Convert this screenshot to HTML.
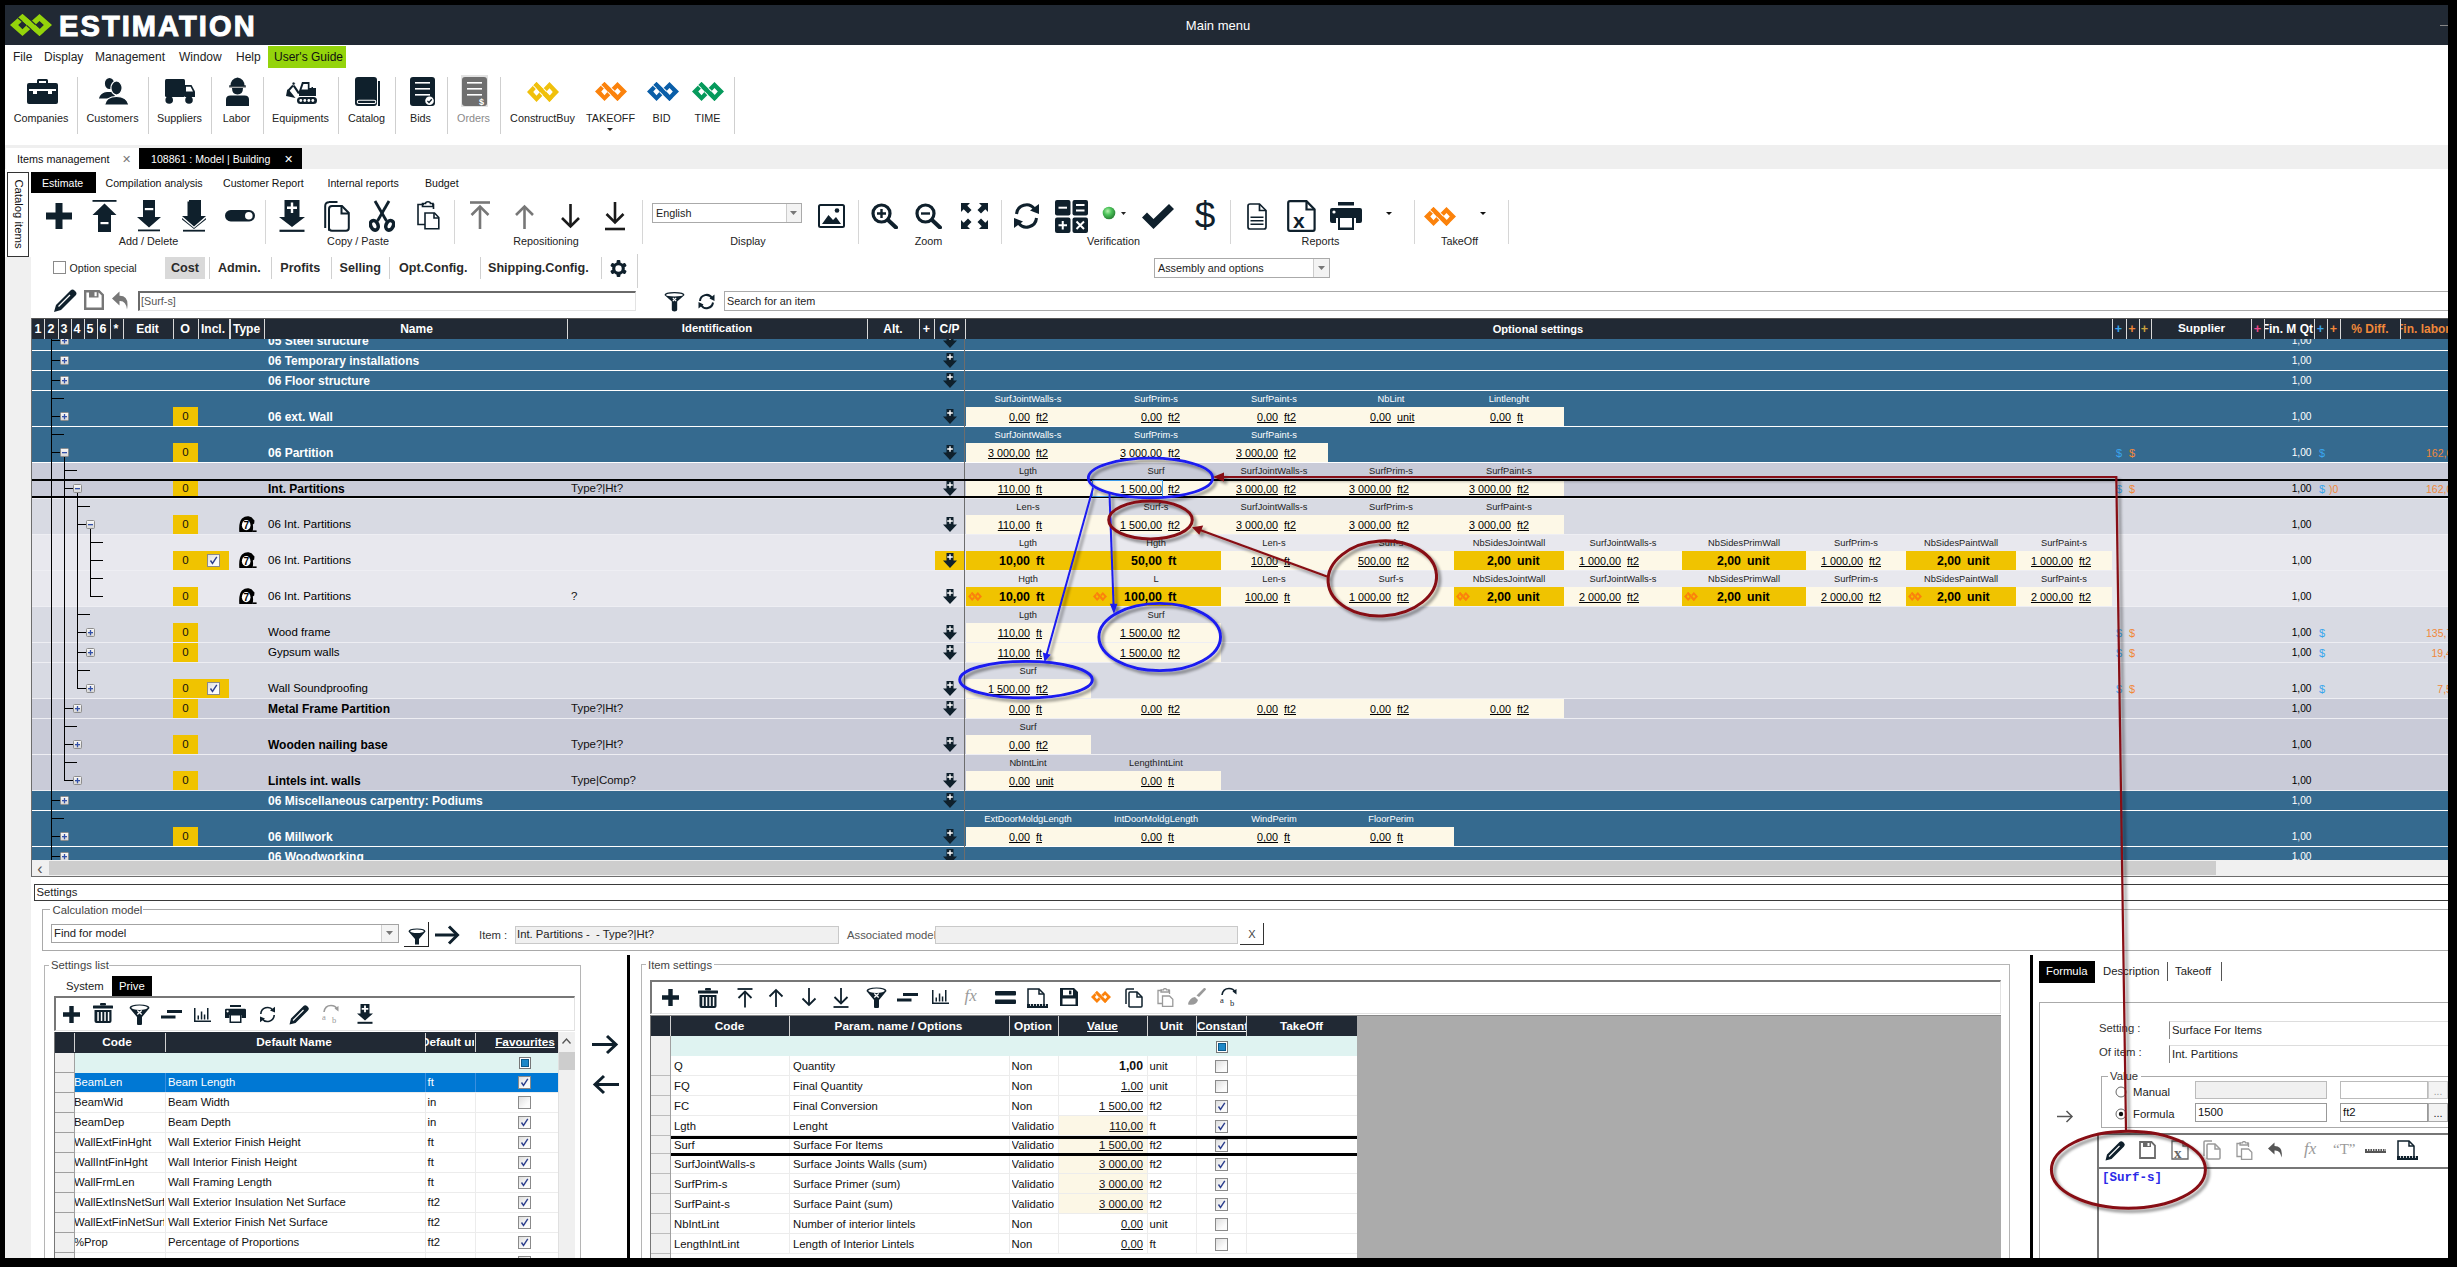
<!DOCTYPE html>
<html><head><meta charset="utf-8"><style>
html,body{margin:0;padding:0;}
body{width:2457px;height:1267px;overflow:hidden;position:relative;font-family:"Liberation Sans",sans-serif;background:#000;}
#root div{position:absolute;box-sizing:border-box;text-decoration-skip-ink:none;}
#root svg{position:absolute;}
</style></head><body><div id="root">
<div style="left:0px;top:0px;width:2457px;height:1267px;background:#000"></div>
<div style="left:5px;top:5px;width:2443px;height:1253px;background:#fff"></div>
<div style="left:5px;top:5px;width:2443px;height:40px;background:#212934"></div>
<svg style="position:absolute;left:10px;top:14px" width="42" height="22" viewBox="0 0 42.7 22.4" preserveAspectRatio="none"><g fill="#94d40b"><path fill-rule="evenodd" d="M0 11.3 L12.7 0 L25.4 11.3 L12.7 22.4 Z M8.3 11.3 L12.7 15.5 L17.1 11.3 L12.7 7.1 Z"/>
<path fill-rule="evenodd" d="M17.3 11.3 L30 0 L42.7 11.3 L30 22.4 Z M25.6 11.3 L30 15.5 L34.4 11.3 L30 7.1 Z"/>
<path d="M12.67 0 L34.25 18.6 L30 22.3 L8.6 3.6 Z"/>
<g stroke="#212934" stroke-width="1.2" fill="none"><path d="M8.2 4 L12.4 7.6"/><path d="M16.9 11.6 L21.2 15.4"/><path d="M21.8 7.2 L26.1 10.9"/></g></g></svg>
<div style="left:59px;top:6.5px;height:38px;line-height:38px;font-size:29px;font-weight:bold;color:#fff;white-space:nowrap;letter-spacing:2.1px;-webkit-text-stroke:1px #fff">ESTIMATION</div>
<div style="left:1018.0px;width:400px;text-align:center;top:16.5px;height:17px;line-height:17px;font-size:13px;font-weight:normal;color:#fff;white-space:nowrap;">Main menu</div>
<div style="left:2440px;top:25px;width:8px;height:1px;background:#888"></div>
<div style="left:13px;top:49.0px;height:16px;line-height:16px;font-size:12px;font-weight:normal;color:#222;white-space:nowrap;">File</div>
<div style="left:44px;top:49.0px;height:16px;line-height:16px;font-size:12px;font-weight:normal;color:#222;white-space:nowrap;">Display</div>
<div style="left:95px;top:49.0px;height:16px;line-height:16px;font-size:12px;font-weight:normal;color:#222;white-space:nowrap;">Management</div>
<div style="left:179px;top:49.0px;height:16px;line-height:16px;font-size:12px;font-weight:normal;color:#222;white-space:nowrap;">Window</div>
<div style="left:236px;top:49.0px;height:16px;line-height:16px;font-size:12px;font-weight:normal;color:#222;white-space:nowrap;">Help</div>
<div style="left:268px;top:46px;width:78px;height:22px;background:#94d40b"></div>
<div style="left:274px;top:49.0px;height:16px;line-height:16px;font-size:12px;font-weight:normal;color:#111;white-space:nowrap;">User's Guide</div>
<div style="left:77px;top:77px;width:1px;height:57px;background:#cfcfcf"></div>
<div style="left:148px;top:77px;width:1px;height:57px;background:#cfcfcf"></div>
<div style="left:211px;top:77px;width:1px;height:57px;background:#cfcfcf"></div>
<div style="left:263px;top:77px;width:1px;height:57px;background:#cfcfcf"></div>
<div style="left:338px;top:77px;width:1px;height:57px;background:#cfcfcf"></div>
<div style="left:395px;top:77px;width:1px;height:57px;background:#cfcfcf"></div>
<div style="left:447px;top:77px;width:1px;height:57px;background:#cfcfcf"></div>
<div style="left:500px;top:77px;width:1px;height:57px;background:#cfcfcf"></div>
<div style="left:734px;top:77px;width:1px;height:57px;background:#cfcfcf"></div>
<div style="left:-19.0px;width:120px;text-align:center;top:111.0px;height:14px;line-height:14px;font-size:10.8px;font-weight:normal;color:#222;white-space:nowrap;">Companies</div>
<div style="left:52.5px;width:120px;text-align:center;top:111.0px;height:14px;line-height:14px;font-size:10.8px;font-weight:normal;color:#222;white-space:nowrap;">Customers</div>
<div style="left:119.5px;width:120px;text-align:center;top:111.0px;height:14px;line-height:14px;font-size:10.8px;font-weight:normal;color:#222;white-space:nowrap;">Suppliers</div>
<div style="left:176.5px;width:120px;text-align:center;top:111.0px;height:14px;line-height:14px;font-size:10.8px;font-weight:normal;color:#222;white-space:nowrap;">Labor</div>
<div style="left:240.5px;width:120px;text-align:center;top:111.0px;height:14px;line-height:14px;font-size:10.8px;font-weight:normal;color:#222;white-space:nowrap;">Equipments</div>
<div style="left:306.5px;width:120px;text-align:center;top:111.0px;height:14px;line-height:14px;font-size:10.8px;font-weight:normal;color:#222;white-space:nowrap;">Catalog</div>
<div style="left:360.5px;width:120px;text-align:center;top:111.0px;height:14px;line-height:14px;font-size:10.8px;font-weight:normal;color:#222;white-space:nowrap;">Bids</div>
<div style="left:413.5px;width:120px;text-align:center;top:111.0px;height:14px;line-height:14px;font-size:10.8px;font-weight:normal;color:#8a8a8a;white-space:nowrap;">Orders</div>
<div style="left:482.5px;width:120px;text-align:center;top:111.0px;height:14px;line-height:14px;font-size:10.8px;font-weight:normal;color:#222;white-space:nowrap;">ConstructBuy</div>
<div style="left:550.5px;width:120px;text-align:center;top:111.0px;height:14px;line-height:14px;font-size:10.8px;font-weight:normal;color:#222;white-space:nowrap;">TAKEOFF</div>
<div style="left:601.5px;width:120px;text-align:center;top:111.0px;height:14px;line-height:14px;font-size:10.8px;font-weight:normal;color:#222;white-space:nowrap;">BID</div>
<div style="left:647.5px;width:120px;text-align:center;top:111.0px;height:14px;line-height:14px;font-size:10.8px;font-weight:normal;color:#222;white-space:nowrap;">TIME</div>
<svg style="position:absolute;left:607px;top:128px;" width="6" height="4" viewBox="0 0 6 4"><path d="M0 0 L6 0 L3 3 Z" fill="#222"/></svg>
<svg style="position:absolute;left:527px;top:82px" width="32" height="20" viewBox="0 0 42.7 22.4" preserveAspectRatio="none"><g fill="#f0c00c"><path fill-rule="evenodd" d="M0 11.3 L12.7 0 L25.4 11.3 L12.7 22.4 Z M8.3 11.3 L12.7 15.5 L17.1 11.3 L12.7 7.1 Z"/>
<path fill-rule="evenodd" d="M17.3 11.3 L30 0 L42.7 11.3 L30 22.4 Z M25.6 11.3 L30 15.5 L34.4 11.3 L30 7.1 Z"/>
<path d="M12.67 0 L34.25 18.6 L30 22.3 L8.6 3.6 Z"/>
<g stroke="#fff" stroke-width="1.2" fill="none"><path d="M8.2 4 L12.4 7.6"/><path d="M16.9 11.6 L21.2 15.4"/><path d="M21.8 7.2 L26.1 10.9"/></g></g></svg>
<svg style="position:absolute;left:595px;top:81.5px" width="32" height="19" viewBox="0 0 42.7 22.4" preserveAspectRatio="none"><g fill="#fb820c"><path fill-rule="evenodd" d="M0 11.3 L12.7 0 L25.4 11.3 L12.7 22.4 Z M8.3 11.3 L12.7 15.5 L17.1 11.3 L12.7 7.1 Z"/>
<path fill-rule="evenodd" d="M17.3 11.3 L30 0 L42.7 11.3 L30 22.4 Z M25.6 11.3 L30 15.5 L34.4 11.3 L30 7.1 Z"/>
<path d="M12.67 0 L34.25 18.6 L30 22.3 L8.6 3.6 Z"/>
<g stroke="#fff" stroke-width="1.2" fill="none"><path d="M8.2 4 L12.4 7.6"/><path d="M16.9 11.6 L21.2 15.4"/><path d="M21.8 7.2 L26.1 10.9"/></g></g></svg>
<svg style="position:absolute;left:647px;top:81.5px" width="32" height="19" viewBox="0 0 42.7 22.4" preserveAspectRatio="none"><g fill="#0a5ea8"><path fill-rule="evenodd" d="M0 11.3 L12.7 0 L25.4 11.3 L12.7 22.4 Z M8.3 11.3 L12.7 15.5 L17.1 11.3 L12.7 7.1 Z"/>
<path fill-rule="evenodd" d="M17.3 11.3 L30 0 L42.7 11.3 L30 22.4 Z M25.6 11.3 L30 15.5 L34.4 11.3 L30 7.1 Z"/>
<path d="M12.67 0 L34.25 18.6 L30 22.3 L8.6 3.6 Z"/>
<g stroke="#fff" stroke-width="1.2" fill="none"><path d="M8.2 4 L12.4 7.6"/><path d="M16.9 11.6 L21.2 15.4"/><path d="M21.8 7.2 L26.1 10.9"/></g></g></svg>
<svg style="position:absolute;left:692px;top:81.5px" width="32" height="19" viewBox="0 0 42.7 22.4" preserveAspectRatio="none"><g fill="#069a5c"><path fill-rule="evenodd" d="M0 11.3 L12.7 0 L25.4 11.3 L12.7 22.4 Z M8.3 11.3 L12.7 15.5 L17.1 11.3 L12.7 7.1 Z"/>
<path fill-rule="evenodd" d="M17.3 11.3 L30 0 L42.7 11.3 L30 22.4 Z M25.6 11.3 L30 15.5 L34.4 11.3 L30 7.1 Z"/>
<path d="M12.67 0 L34.25 18.6 L30 22.3 L8.6 3.6 Z"/>
<g stroke="#fff" stroke-width="1.2" fill="none"><path d="M8.2 4 L12.4 7.6"/><path d="M16.9 11.6 L21.2 15.4"/><path d="M21.8 7.2 L26.1 10.9"/></g></g></svg>
<svg style="position:absolute;left:27px;top:79px;" width="31" height="25" viewBox="0 0 31 25"><g fill="#0f202c"><path d="M10 5 V1.5 Q10 0 11.5 0 H19.5 Q21 0 21 1.5 V5 H19 V2 H12 V5 Z"/>
<rect x="0" y="4" width="31" height="21" rx="2"/></g>
<g fill="#fff"><rect x="2" y="10" width="27" height="2"/><rect x="6" y="10" width="4" height="5"/><rect x="21" y="10" width="4" height="5"/></g></svg>
<svg style="position:absolute;left:98px;top:77px;" width="31" height="28" viewBox="0 0 31 28"><g fill="#0f202c" stroke="#fff" stroke-width="1.2">
<ellipse cx="11.5" cy="6.5" rx="5.2" ry="6.2"/>
<path d="M0 22 Q2 15 9 14.5 L14 14.5 Q16 15 18 17 L16 22 Z"/>
<ellipse cx="18.5" cy="11" rx="5.6" ry="7"/>
<path d="M6.5 28 Q8 19.5 18.5 19.5 Q29 19.5 31 28 Z"/></g></svg>
<svg style="position:absolute;left:165px;top:79px;" width="30" height="25" viewBox="0 0 30 25"><g fill="#0f202c"><rect x="0" y="0" width="20" height="18" rx="1.5"/>
<path d="M20 6 H26.5 L30 12.5 V18 H20 Z"/><circle cx="4.2" cy="21" r="3.8"/><circle cx="24" cy="21" r="3.8"/></g>
<path d="M21 7.8 H25.6 L28 12.4 H21 Z" fill="#fff"/></svg>
<svg style="position:absolute;left:226px;top:77px;" width="23" height="29" viewBox="0 0 23 29"><g fill="#0f202c"><path d="M4.5 9 Q4.5 1.5 11.5 0.5 Q18.5 1.5 18.5 9 Z"/>
<rect x="3.2" y="8.3" width="16.6" height="2"/>
<path d="M6 11 Q6 17.5 11.5 17.5 Q17 17.5 17 11 Z"/>
<path d="M0 29 V22.5 Q0 18.5 4.5 18.5 H18.5 Q23 18.5 23 22.5 V29 Z"/></g>
<rect x="3.2" y="9.6" width="16.6" height="0.8" fill="#888"/></svg>
<svg style="position:absolute;left:286px;top:81px;" width="32" height="23" viewBox="0 0 32 23"><g fill="#0f202c">
<path d="M13 10 L16 1 H23.5 V7 H25.5 V6 H27 V7 H30 V15 H13 Z"/>
<rect x="11" y="16" width="20" height="7" rx="3.5"/>
<path d="M14 12 L7.5 2.5 L1.5 9 L3 10.5 L7.2 5.7 L12 13 Z"/>
<path d="M0 15 L1.2 8.5 L3.5 9.5 L9.5 17 Z"/></g>
<path d="M15.5 8.5 L17.5 3 H21.8 V8.5 Z" fill="#fff"/>
<g fill="#fff"><circle cx="14.8" cy="19.5" r="1.4"/><circle cx="18.8" cy="19.5" r="1.4"/><circle cx="22.8" cy="19.5" r="1.4"/><circle cx="26.8" cy="19.5" r="1.4"/></g>
<circle cx="7.6" cy="2.6" r="1.6" fill="#0f202c" stroke="#fff" stroke-width="0.7"/></svg>
<svg style="position:absolute;left:355px;top:77px;" width="25" height="29" viewBox="0 0 25 29"><g fill="#0f202c"><rect x="0" y="0" width="22" height="29" rx="3"/><rect x="23" y="4" width="2" height="25"/></g>
<rect x="2.3" y="23.2" width="18.5" height="3.3" rx="1.6" fill="#0f202c" stroke="#fff" stroke-width="1.1"/></svg>
<svg style="position:absolute;left:410px;top:77px;" width="25" height="29" viewBox="0 0 25 29"><rect x="0" y="0" width="25" height="29" rx="3" fill="#0f202c"/>
<g fill="#fff"><rect x="5" y="5" width="15" height="1.6"/><rect x="5" y="11" width="15" height="1.6"/><rect x="5" y="17" width="15" height="1.6"/></g><circle cx="19.5" cy="23.8" r="4.3" fill="#fff"/><path d="M17.4 23.9 L19 25.5 L21.8 22.3" stroke="#0f202c" stroke-width="1.3" fill="none"/></svg>
<div style="left:461px;top:75px;width:27px;height:32px;background:#e3e3e3"></div>
<svg style="position:absolute;left:462px;top:77px;" width="25" height="29" viewBox="0 0 25 29"><rect x="0" y="0" width="25" height="29" rx="3" fill="#6f6f6f"/>
<g fill="#fff"><rect x="5" y="5" width="15" height="1.6"/><rect x="5" y="11" width="15" height="1.6"/><rect x="5" y="17" width="15" height="1.6"/></g><text x="17" y="27.5" font-size="9" font-weight="bold" fill="#fff" font-family="Liberation Sans">$</text></svg>
<div style="left:5px;top:145px;width:2443px;height:24px;background:#efefef"></div>
<div style="left:6px;top:148px;width:133px;height:21px;background:#fff"></div>
<div style="left:17px;top:151.5px;height:14px;line-height:14px;font-size:10.8px;font-weight:normal;color:#111;white-space:nowrap;">Items management</div>
<div style="left:116.0px;width:20px;text-align:center;top:151.5px;height:14px;line-height:14px;font-size:11px;font-weight:normal;color:#777;white-space:nowrap;">&#x2715;</div>
<div style="left:139px;top:148px;width:163px;height:21px;background:#000"></div>
<div style="left:151px;top:151.5px;height:14px;line-height:14px;font-size:10.6px;font-weight:normal;color:#fff;white-space:nowrap;">108861 : Model | Building</div>
<div style="left:278.0px;width:20px;text-align:center;top:151.5px;height:14px;line-height:14px;font-size:11px;font-weight:normal;color:#fff;white-space:nowrap;">&#x2715;</div>
<div style="left:5px;top:257px;width:26px;height:1001px;background:#f0f0f0"></div>
<div style="left:7px;top:172px;width:22px;height:85px;background:#fff;border:1px solid #333;box-sizing:border-box"></div>
<div style="left:7px;top:172px;width:22px;height:85px;"><div style="position:absolute;left:11px;top:42px;transform:translate(-50%,-50%) rotate(90deg);font-size:11.3px;white-space:nowrap;color:#111;line-height:13px">Catalog items</div></div>
<div style="left:31px;top:169px;width:2417px;height:89px;background:#fff"></div>
<div style="left:31px;top:172px;width:65px;height:21px;background:#000"></div>
<div style="left:42px;top:175.5px;height:14px;line-height:14px;font-size:10.6px;font-weight:normal;color:#fff;white-space:nowrap;">Estimate</div>
<div style="left:105.5px;top:175.5px;height:14px;line-height:14px;font-size:10.6px;font-weight:normal;color:#111;white-space:nowrap;">Compilation analysis</div>
<div style="left:223px;top:175.5px;height:14px;line-height:14px;font-size:10.6px;font-weight:normal;color:#111;white-space:nowrap;">Customer Report</div>
<div style="left:327.5px;top:175.5px;height:14px;line-height:14px;font-size:10.6px;font-weight:normal;color:#111;white-space:nowrap;">Internal reports</div>
<div style="left:425px;top:175.5px;height:14px;line-height:14px;font-size:10.6px;font-weight:normal;color:#111;white-space:nowrap;">Budget</div>
<div style="left:265px;top:200px;width:1px;height:44px;background:#d6d6d6"></div>
<div style="left:453.5px;top:200px;width:1px;height:44px;background:#d6d6d6"></div>
<div style="left:642px;top:200px;width:1px;height:44px;background:#d6d6d6"></div>
<div style="left:857.5px;top:200px;width:1px;height:44px;background:#d6d6d6"></div>
<div style="left:1000.5px;top:200px;width:1px;height:44px;background:#d6d6d6"></div>
<div style="left:1229.5px;top:200px;width:1px;height:44px;background:#d6d6d6"></div>
<div style="left:1413.5px;top:200px;width:1px;height:44px;background:#d6d6d6"></div>
<div style="left:1507.5px;top:200px;width:1px;height:44px;background:#d6d6d6"></div>
<div style="left:78.5px;width:140px;text-align:center;top:234.0px;height:14px;line-height:14px;font-size:10.8px;font-weight:normal;color:#222;white-space:nowrap;">Add / Delete</div>
<div style="left:288.0px;width:140px;text-align:center;top:234.0px;height:14px;line-height:14px;font-size:10.8px;font-weight:normal;color:#222;white-space:nowrap;">Copy / Paste</div>
<div style="left:476.0px;width:140px;text-align:center;top:234.0px;height:14px;line-height:14px;font-size:10.8px;font-weight:normal;color:#222;white-space:nowrap;">Repositioning</div>
<div style="left:678.0px;width:140px;text-align:center;top:234.0px;height:14px;line-height:14px;font-size:10.8px;font-weight:normal;color:#222;white-space:nowrap;">Display</div>
<div style="left:858.5px;width:140px;text-align:center;top:234.0px;height:14px;line-height:14px;font-size:10.8px;font-weight:normal;color:#222;white-space:nowrap;">Zoom</div>
<div style="left:1043.5px;width:140px;text-align:center;top:234.0px;height:14px;line-height:14px;font-size:10.8px;font-weight:normal;color:#222;white-space:nowrap;">Verification</div>
<div style="left:1250.5px;width:140px;text-align:center;top:234.0px;height:14px;line-height:14px;font-size:10.8px;font-weight:normal;color:#222;white-space:nowrap;">Reports</div>
<div style="left:1389.5px;width:140px;text-align:center;top:234.0px;height:14px;line-height:14px;font-size:10.8px;font-weight:normal;color:#222;white-space:nowrap;">TakeOff</div>
<svg style="position:absolute;left:46px;top:203px;" width="26" height="26" viewBox="0 0 26 26"><path d="M9.5 0 H16.5 V9.5 H26 V16.5 H16.5 V26 H9.5 V16.5 H0 V9.5 H9.5 Z" fill="#0f202c"/></svg>
<svg style="position:absolute;left:92px;top:200px;" width="25" height="32" viewBox="0 0 25 32"><g fill="#0f202c"><rect x="0.5" y="0" width="24" height="1.8"/><path d="M12.5 3.5 L24.5 15 H19 V32 H6 V15 H0.5 Z"/></g><rect x="8.5" y="22" width="8" height="2.2" fill="#fff"/></svg>
<svg style="position:absolute;left:137px;top:200px;" width="24" height="32" viewBox="0 0 24 32"><g fill="#0f202c"><path d="M6 0 H18 V17 H24 L12 27.5 L0 17 H6 Z"/><rect x="1" y="29.5" width="22" height="1.8"/></g><rect x="7.8" y="8" width="8.5" height="2.2" fill="#fff"/></svg>
<svg style="position:absolute;left:182px;top:200px;" width="24" height="32" viewBox="0 0 24 32"><g fill="#0f202c"><path d="M7 0 H19 V16 H24 L12 26.5 L0 16 H5.5 V1.5 H7 Z"/><path d="M0 18 L12 28 L24 18 V19.5 L12 29 L0 19.5 Z"/><rect x="1" y="29.8" width="22" height="1.8"/></g></svg>
<svg style="position:absolute;left:225px;top:210px;" width="30" height="12" viewBox="0 0 30 12"><rect x="0" y="0" width="30" height="11.5" rx="5.75" fill="#0f202c"/><circle cx="23.8" cy="5.75" r="3.8" fill="#fff"/></svg>
<svg style="position:absolute;left:279px;top:200px;" width="26" height="32" viewBox="0 0 26 32"><g fill="#0f202c"><path d="M5.5 0 H20.5 V17 H26 L13 27 L0 17 H5.5 Z"/><rect x="0.5" y="29.7" width="25" height="2.2"/></g><path d="M11.8 2.5 H14.2 V6.5 H18 V9 H14.2 V13 H11.8 V9 H8 V6.5 H11.8 Z" fill="#fff"/></svg>
<svg style="position:absolute;left:324px;top:201px;" width="26" height="31" viewBox="0 0 26 31"><g fill="none" stroke="#0f202c" stroke-width="2"><path d="M5 1 H13.5"/><path d="M1.2 27 V5 Q1.2 1.2 5 1.2"/><path d="M5 29.8 V8 Q5 5 8 5 H18 L24.8 12 V27 Q24.8 29.8 22 29.8 H8 Q5 29.8 5 27"/><path d="M17.5 5.5 V12.5 H24.5"/></g></svg>
<svg style="position:absolute;left:369px;top:200px;" width="26" height="32" viewBox="0 0 26 32"><g fill="none" stroke="#0f202c" stroke-width="2.8"><path d="M6 1 L17.5 21"/><path d="M20 1 L8.5 21"/></g><g fill="none" stroke="#0f202c" stroke-width="3.6"><ellipse cx="5.3" cy="25.3" rx="3.6" ry="5" transform="rotate(-25 5.3 25.3)"/><ellipse cx="20.7" cy="25.3" rx="3.6" ry="5" transform="rotate(25 20.7 25.3)"/></g></svg>
<svg style="position:absolute;left:417px;top:201px;" width="23" height="29" viewBox="0 0 23 29"><g fill="none" stroke="#0f202c" stroke-width="1.6"><path d="M7 3.5 H1 V23.5 H8"/><path d="M15 3.5 H16.5 V8"/><path d="M5.5 5.5 V2.5 H8.5 Q8.5 0.8 11 0.8 Q13.5 0.8 13.5 2.5 H16 V5.5 Z"/><path d="M8 27.8 V12 H17.5 L21.8 16.5 V27.8 Z"/><path d="M17 12 V17 H21.8"/></g></svg>
<svg style="position:absolute;left:470px;top:201px;" width="21" height="29" viewBox="0 0 21 29"><g stroke="#777" stroke-width="2.6" fill="none"><path d="M0 1.5 H20"/><path d="M10 28 V6"/><path d="M1.5 14 L10 5.5 L18.5 14"/></g></svg>
<svg style="position:absolute;left:515px;top:204px;" width="19" height="26" viewBox="0 0 19 26"><g stroke="#777" stroke-width="2.6" fill="none"><path d="M9.5 25 V3"/><path d="M1 11 L9.5 2.5 L18 11"/></g></svg>
<svg style="position:absolute;left:561px;top:204px;" width="19" height="26" viewBox="0 0 19 26"><g stroke="#1a1a1a" stroke-width="2.6" fill="none"><path d="M9.5 0 V22"/><path d="M1 14 L9.5 22.5 L18 14"/></g></svg>
<svg style="position:absolute;left:605px;top:202px;" width="21" height="29" viewBox="0 0 21 29"><g stroke="#1a1a1a" stroke-width="2.6" fill="none"><path d="M10 0 V20"/><path d="M1.5 12 L10 20.5 L18.5 12"/><path d="M0 27 H20"/></g></svg>
<div style="left:652px;top:203px;width:150px;height:20px;background:#fff;border:1px solid #aaa"></div>
<div style="left:786px;top:204px;width:15px;height:18px;background:#f3f3f3;border-left:1px solid #ccc"></div>
<svg style="position:absolute;left:790px;top:211px;" width="7" height="4" viewBox="0 0 7 4"><path d="M0 0 H7 L3.5 4 Z" fill="#777"/></svg>
<div style="left:656px;top:206.0px;height:14px;line-height:14px;font-size:10.8px;font-weight:normal;color:#222;white-space:nowrap;">English</div>
<svg style="position:absolute;left:818px;top:204px;" width="27" height="24" viewBox="0 0 27 24"><rect x="1" y="1" width="25" height="22" rx="1.5" fill="none" stroke="#0f202c" stroke-width="2"/><path d="M4 20 L10.5 11 L15 16 L18 13 L23 20 Z" fill="#0f202c"/><circle cx="19" cy="6.5" r="2.3" fill="#0f202c"/></svg>
<svg style="position:absolute;left:871px;top:203px;" width="27" height="26" viewBox="0 0 27 26"><circle cx="10.5" cy="10.5" r="8.5" fill="none" stroke="#0f202c" stroke-width="3.2"/><path d="M17 17 L25 24.5" stroke="#0f202c" stroke-width="4" stroke-linecap="round"/><path d="M6 10.5 H15 M10.5 6 V15" stroke="#0f202c" stroke-width="2.4"/></svg>
<svg style="position:absolute;left:915px;top:203px;" width="27" height="26" viewBox="0 0 27 26"><circle cx="10.5" cy="10.5" r="8.5" fill="none" stroke="#0f202c" stroke-width="3.2"/><path d="M17 17 L25 24.5" stroke="#0f202c" stroke-width="4" stroke-linecap="round"/><path d="M6 10.5 H15" stroke="#0f202c" stroke-width="2.4"/></svg>
<svg style="position:absolute;left:961px;top:203px;" width="27" height="26" viewBox="0 0 27 26"><g fill="#0f202c"><path d="M0 0 H9 L6.3 2.7 L10.5 7 L7 10.5 L2.7 6.3 L0 9 Z"/><path d="M27 0 V9 L24.3 6.3 L20 10.5 L16.5 7 L20.7 2.7 L18 0 Z"/><path d="M0 26 V17 L2.7 19.7 L7 15.5 L10.5 19 L6.3 23.3 L9 26 Z"/><path d="M27 26 H18 L20.7 23.3 L16.5 19 L20 15.5 L24.3 19.7 L27 17 Z"/></g></svg>
<svg style="position:absolute;left:1013px;top:203px;" width="27" height="26" viewBox="0 0 27 26"><g fill="none" stroke="#0f202c" stroke-width="3"><path d="M3.5 11 A10 10 0 0 1 21.5 6"/><path d="M23.5 15 A10 10 0 0 1 5.5 20"/></g><g fill="#0f202c"><path d="M17 7.5 L26 1 V11 Z"/><path d="M10 18.5 L1 25 V15 Z"/></g></svg>
<svg style="position:absolute;left:1055px;top:200px;" width="33" height="33" viewBox="0 0 33 33"><g fill="#0f202c"><rect x="0" y="0" width="15.5" height="15.5" rx="2"/><rect x="17.5" y="0" width="15.5" height="15.5" rx="2"/><rect x="0" y="17.5" width="15.5" height="15.5" rx="2"/><rect x="17.5" y="17.5" width="15.5" height="15.5" rx="2"/></g><g stroke="#fff" stroke-width="2"><path d="M3.5 7.7 H12"/><path d="M21 5 H29.5 M21 10.5 H29.5"/><path d="M3.5 25.2 H12 M7.75 21 V29.5"/><path d="M21.5 21.5 L29 29 M29 21.5 L21.5 29"/></g></svg>
<svg style="position:absolute;left:1102px;top:206px;" width="14" height="14" viewBox="0 0 14 14"><defs><radialGradient id="gd" cx="40%" cy="35%" r="60%"><stop offset="0" stop-color="#b8f0b0"/><stop offset="0.5" stop-color="#4cc35a"/><stop offset="1" stop-color="#2e8a3a"/></radialGradient></defs><circle cx="7" cy="7" r="6.3" fill="url(#gd)"/></svg>
<svg style="position:absolute;left:1121px;top:212px;" width="5" height="3" viewBox="0 0 5 3"><path d="M0 0 H5 L2.5 3 Z" fill="#222"/></svg>
<svg style="position:absolute;left:1142px;top:204px;" width="32" height="26" viewBox="0 0 32 26"><path d="M0 13.5 L5 8.5 L11.5 15 L27 0 L32 5 L11.5 25 Z" fill="#0f202c"/></svg>
<div style="left:1192px;top:196px;width:26px;height:40px;font-size:37px;line-height:40px;text-align:center;color:#0f202c;font-family:Liberation Sans">$</div>
<svg style="position:absolute;left:1247px;top:203px;" width="20" height="27" viewBox="0 0 20 27"><g fill="none" stroke="#0f202c" stroke-width="1.7"><path d="M1 3 Q1 1 3 1 H12.5 L19 7.5 V24 Q19 26 17 26 H3 Q1 26 1 24 Z"/><path d="M12.5 1 V7.5 H19"/></g><g fill="#0f202c"><rect x="3.5" y="13.5" width="13" height="1.5"/><rect x="3.5" y="17" width="13" height="1.5"/><rect x="3.5" y="20.5" width="13" height="1.5"/></g></svg>
<svg style="position:absolute;left:1287px;top:200px;" width="29" height="32" viewBox="0 0 29 32"><g fill="none" stroke="#0f202c" stroke-width="2.2"><path d="M1.2 3 Q1.2 1.2 3 1.2 H19.5 L27.6 9.5 V29 Q27.6 30.8 26 30.8 H3 Q1.2 30.8 1.2 29 Z"/><path d="M19.5 1.5 V9.5 H27.5"/></g><text x="6" y="28" font-family="Liberation Sans" font-weight="bold" font-size="21" fill="#0f202c">x</text></svg>
<svg style="position:absolute;left:1330px;top:202px;" width="32" height="28" viewBox="0 0 32 28"><g fill="#0f202c"><rect x="8" y="0" width="16" height="3.5"/><path d="M0 8 Q0 6 2 6 H30 Q32 6 32 8 V19 Q32 21 30 21 H26 V16 H6 V21 H2 Q0 21 0 19 Z"/><path d="M8 14 H24 V28 H8 Z"/></g><rect x="10" y="16" width="12" height="9.5" fill="#fff"/><circle cx="4" cy="10" r="1.6" fill="#fff"/></svg>
<svg style="position:absolute;left:1386px;top:212px;" width="6" height="3" viewBox="0 0 6 3"><path d="M0 0 H6 L3 3 Z" fill="#111"/></svg>
<svg style="position:absolute;left:1424px;top:207px" width="32" height="19" viewBox="0 0 42.7 22.4" preserveAspectRatio="none"><g fill="#fb820c"><path fill-rule="evenodd" d="M0 11.3 L12.7 0 L25.4 11.3 L12.7 22.4 Z M8.3 11.3 L12.7 15.5 L17.1 11.3 L12.7 7.1 Z"/>
<path fill-rule="evenodd" d="M17.3 11.3 L30 0 L42.7 11.3 L30 22.4 Z M25.6 11.3 L30 15.5 L34.4 11.3 L30 7.1 Z"/>
<path d="M12.67 0 L34.25 18.6 L30 22.3 L8.6 3.6 Z"/>
<g stroke="#fff" stroke-width="1.2" fill="none"><path d="M8.2 4 L12.4 7.6"/><path d="M16.9 11.6 L21.2 15.4"/><path d="M21.8 7.2 L26.1 10.9"/></g></g></svg>
<svg style="position:absolute;left:1480px;top:212px;" width="6" height="3" viewBox="0 0 6 3"><path d="M0 0 H6 L3 3 Z" fill="#111"/></svg>
<div style="left:53px;top:261px;width:13px;height:13px;background:#fff;border:1px solid #8a8a8a"></div>
<div style="left:69.5px;top:261.0px;height:14px;line-height:14px;font-size:10.6px;font-weight:normal;color:#222;white-space:nowrap;">Option special</div>
<div style="left:165px;top:257px;width:40px;height:22px;background:#d9d9d9"></div>
<div style="left:171px;top:260.0px;height:16px;line-height:16px;font-size:12.6px;font-weight:bold;color:#2a2a2a;white-space:nowrap;">Cost</div>
<div style="left:218px;top:260.0px;height:16px;line-height:16px;font-size:12.6px;font-weight:bold;color:#2a2a2a;white-space:nowrap;">Admin.</div>
<div style="left:280.3px;top:260.0px;height:16px;line-height:16px;font-size:12.6px;font-weight:bold;color:#2a2a2a;white-space:nowrap;">Profits</div>
<div style="left:339.6px;top:260.0px;height:16px;line-height:16px;font-size:12.6px;font-weight:bold;color:#2a2a2a;white-space:nowrap;">Selling</div>
<div style="left:399px;top:260.0px;height:16px;line-height:16px;font-size:12.6px;font-weight:bold;color:#2a2a2a;white-space:nowrap;">Opt.Config.</div>
<div style="left:488px;top:260.0px;height:16px;line-height:16px;font-size:12.6px;font-weight:bold;color:#2a2a2a;white-space:nowrap;">Shipping.Config.</div>
<div style="left:208.5px;top:257px;width:1px;height:22px;background:#d0d0d0"></div>
<div style="left:270.5px;top:257px;width:1px;height:22px;background:#d0d0d0"></div>
<div style="left:330.5px;top:257px;width:1px;height:22px;background:#d0d0d0"></div>
<div style="left:389px;top:257px;width:1px;height:22px;background:#d0d0d0"></div>
<div style="left:479.5px;top:257px;width:1px;height:22px;background:#d0d0d0"></div>
<div style="left:601px;top:257px;width:1px;height:22px;background:#d0d0d0"></div>
<svg style="position:absolute;left:610px;top:260px;" width="17" height="17" viewBox="0 0 17 17"><g fill="#0f202c"><circle cx="8.5" cy="8.5" r="6.3"/><rect x="6.6" y="0" width="3.8" height="17" rx="1" transform="rotate(0 8.5 8.5)"/><rect x="6.6" y="0" width="3.8" height="17" rx="1" transform="rotate(60 8.5 8.5)"/><rect x="6.6" y="0" width="3.8" height="17" rx="1" transform="rotate(120 8.5 8.5)"/></g><circle cx="8.5" cy="8.5" r="3.2" fill="#fff"/></svg>
<div style="left:636.5px;top:254px;width:1px;height:34px;background:#d0d0d0"></div>
<div style="left:1154px;top:258px;width:176px;height:20px;background:#fff;border:1px solid #aaa"></div>
<div style="left:1313px;top:259px;width:16px;height:18px;background:#f3f3f3;border-left:1px solid #ccc"></div>
<svg style="position:absolute;left:1317.5px;top:266px;" width="7" height="4" viewBox="0 0 7 4"><path d="M0 0 H7 L3.5 4 Z" fill="#777"/></svg>
<div style="left:1158px;top:261.0px;height:14px;line-height:14px;font-size:10.8px;font-weight:normal;color:#222;white-space:nowrap;">Assembly and options</div>
<svg style="position:absolute;left:53px;top:288px;" width="25" height="25" viewBox="0 0 25 25"><path d="M1 24 L3 17 L17.5 2.5 Q19.5 0.5 21.5 2.5 L22.5 3.5 Q24.5 5.5 22.5 7.5 L8 22 Z" fill="#0f202c"/><path d="M5.5 18.5 L17 7" stroke="#fff" stroke-width="1.3"/></svg>
<svg style="position:absolute;left:84px;top:290px;" width="20" height="20" viewBox="0 0 20 20"><path d="M1.2 1.2 H15 L18.8 5 V18.8 H1.2 Z" fill="none" stroke="#777" stroke-width="2.4"/><rect x="5" y="1" width="9.5" height="6.5" fill="#777"/><rect x="10.5" y="2.2" width="2.2" height="4" fill="#fff"/></svg>
<svg style="position:absolute;left:112px;top:291px;" width="17" height="19" viewBox="0 0 17 19"><path d="M7.5 0.5 L0 7.5 L7.5 14.5 V10 Q14 9.5 15 18.5 Q17.5 4.5 7.5 4.8 Z" fill="#777"/></svg>
<div style="left:138px;top:291px;width:498px;height:20px;background:#fff;border-top:2px solid #6a6a6a;border-left:2px solid #6a6a6a;border-bottom:1px solid #e3e3e3;border-right:1px solid #e3e3e3"></div>
<div style="left:141px;top:294.0px;height:14px;line-height:14px;font-size:10.8px;font-weight:normal;color:#555;white-space:nowrap;">[Surf-s]</div>
<svg style="position:absolute;left:664px;top:292px;" width="21" height="20" viewBox="0 0 21 20"><path d="M0.5 3 Q0.5 0 10.5 0 Q20.5 0 20.5 3 L13.2 9.5 V17.8 Q13.2 19.5 10.5 19.5 Q7.8 19.5 7.8 17.8 V9.5 Z" fill="#0f202c"/><ellipse cx="10.5" cy="2.9" rx="8.4" ry="1.7" fill="#fff"/><path d="M8.8 5.8 L12.2 9.2 M12.2 5.8 L8.8 9.2" stroke="#fff" stroke-width="1.2"/></svg>
<svg style="position:absolute;left:698px;top:292px;" width="17" height="19" viewBox="0 0 17 19"><g fill="none" stroke="#0f202c" stroke-width="2"><path d="M2 9 A6.5 6.5 0 0 1 14 6"/><path d="M15 10.5 A6.5 6.5 0 0 1 3 13"/></g><g fill="#0f202c"><path d="M11.5 6.5 L16.5 2.5 V9 Z"/><path d="M5.5 12.5 L0.5 16.5 V10 Z"/></g></svg>
<div style="left:724px;top:291px;width:1724px;height:20px;background:#fff;border:1px solid #aaa;border-right:none"></div>
<div style="left:727px;top:294.0px;height:14px;line-height:14px;font-size:10.8px;font-weight:normal;color:#222;white-space:nowrap;">Search for an item</div>
<div style="left:31px;top:318px;width:2417px;height:559px;background:#fff"></div>
<div style="left:32px;top:339px;width:2416px;height:11px;background:#356a8f"></div>
<div style="left:32px;top:350px;width:2416px;height:1px;background:#ffffff"></div>
<div style="left:32px;top:351px;width:2416px;height:19px;background:#356a8f"></div>
<div style="left:32px;top:370px;width:2416px;height:1px;background:#ffffff"></div>
<div style="left:32px;top:371px;width:2416px;height:19px;background:#356a8f"></div>
<div style="left:32px;top:390px;width:2416px;height:1px;background:#ffffff"></div>
<div style="left:32px;top:391px;width:2416px;height:35px;background:#356a8f"></div>
<div style="left:32px;top:426px;width:2416px;height:1px;background:#ffffff"></div>
<div style="left:32px;top:427px;width:2416px;height:35px;background:#356a8f"></div>
<div style="left:32px;top:462px;width:2416px;height:1px;background:#ffffff"></div>
<div style="left:32px;top:463px;width:2416px;height:35px;background:#c9cbd8"></div>
<div style="left:32px;top:498px;width:2416px;height:1px;background:#eeeef3"></div>
<div style="left:32px;top:499px;width:2416px;height:35px;background:#d8dae3"></div>
<div style="left:32px;top:534px;width:2416px;height:1px;background:#eeeef3"></div>
<div style="left:32px;top:535px;width:2416px;height:35px;background:#e8e8ee"></div>
<div style="left:32px;top:570px;width:2416px;height:1px;background:#eeeef3"></div>
<div style="left:32px;top:571px;width:2416px;height:35px;background:#e8e8ee"></div>
<div style="left:32px;top:606px;width:2416px;height:1px;background:#eeeef3"></div>
<div style="left:32px;top:607px;width:2416px;height:35px;background:#d8dae3"></div>
<div style="left:32px;top:642px;width:2416px;height:1px;background:#eeeef3"></div>
<div style="left:32px;top:643px;width:2416px;height:19px;background:#d8dae3"></div>
<div style="left:32px;top:662px;width:2416px;height:1px;background:#eeeef3"></div>
<div style="left:32px;top:663px;width:2416px;height:35px;background:#d8dae3"></div>
<div style="left:32px;top:698px;width:2416px;height:1px;background:#eeeef3"></div>
<div style="left:32px;top:699px;width:2416px;height:19px;background:#c9cbd8"></div>
<div style="left:32px;top:718px;width:2416px;height:1px;background:#eeeef3"></div>
<div style="left:32px;top:719px;width:2416px;height:35px;background:#c9cbd8"></div>
<div style="left:32px;top:754px;width:2416px;height:1px;background:#eeeef3"></div>
<div style="left:32px;top:755px;width:2416px;height:35px;background:#c9cbd8"></div>
<div style="left:32px;top:790px;width:2416px;height:1px;background:#eeeef3"></div>
<div style="left:32px;top:791px;width:2416px;height:19px;background:#356a8f"></div>
<div style="left:32px;top:810px;width:2416px;height:1px;background:#ffffff"></div>
<div style="left:32px;top:811px;width:2416px;height:35px;background:#356a8f"></div>
<div style="left:32px;top:846px;width:2416px;height:1px;background:#ffffff"></div>
<div style="left:32px;top:847px;width:2416px;height:13px;background:#356a8f"></div>
<div style="left:935px;top:551px;width:29px;height:19px;background:#f0c300"></div>
<div style="left:964px;top:339px;width:1px;height:521px;background:#6d6d6d"></div>
<div style="left:268px;top:332.5px;height:16px;line-height:16px;font-size:12px;font-weight:bold;color:#fff;white-space:nowrap;">05 Steel structure</div>
<svg style="position:absolute;left:943px;top:333px;" width="14" height="15" viewBox="0 0 14 15"><path d="M3.5 0 H10.5 V7.5 H14 L7 15 L0 7.5 H3.5 Z" fill="#0f202c"/><path d="M6.3 1.2 H7.7 V3.3 H9.8 V4.7 H7.7 V6.8 H6.3 V4.7 H4.2 V3.3 H6.3 Z" fill="#fff"/></svg>
<div style="left:2251.5px;width:60px;text-align:right;top:334.0px;height:13px;line-height:13px;font-size:10.2px;font-weight:normal;color:#fff;white-space:nowrap;">1,00</div>
<div style="left:268px;top:352.5px;height:16px;line-height:16px;font-size:12px;font-weight:bold;color:#fff;white-space:nowrap;">06 Temporary installations</div>
<svg style="position:absolute;left:943px;top:353px;" width="14" height="15" viewBox="0 0 14 15"><path d="M3.5 0 H10.5 V7.5 H14 L7 15 L0 7.5 H3.5 Z" fill="#0f202c"/><path d="M6.3 1.2 H7.7 V3.3 H9.8 V4.7 H7.7 V6.8 H6.3 V4.7 H4.2 V3.3 H6.3 Z" fill="#fff"/></svg>
<div style="left:2251.5px;width:60px;text-align:right;top:354.0px;height:13px;line-height:13px;font-size:10.2px;font-weight:normal;color:#fff;white-space:nowrap;">1,00</div>
<div style="left:268px;top:372.5px;height:16px;line-height:16px;font-size:12px;font-weight:bold;color:#fff;white-space:nowrap;">06 Floor structure</div>
<svg style="position:absolute;left:943px;top:373px;" width="14" height="15" viewBox="0 0 14 15"><path d="M3.5 0 H10.5 V7.5 H14 L7 15 L0 7.5 H3.5 Z" fill="#0f202c"/><path d="M6.3 1.2 H7.7 V3.3 H9.8 V4.7 H7.7 V6.8 H6.3 V4.7 H4.2 V3.3 H6.3 Z" fill="#fff"/></svg>
<div style="left:2251.5px;width:60px;text-align:right;top:374.0px;height:13px;line-height:13px;font-size:10.2px;font-weight:normal;color:#fff;white-space:nowrap;">1,00</div>
<div style="left:173px;top:407px;width:25px;height:19px;background:#f0c300"></div>
<div style="left:175.5px;width:20px;text-align:center;top:409.0px;height:15px;line-height:15px;font-size:11.5px;font-weight:normal;color:#111;white-space:nowrap;">0</div>
<div style="left:268px;top:408.5px;height:16px;line-height:16px;font-size:12px;font-weight:bold;color:#fff;white-space:nowrap;">06 ext. Wall</div>
<svg style="position:absolute;left:943px;top:409px;" width="14" height="15" viewBox="0 0 14 15"><path d="M3.5 0 H10.5 V7.5 H14 L7 15 L0 7.5 H3.5 Z" fill="#0f202c"/><path d="M6.3 1.2 H7.7 V3.3 H9.8 V4.7 H7.7 V6.8 H6.3 V4.7 H4.2 V3.3 H6.3 Z" fill="#fff"/></svg>
<div style="left:966px;top:407px;width:125px;height:19px;background:#fdf8e7"></div>
<div style="left:953.0px;width:150px;text-align:center;top:392.5px;height:12px;line-height:12px;font-size:9.3px;font-weight:normal;color:#fff;white-space:nowrap;">SurfJointWalls-s</div>
<div style="left:950px;width:80px;text-align:right;top:409.5px;height:14px;line-height:14px;font-size:10.8px;font-weight:normal;color:#000;white-space:nowrap;text-decoration:underline;text-underline-offset:1px">0,00</div>
<div style="left:1036px;top:409.5px;height:14px;line-height:14px;font-size:10.8px;font-weight:normal;color:#000;white-space:nowrap;text-decoration:underline;text-underline-offset:1px">ft2</div>
<div style="left:1091px;top:407px;width:130px;height:19px;background:#fdf8e7"></div>
<div style="left:1081.0px;width:150px;text-align:center;top:392.5px;height:12px;line-height:12px;font-size:9.3px;font-weight:normal;color:#fff;white-space:nowrap;">SurfPrim-s</div>
<div style="left:1082px;width:80px;text-align:right;top:409.5px;height:14px;line-height:14px;font-size:10.8px;font-weight:normal;color:#000;white-space:nowrap;text-decoration:underline;text-underline-offset:1px">0,00</div>
<div style="left:1168px;top:409.5px;height:14px;line-height:14px;font-size:10.8px;font-weight:normal;color:#000;white-space:nowrap;text-decoration:underline;text-underline-offset:1px">ft2</div>
<div style="left:1221px;top:407px;width:107px;height:19px;background:#fdf8e7"></div>
<div style="left:1199.0px;width:150px;text-align:center;top:392.5px;height:12px;line-height:12px;font-size:9.3px;font-weight:normal;color:#fff;white-space:nowrap;">SurfPaint-s</div>
<div style="left:1198px;width:80px;text-align:right;top:409.5px;height:14px;line-height:14px;font-size:10.8px;font-weight:normal;color:#000;white-space:nowrap;text-decoration:underline;text-underline-offset:1px">0,00</div>
<div style="left:1284px;top:409.5px;height:14px;line-height:14px;font-size:10.8px;font-weight:normal;color:#000;white-space:nowrap;text-decoration:underline;text-underline-offset:1px">ft2</div>
<div style="left:1328px;top:407px;width:126px;height:19px;background:#fdf8e7"></div>
<div style="left:1316.0px;width:150px;text-align:center;top:392.5px;height:12px;line-height:12px;font-size:9.3px;font-weight:normal;color:#fff;white-space:nowrap;">NbLint</div>
<div style="left:1311px;width:80px;text-align:right;top:409.5px;height:14px;line-height:14px;font-size:10.8px;font-weight:normal;color:#000;white-space:nowrap;text-decoration:underline;text-underline-offset:1px">0,00</div>
<div style="left:1397px;top:409.5px;height:14px;line-height:14px;font-size:10.8px;font-weight:normal;color:#000;white-space:nowrap;text-decoration:underline;text-underline-offset:1px">unit</div>
<div style="left:1454px;top:407px;width:110px;height:19px;background:#fdf8e7"></div>
<div style="left:1434.0px;width:150px;text-align:center;top:392.5px;height:12px;line-height:12px;font-size:9.3px;font-weight:normal;color:#fff;white-space:nowrap;">Lintlenght</div>
<div style="left:1431px;width:80px;text-align:right;top:409.5px;height:14px;line-height:14px;font-size:10.8px;font-weight:normal;color:#000;white-space:nowrap;text-decoration:underline;text-underline-offset:1px">0,00</div>
<div style="left:1517px;top:409.5px;height:14px;line-height:14px;font-size:10.8px;font-weight:normal;color:#000;white-space:nowrap;text-decoration:underline;text-underline-offset:1px">ft</div>
<div style="left:2251.5px;width:60px;text-align:right;top:410.0px;height:13px;line-height:13px;font-size:10.2px;font-weight:normal;color:#fff;white-space:nowrap;">1,00</div>
<div style="left:173px;top:443px;width:25px;height:19px;background:#f0c300"></div>
<div style="left:175.5px;width:20px;text-align:center;top:445.0px;height:15px;line-height:15px;font-size:11.5px;font-weight:normal;color:#111;white-space:nowrap;">0</div>
<div style="left:268px;top:444.5px;height:16px;line-height:16px;font-size:12px;font-weight:bold;color:#fff;white-space:nowrap;">06 Partition</div>
<svg style="position:absolute;left:943px;top:445px;" width="14" height="15" viewBox="0 0 14 15"><path d="M3.5 0 H10.5 V7.5 H14 L7 15 L0 7.5 H3.5 Z" fill="#0f202c"/><path d="M6.3 1.2 H7.7 V3.3 H9.8 V4.7 H7.7 V6.8 H6.3 V4.7 H4.2 V3.3 H6.3 Z" fill="#fff"/></svg>
<div style="left:966px;top:443px;width:125px;height:19px;background:#fdf8e7"></div>
<div style="left:953.0px;width:150px;text-align:center;top:428.5px;height:12px;line-height:12px;font-size:9.3px;font-weight:normal;color:#fff;white-space:nowrap;">SurfJointWalls-s</div>
<div style="left:950px;width:80px;text-align:right;top:445.5px;height:14px;line-height:14px;font-size:10.8px;font-weight:normal;color:#000;white-space:nowrap;text-decoration:underline;text-underline-offset:1px">3 000,00</div>
<div style="left:1036px;top:445.5px;height:14px;line-height:14px;font-size:10.8px;font-weight:normal;color:#000;white-space:nowrap;text-decoration:underline;text-underline-offset:1px">ft2</div>
<div style="left:1091px;top:443px;width:130px;height:19px;background:#fdf8e7"></div>
<div style="left:1081.0px;width:150px;text-align:center;top:428.5px;height:12px;line-height:12px;font-size:9.3px;font-weight:normal;color:#fff;white-space:nowrap;">SurfPrim-s</div>
<div style="left:1082px;width:80px;text-align:right;top:445.5px;height:14px;line-height:14px;font-size:10.8px;font-weight:normal;color:#000;white-space:nowrap;text-decoration:underline;text-underline-offset:1px">3 000,00</div>
<div style="left:1168px;top:445.5px;height:14px;line-height:14px;font-size:10.8px;font-weight:normal;color:#000;white-space:nowrap;text-decoration:underline;text-underline-offset:1px">ft2</div>
<div style="left:1221px;top:443px;width:107px;height:19px;background:#fdf8e7"></div>
<div style="left:1199.0px;width:150px;text-align:center;top:428.5px;height:12px;line-height:12px;font-size:9.3px;font-weight:normal;color:#fff;white-space:nowrap;">SurfPaint-s</div>
<div style="left:1198px;width:80px;text-align:right;top:445.5px;height:14px;line-height:14px;font-size:10.8px;font-weight:normal;color:#000;white-space:nowrap;text-decoration:underline;text-underline-offset:1px">3 000,00</div>
<div style="left:1284px;top:445.5px;height:14px;line-height:14px;font-size:10.8px;font-weight:normal;color:#000;white-space:nowrap;text-decoration:underline;text-underline-offset:1px">ft2</div>
<div style="left:2251.5px;width:60px;text-align:right;top:446.0px;height:13px;line-height:13px;font-size:10.2px;font-weight:normal;color:#fff;white-space:nowrap;">1,00</div>
<div style="left:2113.0px;width:12px;text-align:center;top:445.5px;height:14px;line-height:14px;font-size:11px;font-weight:normal;color:#3aa6ee;white-space:nowrap;">$</div>
<div style="left:2126.0px;width:12px;text-align:center;top:445.5px;height:14px;line-height:14px;font-size:11px;font-weight:normal;color:#f0883a;white-space:nowrap;">$</div>
<div style="left:2316.0px;width:12px;text-align:center;top:445.5px;height:14px;line-height:14px;font-size:11px;font-weight:normal;color:#3aa6ee;white-space:nowrap;">$</div>
<div style="left:2426px;top:445.5px;height:14px;line-height:14px;font-size:10.5px;font-weight:normal;color:#f0883a;white-space:nowrap;">162,00</div>
<div style="left:173px;top:479px;width:25px;height:19px;background:#f0c300"></div>
<div style="left:175.5px;width:20px;text-align:center;top:481.0px;height:15px;line-height:15px;font-size:11.5px;font-weight:normal;color:#111;white-space:nowrap;">0</div>
<div style="left:268px;top:480.5px;height:16px;line-height:16px;font-size:12px;font-weight:bold;color:#000;white-space:nowrap;">Int. Partitions</div>
<div style="left:571px;top:481.0px;height:15px;line-height:15px;font-size:11.5px;font-weight:normal;color:#111;white-space:nowrap;">Type?|Ht?</div>
<svg style="position:absolute;left:943px;top:481px;" width="14" height="15" viewBox="0 0 14 15"><path d="M3.5 0 H10.5 V7.5 H14 L7 15 L0 7.5 H3.5 Z" fill="#0f202c"/><path d="M6.3 1.2 H7.7 V3.3 H9.8 V4.7 H7.7 V6.8 H6.3 V4.7 H4.2 V3.3 H6.3 Z" fill="#fff"/></svg>
<div style="left:966px;top:479px;width:125px;height:19px;background:#fdf8e7"></div>
<div style="left:953.0px;width:150px;text-align:center;top:464.5px;height:12px;line-height:12px;font-size:9.3px;font-weight:normal;color:#222;white-space:nowrap;">Lgth</div>
<div style="left:950px;width:80px;text-align:right;top:481.5px;height:14px;line-height:14px;font-size:10.8px;font-weight:normal;color:#000;white-space:nowrap;text-decoration:underline;text-underline-offset:1px">110,00</div>
<div style="left:1036px;top:481.5px;height:14px;line-height:14px;font-size:10.8px;font-weight:normal;color:#000;white-space:nowrap;text-decoration:underline;text-underline-offset:1px">ft</div>
<div style="left:1091px;top:479px;width:130px;height:19px;background:#fdf8e7"></div>
<div style="left:1081.0px;width:150px;text-align:center;top:464.5px;height:12px;line-height:12px;font-size:9.3px;font-weight:normal;color:#222;white-space:nowrap;">Surf</div>
<div style="left:1082px;width:80px;text-align:right;top:481.5px;height:14px;line-height:14px;font-size:10.8px;font-weight:normal;color:#000;white-space:nowrap;text-decoration:underline;text-underline-offset:1px">1 500,00</div>
<div style="left:1168px;top:481.5px;height:14px;line-height:14px;font-size:10.8px;font-weight:normal;color:#000;white-space:nowrap;text-decoration:underline;text-underline-offset:1px">ft2</div>
<div style="left:1221px;top:479px;width:107px;height:19px;background:#fdf8e7"></div>
<div style="left:1199.0px;width:150px;text-align:center;top:464.5px;height:12px;line-height:12px;font-size:9.3px;font-weight:normal;color:#222;white-space:nowrap;">SurfJointWalls-s</div>
<div style="left:1198px;width:80px;text-align:right;top:481.5px;height:14px;line-height:14px;font-size:10.8px;font-weight:normal;color:#000;white-space:nowrap;text-decoration:underline;text-underline-offset:1px">3 000,00</div>
<div style="left:1284px;top:481.5px;height:14px;line-height:14px;font-size:10.8px;font-weight:normal;color:#000;white-space:nowrap;text-decoration:underline;text-underline-offset:1px">ft2</div>
<div style="left:1328px;top:479px;width:126px;height:19px;background:#fdf8e7"></div>
<div style="left:1316.0px;width:150px;text-align:center;top:464.5px;height:12px;line-height:12px;font-size:9.3px;font-weight:normal;color:#222;white-space:nowrap;">SurfPrim-s</div>
<div style="left:1311px;width:80px;text-align:right;top:481.5px;height:14px;line-height:14px;font-size:10.8px;font-weight:normal;color:#000;white-space:nowrap;text-decoration:underline;text-underline-offset:1px">3 000,00</div>
<div style="left:1397px;top:481.5px;height:14px;line-height:14px;font-size:10.8px;font-weight:normal;color:#000;white-space:nowrap;text-decoration:underline;text-underline-offset:1px">ft2</div>
<div style="left:1454px;top:479px;width:110px;height:19px;background:#fdf8e7"></div>
<div style="left:1434.0px;width:150px;text-align:center;top:464.5px;height:12px;line-height:12px;font-size:9.3px;font-weight:normal;color:#222;white-space:nowrap;">SurfPaint-s</div>
<div style="left:1431px;width:80px;text-align:right;top:481.5px;height:14px;line-height:14px;font-size:10.8px;font-weight:normal;color:#000;white-space:nowrap;text-decoration:underline;text-underline-offset:1px">3 000,00</div>
<div style="left:1517px;top:481.5px;height:14px;line-height:14px;font-size:10.8px;font-weight:normal;color:#000;white-space:nowrap;text-decoration:underline;text-underline-offset:1px">ft2</div>
<div style="left:2251.5px;width:60px;text-align:right;top:482.0px;height:13px;line-height:13px;font-size:10.2px;font-weight:normal;color:#000;white-space:nowrap;">1,00</div>
<div style="left:2113.0px;width:12px;text-align:center;top:481.5px;height:14px;line-height:14px;font-size:11px;font-weight:normal;color:#3aa6ee;white-space:nowrap;">$</div>
<div style="left:2126.0px;width:12px;text-align:center;top:481.5px;height:14px;line-height:14px;font-size:11px;font-weight:normal;color:#f0883a;white-space:nowrap;">$</div>
<div style="left:2316.0px;width:12px;text-align:center;top:481.5px;height:14px;line-height:14px;font-size:11px;font-weight:normal;color:#3aa6ee;white-space:nowrap;">$</div>
<div style="left:2329px;top:481.5px;height:14px;line-height:14px;font-size:10.5px;font-weight:normal;color:#f0883a;white-space:nowrap;">)0</div>
<div style="left:2426px;top:481.5px;height:14px;line-height:14px;font-size:10.5px;font-weight:normal;color:#f0883a;white-space:nowrap;">162,00</div>
<div style="left:173px;top:515px;width:25px;height:19px;background:#f0c300"></div>
<div style="left:175.5px;width:20px;text-align:center;top:517.0px;height:15px;line-height:15px;font-size:11.5px;font-weight:normal;color:#111;white-space:nowrap;">0</div>
<svg style="position:absolute;left:238.5px;top:515.5px;" width="18" height="17" viewBox="0 0 18 17"><path d="M0.3 16 Q-0.5 6 3 2.5 Q6 0 9.5 0.3 Q13 0.6 14.5 3.5 L15.5 4.5 L15.2 7.5 L13.8 8.5 Q14.5 12 13.5 16 Z" fill="#000"/><rect x="13.3" y="14.4" width="4.3" height="1.6" fill="#000"/><ellipse cx="7.2" cy="9.2" rx="4.3" ry="5.1" fill="#fff"/><text x="4.6" y="13.4" font-family="Liberation Sans" font-weight="bold" font-size="10" fill="#000">7</text></svg>
<div style="left:268px;top:517.0px;height:15px;line-height:15px;font-size:11.5px;font-weight:normal;color:#000;white-space:nowrap;">06 Int. Partitions</div>
<svg style="position:absolute;left:943px;top:517px;" width="14" height="15" viewBox="0 0 14 15"><path d="M3.5 0 H10.5 V7.5 H14 L7 15 L0 7.5 H3.5 Z" fill="#0f202c"/><path d="M6.3 1.2 H7.7 V3.3 H9.8 V4.7 H7.7 V6.8 H6.3 V4.7 H4.2 V3.3 H6.3 Z" fill="#fff"/></svg>
<div style="left:966px;top:515px;width:125px;height:19px;background:#fdf8e7"></div>
<div style="left:953.0px;width:150px;text-align:center;top:500.5px;height:12px;line-height:12px;font-size:9.3px;font-weight:normal;color:#222;white-space:nowrap;">Len-s</div>
<div style="left:950px;width:80px;text-align:right;top:517.5px;height:14px;line-height:14px;font-size:10.8px;font-weight:normal;color:#000;white-space:nowrap;text-decoration:underline;text-underline-offset:1px">110,00</div>
<div style="left:1036px;top:517.5px;height:14px;line-height:14px;font-size:10.8px;font-weight:normal;color:#000;white-space:nowrap;text-decoration:underline;text-underline-offset:1px">ft</div>
<div style="left:1091px;top:515px;width:130px;height:19px;background:#fdf8e7"></div>
<div style="left:1081.0px;width:150px;text-align:center;top:500.5px;height:12px;line-height:12px;font-size:9.3px;font-weight:normal;color:#222;white-space:nowrap;">Surf-s</div>
<div style="left:1082px;width:80px;text-align:right;top:517.5px;height:14px;line-height:14px;font-size:10.8px;font-weight:normal;color:#000;white-space:nowrap;text-decoration:underline;text-underline-offset:1px">1 500,00</div>
<div style="left:1168px;top:517.5px;height:14px;line-height:14px;font-size:10.8px;font-weight:normal;color:#000;white-space:nowrap;text-decoration:underline;text-underline-offset:1px">ft2</div>
<div style="left:1221px;top:515px;width:107px;height:19px;background:#fdf8e7"></div>
<div style="left:1199.0px;width:150px;text-align:center;top:500.5px;height:12px;line-height:12px;font-size:9.3px;font-weight:normal;color:#222;white-space:nowrap;">SurfJointWalls-s</div>
<div style="left:1198px;width:80px;text-align:right;top:517.5px;height:14px;line-height:14px;font-size:10.8px;font-weight:normal;color:#000;white-space:nowrap;text-decoration:underline;text-underline-offset:1px">3 000,00</div>
<div style="left:1284px;top:517.5px;height:14px;line-height:14px;font-size:10.8px;font-weight:normal;color:#000;white-space:nowrap;text-decoration:underline;text-underline-offset:1px">ft2</div>
<div style="left:1328px;top:515px;width:126px;height:19px;background:#fdf8e7"></div>
<div style="left:1316.0px;width:150px;text-align:center;top:500.5px;height:12px;line-height:12px;font-size:9.3px;font-weight:normal;color:#222;white-space:nowrap;">SurfPrim-s</div>
<div style="left:1311px;width:80px;text-align:right;top:517.5px;height:14px;line-height:14px;font-size:10.8px;font-weight:normal;color:#000;white-space:nowrap;text-decoration:underline;text-underline-offset:1px">3 000,00</div>
<div style="left:1397px;top:517.5px;height:14px;line-height:14px;font-size:10.8px;font-weight:normal;color:#000;white-space:nowrap;text-decoration:underline;text-underline-offset:1px">ft2</div>
<div style="left:1454px;top:515px;width:110px;height:19px;background:#fdf8e7"></div>
<div style="left:1434.0px;width:150px;text-align:center;top:500.5px;height:12px;line-height:12px;font-size:9.3px;font-weight:normal;color:#222;white-space:nowrap;">SurfPaint-s</div>
<div style="left:1431px;width:80px;text-align:right;top:517.5px;height:14px;line-height:14px;font-size:10.8px;font-weight:normal;color:#000;white-space:nowrap;text-decoration:underline;text-underline-offset:1px">3 000,00</div>
<div style="left:1517px;top:517.5px;height:14px;line-height:14px;font-size:10.8px;font-weight:normal;color:#000;white-space:nowrap;text-decoration:underline;text-underline-offset:1px">ft2</div>
<div style="left:2251.5px;width:60px;text-align:right;top:518.0px;height:13px;line-height:13px;font-size:10.2px;font-weight:normal;color:#000;white-space:nowrap;">1,00</div>
<div style="left:173px;top:551px;width:25px;height:19px;background:#f0c300"></div>
<div style="left:175.5px;width:20px;text-align:center;top:553.0px;height:15px;line-height:15px;font-size:11.5px;font-weight:normal;color:#111;white-space:nowrap;">0</div>
<div style="left:198px;top:551px;width:31px;height:19px;background:#f0c300"></div>
<div style="left:207px;top:554px;width:13px;height:13px;background:linear-gradient(135deg,#dedede,#fbfbfb 70%);border:1px solid #8a8a8a"></div>
<svg style="position:absolute;left:208px;top:555px;" width="11" height="11" viewBox="0 0 11 11"><path d="M2.5 5.5 L4.5 8.5 L8.8 1.8" stroke="#2c3e8c" stroke-width="1.4" fill="none"/></svg>
<svg style="position:absolute;left:238.5px;top:551.5px;" width="18" height="17" viewBox="0 0 18 17"><path d="M0.3 16 Q-0.5 6 3 2.5 Q6 0 9.5 0.3 Q13 0.6 14.5 3.5 L15.5 4.5 L15.2 7.5 L13.8 8.5 Q14.5 12 13.5 16 Z" fill="#000"/><rect x="13.3" y="14.4" width="4.3" height="1.6" fill="#000"/><ellipse cx="7.2" cy="9.2" rx="4.3" ry="5.1" fill="#fff"/><text x="4.6" y="13.4" font-family="Liberation Sans" font-weight="bold" font-size="10" fill="#000">7</text></svg>
<div style="left:268px;top:553.0px;height:15px;line-height:15px;font-size:11.5px;font-weight:normal;color:#000;white-space:nowrap;">06 Int. Partitions</div>
<svg style="position:absolute;left:943px;top:553px;" width="14" height="15" viewBox="0 0 14 15"><path d="M3.5 0 H10.5 V7.5 H14 L7 15 L0 7.5 H3.5 Z" fill="#0f202c"/><path d="M6.3 1.2 H7.7 V3.3 H9.8 V4.7 H7.7 V6.8 H6.3 V4.7 H4.2 V3.3 H6.3 Z" fill="#fff"/></svg>
<div style="left:966px;top:551px;width:125px;height:19px;background:#f0c300"></div>
<div style="left:953.0px;width:150px;text-align:center;top:536.5px;height:12px;line-height:12px;font-size:9.3px;font-weight:normal;color:#222;white-space:nowrap;">Lgth</div>
<div style="left:950px;width:80px;text-align:right;top:552.5px;height:16px;line-height:16px;font-size:12.4px;font-weight:bold;color:#000;white-space:nowrap;">10,00</div>
<div style="left:1036px;top:552.5px;height:16px;line-height:16px;font-size:12.4px;font-weight:bold;color:#000;white-space:nowrap;">ft</div>
<div style="left:1091px;top:551px;width:130px;height:19px;background:#f0c300"></div>
<div style="left:1081.0px;width:150px;text-align:center;top:536.5px;height:12px;line-height:12px;font-size:9.3px;font-weight:normal;color:#222;white-space:nowrap;">Hgth</div>
<div style="left:1082px;width:80px;text-align:right;top:552.5px;height:16px;line-height:16px;font-size:12.4px;font-weight:bold;color:#000;white-space:nowrap;">50,00</div>
<div style="left:1168px;top:552.5px;height:16px;line-height:16px;font-size:12.4px;font-weight:bold;color:#000;white-space:nowrap;">ft</div>
<div style="left:1221px;top:551px;width:107px;height:19px;background:#fdf8e7"></div>
<div style="left:1199.0px;width:150px;text-align:center;top:536.5px;height:12px;line-height:12px;font-size:9.3px;font-weight:normal;color:#222;white-space:nowrap;">Len-s</div>
<div style="left:1198px;width:80px;text-align:right;top:553.5px;height:14px;line-height:14px;font-size:10.8px;font-weight:normal;color:#000;white-space:nowrap;text-decoration:underline;text-underline-offset:1px">10,00</div>
<div style="left:1284px;top:553.5px;height:14px;line-height:14px;font-size:10.8px;font-weight:normal;color:#000;white-space:nowrap;text-decoration:underline;text-underline-offset:1px">ft</div>
<div style="left:1328px;top:551px;width:126px;height:19px;background:#fdf8e7"></div>
<div style="left:1316.0px;width:150px;text-align:center;top:536.5px;height:12px;line-height:12px;font-size:9.3px;font-weight:normal;color:#222;white-space:nowrap;">Surf-s</div>
<div style="left:1311px;width:80px;text-align:right;top:553.5px;height:14px;line-height:14px;font-size:10.8px;font-weight:normal;color:#000;white-space:nowrap;text-decoration:underline;text-underline-offset:1px">500,00</div>
<div style="left:1397px;top:553.5px;height:14px;line-height:14px;font-size:10.8px;font-weight:normal;color:#000;white-space:nowrap;text-decoration:underline;text-underline-offset:1px">ft2</div>
<div style="left:1454px;top:551px;width:110px;height:19px;background:#f0c300"></div>
<div style="left:1434.0px;width:150px;text-align:center;top:536.5px;height:12px;line-height:12px;font-size:9.3px;font-weight:normal;color:#222;white-space:nowrap;">NbSidesJointWall</div>
<div style="left:1431px;width:80px;text-align:right;top:552.5px;height:16px;line-height:16px;font-size:12.4px;font-weight:bold;color:#000;white-space:nowrap;">2,00</div>
<div style="left:1517px;top:552.5px;height:16px;line-height:16px;font-size:12.4px;font-weight:bold;color:#000;white-space:nowrap;">unit</div>
<div style="left:1564px;top:551px;width:118px;height:19px;background:#fdf8e7"></div>
<div style="left:1548.0px;width:150px;text-align:center;top:536.5px;height:12px;line-height:12px;font-size:9.3px;font-weight:normal;color:#222;white-space:nowrap;">SurfJointWalls-s</div>
<div style="left:1541px;width:80px;text-align:right;top:553.5px;height:14px;line-height:14px;font-size:10.8px;font-weight:normal;color:#000;white-space:nowrap;text-decoration:underline;text-underline-offset:1px">1 000,00</div>
<div style="left:1627px;top:553.5px;height:14px;line-height:14px;font-size:10.8px;font-weight:normal;color:#000;white-space:nowrap;text-decoration:underline;text-underline-offset:1px">ft2</div>
<div style="left:1682px;top:551px;width:124px;height:19px;background:#f0c300"></div>
<div style="left:1669.0px;width:150px;text-align:center;top:536.5px;height:12px;line-height:12px;font-size:9.3px;font-weight:normal;color:#222;white-space:nowrap;">NbSidesPrimWall</div>
<div style="left:1661px;width:80px;text-align:right;top:552.5px;height:16px;line-height:16px;font-size:12.4px;font-weight:bold;color:#000;white-space:nowrap;">2,00</div>
<div style="left:1747px;top:552.5px;height:16px;line-height:16px;font-size:12.4px;font-weight:bold;color:#000;white-space:nowrap;">unit</div>
<div style="left:1806px;top:551px;width:100px;height:19px;background:#fdf8e7"></div>
<div style="left:1781.0px;width:150px;text-align:center;top:536.5px;height:12px;line-height:12px;font-size:9.3px;font-weight:normal;color:#222;white-space:nowrap;">SurfPrim-s</div>
<div style="left:1783px;width:80px;text-align:right;top:553.5px;height:14px;line-height:14px;font-size:10.8px;font-weight:normal;color:#000;white-space:nowrap;text-decoration:underline;text-underline-offset:1px">1 000,00</div>
<div style="left:1869px;top:553.5px;height:14px;line-height:14px;font-size:10.8px;font-weight:normal;color:#000;white-space:nowrap;text-decoration:underline;text-underline-offset:1px">ft2</div>
<div style="left:1906px;top:551px;width:110px;height:19px;background:#f0c300"></div>
<div style="left:1886.0px;width:150px;text-align:center;top:536.5px;height:12px;line-height:12px;font-size:9.3px;font-weight:normal;color:#222;white-space:nowrap;">NbSidesPaintWall</div>
<div style="left:1881px;width:80px;text-align:right;top:552.5px;height:16px;line-height:16px;font-size:12.4px;font-weight:bold;color:#000;white-space:nowrap;">2,00</div>
<div style="left:1967px;top:552.5px;height:16px;line-height:16px;font-size:12.4px;font-weight:bold;color:#000;white-space:nowrap;">unit</div>
<div style="left:2016px;top:551px;width:96px;height:19px;background:#fdf8e7"></div>
<div style="left:1989.0px;width:150px;text-align:center;top:536.5px;height:12px;line-height:12px;font-size:9.3px;font-weight:normal;color:#222;white-space:nowrap;">SurfPaint-s</div>
<div style="left:1993px;width:80px;text-align:right;top:553.5px;height:14px;line-height:14px;font-size:10.8px;font-weight:normal;color:#000;white-space:nowrap;text-decoration:underline;text-underline-offset:1px">1 000,00</div>
<div style="left:2079px;top:553.5px;height:14px;line-height:14px;font-size:10.8px;font-weight:normal;color:#000;white-space:nowrap;text-decoration:underline;text-underline-offset:1px">ft2</div>
<div style="left:2251.5px;width:60px;text-align:right;top:554.0px;height:13px;line-height:13px;font-size:10.2px;font-weight:normal;color:#000;white-space:nowrap;">1,00</div>
<div style="left:173px;top:587px;width:25px;height:19px;background:#f0c300"></div>
<div style="left:175.5px;width:20px;text-align:center;top:589.0px;height:15px;line-height:15px;font-size:11.5px;font-weight:normal;color:#111;white-space:nowrap;">0</div>
<svg style="position:absolute;left:238.5px;top:587.5px;" width="18" height="17" viewBox="0 0 18 17"><path d="M0.3 16 Q-0.5 6 3 2.5 Q6 0 9.5 0.3 Q13 0.6 14.5 3.5 L15.5 4.5 L15.2 7.5 L13.8 8.5 Q14.5 12 13.5 16 Z" fill="#000"/><rect x="13.3" y="14.4" width="4.3" height="1.6" fill="#000"/><ellipse cx="7.2" cy="9.2" rx="4.3" ry="5.1" fill="#fff"/><text x="4.6" y="13.4" font-family="Liberation Sans" font-weight="bold" font-size="10" fill="#000">7</text></svg>
<div style="left:268px;top:589.0px;height:15px;line-height:15px;font-size:11.5px;font-weight:normal;color:#000;white-space:nowrap;">06 Int. Partitions</div>
<div style="left:571px;top:589.0px;height:15px;line-height:15px;font-size:11.5px;font-weight:normal;color:#111;white-space:nowrap;">?</div>
<svg style="position:absolute;left:943px;top:589px;" width="14" height="15" viewBox="0 0 14 15"><path d="M3.5 0 H10.5 V7.5 H14 L7 15 L0 7.5 H3.5 Z" fill="#0f202c"/><path d="M6.3 1.2 H7.7 V3.3 H9.8 V4.7 H7.7 V6.8 H6.3 V4.7 H4.2 V3.3 H6.3 Z" fill="#fff"/></svg>
<div style="left:966px;top:587px;width:125px;height:19px;background:#f0c300"></div>
<div style="left:953.0px;width:150px;text-align:center;top:572.5px;height:12px;line-height:12px;font-size:9.3px;font-weight:normal;color:#222;white-space:nowrap;">Hgth</div>
<div style="left:950px;width:80px;text-align:right;top:588.5px;height:16px;line-height:16px;font-size:12.4px;font-weight:bold;color:#000;white-space:nowrap;">10,00</div>
<div style="left:1036px;top:588.5px;height:16px;line-height:16px;font-size:12.4px;font-weight:bold;color:#000;white-space:nowrap;">ft</div>
<svg style="position:absolute;left:968px;top:592px" width="14" height="9" viewBox="0 0 42.7 22.4" preserveAspectRatio="none"><g fill="#fb820c"><path fill-rule="evenodd" d="M0 11.3 L12.7 0 L25.4 11.3 L12.7 22.4 Z M8.3 11.3 L12.7 15.5 L17.1 11.3 L12.7 7.1 Z"/>
<path fill-rule="evenodd" d="M17.3 11.3 L30 0 L42.7 11.3 L30 22.4 Z M25.6 11.3 L30 15.5 L34.4 11.3 L30 7.1 Z"/>
<path d="M12.67 0 L34.25 18.6 L30 22.3 L8.6 3.6 Z"/>
<g stroke="#f0c300" stroke-width="1.2" fill="none"><path d="M8.2 4 L12.4 7.6"/><path d="M16.9 11.6 L21.2 15.4"/><path d="M21.8 7.2 L26.1 10.9"/></g></g></svg>
<div style="left:1091px;top:587px;width:130px;height:19px;background:#f0c300"></div>
<div style="left:1081.0px;width:150px;text-align:center;top:572.5px;height:12px;line-height:12px;font-size:9.3px;font-weight:normal;color:#222;white-space:nowrap;">L</div>
<div style="left:1082px;width:80px;text-align:right;top:588.5px;height:16px;line-height:16px;font-size:12.4px;font-weight:bold;color:#000;white-space:nowrap;">100,00</div>
<div style="left:1168px;top:588.5px;height:16px;line-height:16px;font-size:12.4px;font-weight:bold;color:#000;white-space:nowrap;">ft</div>
<svg style="position:absolute;left:1093px;top:592px" width="14" height="9" viewBox="0 0 42.7 22.4" preserveAspectRatio="none"><g fill="#fb820c"><path fill-rule="evenodd" d="M0 11.3 L12.7 0 L25.4 11.3 L12.7 22.4 Z M8.3 11.3 L12.7 15.5 L17.1 11.3 L12.7 7.1 Z"/>
<path fill-rule="evenodd" d="M17.3 11.3 L30 0 L42.7 11.3 L30 22.4 Z M25.6 11.3 L30 15.5 L34.4 11.3 L30 7.1 Z"/>
<path d="M12.67 0 L34.25 18.6 L30 22.3 L8.6 3.6 Z"/>
<g stroke="#f0c300" stroke-width="1.2" fill="none"><path d="M8.2 4 L12.4 7.6"/><path d="M16.9 11.6 L21.2 15.4"/><path d="M21.8 7.2 L26.1 10.9"/></g></g></svg>
<div style="left:1221px;top:587px;width:107px;height:19px;background:#fdf8e7"></div>
<div style="left:1199.0px;width:150px;text-align:center;top:572.5px;height:12px;line-height:12px;font-size:9.3px;font-weight:normal;color:#222;white-space:nowrap;">Len-s</div>
<div style="left:1198px;width:80px;text-align:right;top:589.5px;height:14px;line-height:14px;font-size:10.8px;font-weight:normal;color:#000;white-space:nowrap;text-decoration:underline;text-underline-offset:1px">100,00</div>
<div style="left:1284px;top:589.5px;height:14px;line-height:14px;font-size:10.8px;font-weight:normal;color:#000;white-space:nowrap;text-decoration:underline;text-underline-offset:1px">ft</div>
<div style="left:1328px;top:587px;width:126px;height:19px;background:#fdf8e7"></div>
<div style="left:1316.0px;width:150px;text-align:center;top:572.5px;height:12px;line-height:12px;font-size:9.3px;font-weight:normal;color:#222;white-space:nowrap;">Surf-s</div>
<div style="left:1311px;width:80px;text-align:right;top:589.5px;height:14px;line-height:14px;font-size:10.8px;font-weight:normal;color:#000;white-space:nowrap;text-decoration:underline;text-underline-offset:1px">1 000,00</div>
<div style="left:1397px;top:589.5px;height:14px;line-height:14px;font-size:10.8px;font-weight:normal;color:#000;white-space:nowrap;text-decoration:underline;text-underline-offset:1px">ft2</div>
<div style="left:1454px;top:587px;width:110px;height:19px;background:#f0c300"></div>
<div style="left:1434.0px;width:150px;text-align:center;top:572.5px;height:12px;line-height:12px;font-size:9.3px;font-weight:normal;color:#222;white-space:nowrap;">NbSidesJointWall</div>
<div style="left:1431px;width:80px;text-align:right;top:588.5px;height:16px;line-height:16px;font-size:12.4px;font-weight:bold;color:#000;white-space:nowrap;">2,00</div>
<div style="left:1517px;top:588.5px;height:16px;line-height:16px;font-size:12.4px;font-weight:bold;color:#000;white-space:nowrap;">unit</div>
<svg style="position:absolute;left:1456px;top:592px" width="14" height="9" viewBox="0 0 42.7 22.4" preserveAspectRatio="none"><g fill="#fb820c"><path fill-rule="evenodd" d="M0 11.3 L12.7 0 L25.4 11.3 L12.7 22.4 Z M8.3 11.3 L12.7 15.5 L17.1 11.3 L12.7 7.1 Z"/>
<path fill-rule="evenodd" d="M17.3 11.3 L30 0 L42.7 11.3 L30 22.4 Z M25.6 11.3 L30 15.5 L34.4 11.3 L30 7.1 Z"/>
<path d="M12.67 0 L34.25 18.6 L30 22.3 L8.6 3.6 Z"/>
<g stroke="#f0c300" stroke-width="1.2" fill="none"><path d="M8.2 4 L12.4 7.6"/><path d="M16.9 11.6 L21.2 15.4"/><path d="M21.8 7.2 L26.1 10.9"/></g></g></svg>
<div style="left:1564px;top:587px;width:118px;height:19px;background:#fdf8e7"></div>
<div style="left:1548.0px;width:150px;text-align:center;top:572.5px;height:12px;line-height:12px;font-size:9.3px;font-weight:normal;color:#222;white-space:nowrap;">SurfJointWalls-s</div>
<div style="left:1541px;width:80px;text-align:right;top:589.5px;height:14px;line-height:14px;font-size:10.8px;font-weight:normal;color:#000;white-space:nowrap;text-decoration:underline;text-underline-offset:1px">2 000,00</div>
<div style="left:1627px;top:589.5px;height:14px;line-height:14px;font-size:10.8px;font-weight:normal;color:#000;white-space:nowrap;text-decoration:underline;text-underline-offset:1px">ft2</div>
<div style="left:1682px;top:587px;width:124px;height:19px;background:#f0c300"></div>
<div style="left:1669.0px;width:150px;text-align:center;top:572.5px;height:12px;line-height:12px;font-size:9.3px;font-weight:normal;color:#222;white-space:nowrap;">NbSidesPrimWall</div>
<div style="left:1661px;width:80px;text-align:right;top:588.5px;height:16px;line-height:16px;font-size:12.4px;font-weight:bold;color:#000;white-space:nowrap;">2,00</div>
<div style="left:1747px;top:588.5px;height:16px;line-height:16px;font-size:12.4px;font-weight:bold;color:#000;white-space:nowrap;">unit</div>
<svg style="position:absolute;left:1684px;top:592px" width="14" height="9" viewBox="0 0 42.7 22.4" preserveAspectRatio="none"><g fill="#fb820c"><path fill-rule="evenodd" d="M0 11.3 L12.7 0 L25.4 11.3 L12.7 22.4 Z M8.3 11.3 L12.7 15.5 L17.1 11.3 L12.7 7.1 Z"/>
<path fill-rule="evenodd" d="M17.3 11.3 L30 0 L42.7 11.3 L30 22.4 Z M25.6 11.3 L30 15.5 L34.4 11.3 L30 7.1 Z"/>
<path d="M12.67 0 L34.25 18.6 L30 22.3 L8.6 3.6 Z"/>
<g stroke="#f0c300" stroke-width="1.2" fill="none"><path d="M8.2 4 L12.4 7.6"/><path d="M16.9 11.6 L21.2 15.4"/><path d="M21.8 7.2 L26.1 10.9"/></g></g></svg>
<div style="left:1806px;top:587px;width:100px;height:19px;background:#fdf8e7"></div>
<div style="left:1781.0px;width:150px;text-align:center;top:572.5px;height:12px;line-height:12px;font-size:9.3px;font-weight:normal;color:#222;white-space:nowrap;">SurfPrim-s</div>
<div style="left:1783px;width:80px;text-align:right;top:589.5px;height:14px;line-height:14px;font-size:10.8px;font-weight:normal;color:#000;white-space:nowrap;text-decoration:underline;text-underline-offset:1px">2 000,00</div>
<div style="left:1869px;top:589.5px;height:14px;line-height:14px;font-size:10.8px;font-weight:normal;color:#000;white-space:nowrap;text-decoration:underline;text-underline-offset:1px">ft2</div>
<div style="left:1906px;top:587px;width:110px;height:19px;background:#f0c300"></div>
<div style="left:1886.0px;width:150px;text-align:center;top:572.5px;height:12px;line-height:12px;font-size:9.3px;font-weight:normal;color:#222;white-space:nowrap;">NbSidesPaintWall</div>
<div style="left:1881px;width:80px;text-align:right;top:588.5px;height:16px;line-height:16px;font-size:12.4px;font-weight:bold;color:#000;white-space:nowrap;">2,00</div>
<div style="left:1967px;top:588.5px;height:16px;line-height:16px;font-size:12.4px;font-weight:bold;color:#000;white-space:nowrap;">unit</div>
<svg style="position:absolute;left:1908px;top:592px" width="14" height="9" viewBox="0 0 42.7 22.4" preserveAspectRatio="none"><g fill="#fb820c"><path fill-rule="evenodd" d="M0 11.3 L12.7 0 L25.4 11.3 L12.7 22.4 Z M8.3 11.3 L12.7 15.5 L17.1 11.3 L12.7 7.1 Z"/>
<path fill-rule="evenodd" d="M17.3 11.3 L30 0 L42.7 11.3 L30 22.4 Z M25.6 11.3 L30 15.5 L34.4 11.3 L30 7.1 Z"/>
<path d="M12.67 0 L34.25 18.6 L30 22.3 L8.6 3.6 Z"/>
<g stroke="#f0c300" stroke-width="1.2" fill="none"><path d="M8.2 4 L12.4 7.6"/><path d="M16.9 11.6 L21.2 15.4"/><path d="M21.8 7.2 L26.1 10.9"/></g></g></svg>
<div style="left:2016px;top:587px;width:96px;height:19px;background:#fdf8e7"></div>
<div style="left:1989.0px;width:150px;text-align:center;top:572.5px;height:12px;line-height:12px;font-size:9.3px;font-weight:normal;color:#222;white-space:nowrap;">SurfPaint-s</div>
<div style="left:1993px;width:80px;text-align:right;top:589.5px;height:14px;line-height:14px;font-size:10.8px;font-weight:normal;color:#000;white-space:nowrap;text-decoration:underline;text-underline-offset:1px">2 000,00</div>
<div style="left:2079px;top:589.5px;height:14px;line-height:14px;font-size:10.8px;font-weight:normal;color:#000;white-space:nowrap;text-decoration:underline;text-underline-offset:1px">ft2</div>
<div style="left:2251.5px;width:60px;text-align:right;top:590.0px;height:13px;line-height:13px;font-size:10.2px;font-weight:normal;color:#000;white-space:nowrap;">1,00</div>
<div style="left:173px;top:623px;width:25px;height:19px;background:#f0c300"></div>
<div style="left:175.5px;width:20px;text-align:center;top:625.0px;height:15px;line-height:15px;font-size:11.5px;font-weight:normal;color:#111;white-space:nowrap;">0</div>
<div style="left:268px;top:625.0px;height:15px;line-height:15px;font-size:11.5px;font-weight:normal;color:#000;white-space:nowrap;">Wood frame</div>
<svg style="position:absolute;left:943px;top:625px;" width="14" height="15" viewBox="0 0 14 15"><path d="M3.5 0 H10.5 V7.5 H14 L7 15 L0 7.5 H3.5 Z" fill="#0f202c"/><path d="M6.3 1.2 H7.7 V3.3 H9.8 V4.7 H7.7 V6.8 H6.3 V4.7 H4.2 V3.3 H6.3 Z" fill="#fff"/></svg>
<div style="left:966px;top:623px;width:125px;height:19px;background:#fdf8e7"></div>
<div style="left:953.0px;width:150px;text-align:center;top:608.5px;height:12px;line-height:12px;font-size:9.3px;font-weight:normal;color:#222;white-space:nowrap;">Lgth</div>
<div style="left:950px;width:80px;text-align:right;top:625.5px;height:14px;line-height:14px;font-size:10.8px;font-weight:normal;color:#000;white-space:nowrap;text-decoration:underline;text-underline-offset:1px">110,00</div>
<div style="left:1036px;top:625.5px;height:14px;line-height:14px;font-size:10.8px;font-weight:normal;color:#000;white-space:nowrap;text-decoration:underline;text-underline-offset:1px">ft</div>
<div style="left:1091px;top:623px;width:130px;height:19px;background:#fdf8e7"></div>
<div style="left:1081.0px;width:150px;text-align:center;top:608.5px;height:12px;line-height:12px;font-size:9.3px;font-weight:normal;color:#222;white-space:nowrap;">Surf</div>
<div style="left:1082px;width:80px;text-align:right;top:625.5px;height:14px;line-height:14px;font-size:10.8px;font-weight:normal;color:#000;white-space:nowrap;text-decoration:underline;text-underline-offset:1px">1 500,00</div>
<div style="left:1168px;top:625.5px;height:14px;line-height:14px;font-size:10.8px;font-weight:normal;color:#000;white-space:nowrap;text-decoration:underline;text-underline-offset:1px">ft2</div>
<div style="left:2251.5px;width:60px;text-align:right;top:626.0px;height:13px;line-height:13px;font-size:10.2px;font-weight:normal;color:#000;white-space:nowrap;">1,00</div>
<div style="left:2113.0px;width:12px;text-align:center;top:625.5px;height:14px;line-height:14px;font-size:11px;font-weight:normal;color:#3aa6ee;white-space:nowrap;">$</div>
<div style="left:2126.0px;width:12px;text-align:center;top:625.5px;height:14px;line-height:14px;font-size:11px;font-weight:normal;color:#f0883a;white-space:nowrap;">$</div>
<div style="left:2316.0px;width:12px;text-align:center;top:625.5px;height:14px;line-height:14px;font-size:11px;font-weight:normal;color:#3aa6ee;white-space:nowrap;">$</div>
<div style="left:2426px;top:625.5px;height:14px;line-height:14px;font-size:10.5px;font-weight:normal;color:#f0883a;white-space:nowrap;">135,75</div>
<div style="left:173px;top:643px;width:25px;height:19px;background:#f0c300"></div>
<div style="left:175.5px;width:20px;text-align:center;top:645.0px;height:15px;line-height:15px;font-size:11.5px;font-weight:normal;color:#111;white-space:nowrap;">0</div>
<div style="left:268px;top:645.0px;height:15px;line-height:15px;font-size:11.5px;font-weight:normal;color:#000;white-space:nowrap;">Gypsum walls</div>
<svg style="position:absolute;left:943px;top:645px;" width="14" height="15" viewBox="0 0 14 15"><path d="M3.5 0 H10.5 V7.5 H14 L7 15 L0 7.5 H3.5 Z" fill="#0f202c"/><path d="M6.3 1.2 H7.7 V3.3 H9.8 V4.7 H7.7 V6.8 H6.3 V4.7 H4.2 V3.3 H6.3 Z" fill="#fff"/></svg>
<div style="left:966px;top:643px;width:125px;height:19px;background:#fdf8e7"></div>
<div style="left:950px;width:80px;text-align:right;top:645.5px;height:14px;line-height:14px;font-size:10.8px;font-weight:normal;color:#000;white-space:nowrap;text-decoration:underline;text-underline-offset:1px">110,00</div>
<div style="left:1036px;top:645.5px;height:14px;line-height:14px;font-size:10.8px;font-weight:normal;color:#000;white-space:nowrap;text-decoration:underline;text-underline-offset:1px">ft</div>
<div style="left:1091px;top:643px;width:130px;height:19px;background:#fdf8e7"></div>
<div style="left:1082px;width:80px;text-align:right;top:645.5px;height:14px;line-height:14px;font-size:10.8px;font-weight:normal;color:#000;white-space:nowrap;text-decoration:underline;text-underline-offset:1px">1 500,00</div>
<div style="left:1168px;top:645.5px;height:14px;line-height:14px;font-size:10.8px;font-weight:normal;color:#000;white-space:nowrap;text-decoration:underline;text-underline-offset:1px">ft2</div>
<div style="left:2251.5px;width:60px;text-align:right;top:646.0px;height:13px;line-height:13px;font-size:10.2px;font-weight:normal;color:#000;white-space:nowrap;">1,00</div>
<div style="left:2113.0px;width:12px;text-align:center;top:645.5px;height:14px;line-height:14px;font-size:11px;font-weight:normal;color:#3aa6ee;white-space:nowrap;">$</div>
<div style="left:2126.0px;width:12px;text-align:center;top:645.5px;height:14px;line-height:14px;font-size:11px;font-weight:normal;color:#f0883a;white-space:nowrap;">$</div>
<div style="left:2316.0px;width:12px;text-align:center;top:645.5px;height:14px;line-height:14px;font-size:11px;font-weight:normal;color:#3aa6ee;white-space:nowrap;">$</div>
<div style="left:2431.5px;top:645.5px;height:14px;line-height:14px;font-size:10.5px;font-weight:normal;color:#f0883a;white-space:nowrap;">19,40</div>
<div style="left:173px;top:679px;width:25px;height:19px;background:#f0c300"></div>
<div style="left:175.5px;width:20px;text-align:center;top:681.0px;height:15px;line-height:15px;font-size:11.5px;font-weight:normal;color:#111;white-space:nowrap;">0</div>
<div style="left:198px;top:679px;width:31px;height:19px;background:#f0c300"></div>
<div style="left:207px;top:682px;width:13px;height:13px;background:linear-gradient(135deg,#dedede,#fbfbfb 70%);border:1px solid #8a8a8a"></div>
<svg style="position:absolute;left:208px;top:683px;" width="11" height="11" viewBox="0 0 11 11"><path d="M2.5 5.5 L4.5 8.5 L8.8 1.8" stroke="#2c3e8c" stroke-width="1.4" fill="none"/></svg>
<div style="left:268px;top:681.0px;height:15px;line-height:15px;font-size:11.5px;font-weight:normal;color:#000;white-space:nowrap;">Wall Soundproofing</div>
<svg style="position:absolute;left:943px;top:681px;" width="14" height="15" viewBox="0 0 14 15"><path d="M3.5 0 H10.5 V7.5 H14 L7 15 L0 7.5 H3.5 Z" fill="#0f202c"/><path d="M6.3 1.2 H7.7 V3.3 H9.8 V4.7 H7.7 V6.8 H6.3 V4.7 H4.2 V3.3 H6.3 Z" fill="#fff"/></svg>
<div style="left:966px;top:679px;width:125px;height:19px;background:#fdf8e7"></div>
<div style="left:953.0px;width:150px;text-align:center;top:664.5px;height:12px;line-height:12px;font-size:9.3px;font-weight:normal;color:#222;white-space:nowrap;">Surf</div>
<div style="left:950px;width:80px;text-align:right;top:681.5px;height:14px;line-height:14px;font-size:10.8px;font-weight:normal;color:#000;white-space:nowrap;text-decoration:underline;text-underline-offset:1px">1 500,00</div>
<div style="left:1036px;top:681.5px;height:14px;line-height:14px;font-size:10.8px;font-weight:normal;color:#000;white-space:nowrap;text-decoration:underline;text-underline-offset:1px">ft2</div>
<div style="left:2251.5px;width:60px;text-align:right;top:682.0px;height:13px;line-height:13px;font-size:10.2px;font-weight:normal;color:#000;white-space:nowrap;">1,00</div>
<div style="left:2113.0px;width:12px;text-align:center;top:681.5px;height:14px;line-height:14px;font-size:11px;font-weight:normal;color:#3aa6ee;white-space:nowrap;">$</div>
<div style="left:2126.0px;width:12px;text-align:center;top:681.5px;height:14px;line-height:14px;font-size:11px;font-weight:normal;color:#f0883a;white-space:nowrap;">$</div>
<div style="left:2316.0px;width:12px;text-align:center;top:681.5px;height:14px;line-height:14px;font-size:11px;font-weight:normal;color:#3aa6ee;white-space:nowrap;">$</div>
<div style="left:2437.3px;top:681.5px;height:14px;line-height:14px;font-size:10.5px;font-weight:normal;color:#f0883a;white-space:nowrap;">7,50</div>
<div style="left:173px;top:699px;width:25px;height:19px;background:#f0c300"></div>
<div style="left:175.5px;width:20px;text-align:center;top:701.0px;height:15px;line-height:15px;font-size:11.5px;font-weight:normal;color:#111;white-space:nowrap;">0</div>
<div style="left:268px;top:700.5px;height:16px;line-height:16px;font-size:12px;font-weight:bold;color:#000;white-space:nowrap;">Metal Frame Partition</div>
<div style="left:571px;top:701.0px;height:15px;line-height:15px;font-size:11.5px;font-weight:normal;color:#111;white-space:nowrap;">Type?|Ht?</div>
<svg style="position:absolute;left:943px;top:701px;" width="14" height="15" viewBox="0 0 14 15"><path d="M3.5 0 H10.5 V7.5 H14 L7 15 L0 7.5 H3.5 Z" fill="#0f202c"/><path d="M6.3 1.2 H7.7 V3.3 H9.8 V4.7 H7.7 V6.8 H6.3 V4.7 H4.2 V3.3 H6.3 Z" fill="#fff"/></svg>
<div style="left:966px;top:699px;width:125px;height:19px;background:#fdf8e7"></div>
<div style="left:950px;width:80px;text-align:right;top:701.5px;height:14px;line-height:14px;font-size:10.8px;font-weight:normal;color:#000;white-space:nowrap;text-decoration:underline;text-underline-offset:1px">0,00</div>
<div style="left:1036px;top:701.5px;height:14px;line-height:14px;font-size:10.8px;font-weight:normal;color:#000;white-space:nowrap;text-decoration:underline;text-underline-offset:1px">ft</div>
<div style="left:1091px;top:699px;width:130px;height:19px;background:#fdf8e7"></div>
<div style="left:1082px;width:80px;text-align:right;top:701.5px;height:14px;line-height:14px;font-size:10.8px;font-weight:normal;color:#000;white-space:nowrap;text-decoration:underline;text-underline-offset:1px">0,00</div>
<div style="left:1168px;top:701.5px;height:14px;line-height:14px;font-size:10.8px;font-weight:normal;color:#000;white-space:nowrap;text-decoration:underline;text-underline-offset:1px">ft2</div>
<div style="left:1221px;top:699px;width:107px;height:19px;background:#fdf8e7"></div>
<div style="left:1198px;width:80px;text-align:right;top:701.5px;height:14px;line-height:14px;font-size:10.8px;font-weight:normal;color:#000;white-space:nowrap;text-decoration:underline;text-underline-offset:1px">0,00</div>
<div style="left:1284px;top:701.5px;height:14px;line-height:14px;font-size:10.8px;font-weight:normal;color:#000;white-space:nowrap;text-decoration:underline;text-underline-offset:1px">ft2</div>
<div style="left:1328px;top:699px;width:126px;height:19px;background:#fdf8e7"></div>
<div style="left:1311px;width:80px;text-align:right;top:701.5px;height:14px;line-height:14px;font-size:10.8px;font-weight:normal;color:#000;white-space:nowrap;text-decoration:underline;text-underline-offset:1px">0,00</div>
<div style="left:1397px;top:701.5px;height:14px;line-height:14px;font-size:10.8px;font-weight:normal;color:#000;white-space:nowrap;text-decoration:underline;text-underline-offset:1px">ft2</div>
<div style="left:1454px;top:699px;width:110px;height:19px;background:#fdf8e7"></div>
<div style="left:1431px;width:80px;text-align:right;top:701.5px;height:14px;line-height:14px;font-size:10.8px;font-weight:normal;color:#000;white-space:nowrap;text-decoration:underline;text-underline-offset:1px">0,00</div>
<div style="left:1517px;top:701.5px;height:14px;line-height:14px;font-size:10.8px;font-weight:normal;color:#000;white-space:nowrap;text-decoration:underline;text-underline-offset:1px">ft2</div>
<div style="left:2251.5px;width:60px;text-align:right;top:702.0px;height:13px;line-height:13px;font-size:10.2px;font-weight:normal;color:#000;white-space:nowrap;">1,00</div>
<div style="left:173px;top:735px;width:25px;height:19px;background:#f0c300"></div>
<div style="left:175.5px;width:20px;text-align:center;top:737.0px;height:15px;line-height:15px;font-size:11.5px;font-weight:normal;color:#111;white-space:nowrap;">0</div>
<div style="left:268px;top:736.5px;height:16px;line-height:16px;font-size:12px;font-weight:bold;color:#000;white-space:nowrap;">Wooden nailing base</div>
<div style="left:571px;top:737.0px;height:15px;line-height:15px;font-size:11.5px;font-weight:normal;color:#111;white-space:nowrap;">Type?|Ht?</div>
<svg style="position:absolute;left:943px;top:737px;" width="14" height="15" viewBox="0 0 14 15"><path d="M3.5 0 H10.5 V7.5 H14 L7 15 L0 7.5 H3.5 Z" fill="#0f202c"/><path d="M6.3 1.2 H7.7 V3.3 H9.8 V4.7 H7.7 V6.8 H6.3 V4.7 H4.2 V3.3 H6.3 Z" fill="#fff"/></svg>
<div style="left:966px;top:735px;width:125px;height:19px;background:#fdf8e7"></div>
<div style="left:953.0px;width:150px;text-align:center;top:720.5px;height:12px;line-height:12px;font-size:9.3px;font-weight:normal;color:#222;white-space:nowrap;">Surf</div>
<div style="left:950px;width:80px;text-align:right;top:737.5px;height:14px;line-height:14px;font-size:10.8px;font-weight:normal;color:#000;white-space:nowrap;text-decoration:underline;text-underline-offset:1px">0,00</div>
<div style="left:1036px;top:737.5px;height:14px;line-height:14px;font-size:10.8px;font-weight:normal;color:#000;white-space:nowrap;text-decoration:underline;text-underline-offset:1px">ft2</div>
<div style="left:2251.5px;width:60px;text-align:right;top:738.0px;height:13px;line-height:13px;font-size:10.2px;font-weight:normal;color:#000;white-space:nowrap;">1,00</div>
<div style="left:173px;top:771px;width:25px;height:19px;background:#f0c300"></div>
<div style="left:175.5px;width:20px;text-align:center;top:773.0px;height:15px;line-height:15px;font-size:11.5px;font-weight:normal;color:#111;white-space:nowrap;">0</div>
<div style="left:268px;top:772.5px;height:16px;line-height:16px;font-size:12px;font-weight:bold;color:#000;white-space:nowrap;">Lintels int. walls</div>
<div style="left:571px;top:773.0px;height:15px;line-height:15px;font-size:11.5px;font-weight:normal;color:#111;white-space:nowrap;">Type|Comp?</div>
<svg style="position:absolute;left:943px;top:773px;" width="14" height="15" viewBox="0 0 14 15"><path d="M3.5 0 H10.5 V7.5 H14 L7 15 L0 7.5 H3.5 Z" fill="#0f202c"/><path d="M6.3 1.2 H7.7 V3.3 H9.8 V4.7 H7.7 V6.8 H6.3 V4.7 H4.2 V3.3 H6.3 Z" fill="#fff"/></svg>
<div style="left:966px;top:771px;width:125px;height:19px;background:#fdf8e7"></div>
<div style="left:953.0px;width:150px;text-align:center;top:756.5px;height:12px;line-height:12px;font-size:9.3px;font-weight:normal;color:#222;white-space:nowrap;">NbIntLint</div>
<div style="left:950px;width:80px;text-align:right;top:773.5px;height:14px;line-height:14px;font-size:10.8px;font-weight:normal;color:#000;white-space:nowrap;text-decoration:underline;text-underline-offset:1px">0,00</div>
<div style="left:1036px;top:773.5px;height:14px;line-height:14px;font-size:10.8px;font-weight:normal;color:#000;white-space:nowrap;text-decoration:underline;text-underline-offset:1px">unit</div>
<div style="left:1091px;top:771px;width:130px;height:19px;background:#fdf8e7"></div>
<div style="left:1081.0px;width:150px;text-align:center;top:756.5px;height:12px;line-height:12px;font-size:9.3px;font-weight:normal;color:#222;white-space:nowrap;">LengthIntLint</div>
<div style="left:1082px;width:80px;text-align:right;top:773.5px;height:14px;line-height:14px;font-size:10.8px;font-weight:normal;color:#000;white-space:nowrap;text-decoration:underline;text-underline-offset:1px">0,00</div>
<div style="left:1168px;top:773.5px;height:14px;line-height:14px;font-size:10.8px;font-weight:normal;color:#000;white-space:nowrap;text-decoration:underline;text-underline-offset:1px">ft</div>
<div style="left:2251.5px;width:60px;text-align:right;top:774.0px;height:13px;line-height:13px;font-size:10.2px;font-weight:normal;color:#000;white-space:nowrap;">1,00</div>
<div style="left:268px;top:792.5px;height:16px;line-height:16px;font-size:12px;font-weight:bold;color:#fff;white-space:nowrap;">06 Miscellaneous carpentry: Podiums</div>
<svg style="position:absolute;left:943px;top:793px;" width="14" height="15" viewBox="0 0 14 15"><path d="M3.5 0 H10.5 V7.5 H14 L7 15 L0 7.5 H3.5 Z" fill="#0f202c"/><path d="M6.3 1.2 H7.7 V3.3 H9.8 V4.7 H7.7 V6.8 H6.3 V4.7 H4.2 V3.3 H6.3 Z" fill="#fff"/></svg>
<div style="left:2251.5px;width:60px;text-align:right;top:794.0px;height:13px;line-height:13px;font-size:10.2px;font-weight:normal;color:#fff;white-space:nowrap;">1,00</div>
<div style="left:173px;top:827px;width:25px;height:19px;background:#f0c300"></div>
<div style="left:175.5px;width:20px;text-align:center;top:829.0px;height:15px;line-height:15px;font-size:11.5px;font-weight:normal;color:#111;white-space:nowrap;">0</div>
<div style="left:268px;top:828.5px;height:16px;line-height:16px;font-size:12px;font-weight:bold;color:#fff;white-space:nowrap;">06 Millwork</div>
<svg style="position:absolute;left:943px;top:829px;" width="14" height="15" viewBox="0 0 14 15"><path d="M3.5 0 H10.5 V7.5 H14 L7 15 L0 7.5 H3.5 Z" fill="#0f202c"/><path d="M6.3 1.2 H7.7 V3.3 H9.8 V4.7 H7.7 V6.8 H6.3 V4.7 H4.2 V3.3 H6.3 Z" fill="#fff"/></svg>
<div style="left:966px;top:827px;width:125px;height:19px;background:#fdf8e7"></div>
<div style="left:953.0px;width:150px;text-align:center;top:812.5px;height:12px;line-height:12px;font-size:9.3px;font-weight:normal;color:#fff;white-space:nowrap;">ExtDoorMoldgLength</div>
<div style="left:950px;width:80px;text-align:right;top:829.5px;height:14px;line-height:14px;font-size:10.8px;font-weight:normal;color:#000;white-space:nowrap;text-decoration:underline;text-underline-offset:1px">0,00</div>
<div style="left:1036px;top:829.5px;height:14px;line-height:14px;font-size:10.8px;font-weight:normal;color:#000;white-space:nowrap;text-decoration:underline;text-underline-offset:1px">ft</div>
<div style="left:1091px;top:827px;width:130px;height:19px;background:#fdf8e7"></div>
<div style="left:1081.0px;width:150px;text-align:center;top:812.5px;height:12px;line-height:12px;font-size:9.3px;font-weight:normal;color:#fff;white-space:nowrap;">IntDoorMoldgLength</div>
<div style="left:1082px;width:80px;text-align:right;top:829.5px;height:14px;line-height:14px;font-size:10.8px;font-weight:normal;color:#000;white-space:nowrap;text-decoration:underline;text-underline-offset:1px">0,00</div>
<div style="left:1168px;top:829.5px;height:14px;line-height:14px;font-size:10.8px;font-weight:normal;color:#000;white-space:nowrap;text-decoration:underline;text-underline-offset:1px">ft</div>
<div style="left:1221px;top:827px;width:107px;height:19px;background:#fdf8e7"></div>
<div style="left:1199.0px;width:150px;text-align:center;top:812.5px;height:12px;line-height:12px;font-size:9.3px;font-weight:normal;color:#fff;white-space:nowrap;">WindPerim</div>
<div style="left:1198px;width:80px;text-align:right;top:829.5px;height:14px;line-height:14px;font-size:10.8px;font-weight:normal;color:#000;white-space:nowrap;text-decoration:underline;text-underline-offset:1px">0,00</div>
<div style="left:1284px;top:829.5px;height:14px;line-height:14px;font-size:10.8px;font-weight:normal;color:#000;white-space:nowrap;text-decoration:underline;text-underline-offset:1px">ft</div>
<div style="left:1328px;top:827px;width:126px;height:19px;background:#fdf8e7"></div>
<div style="left:1316.0px;width:150px;text-align:center;top:812.5px;height:12px;line-height:12px;font-size:9.3px;font-weight:normal;color:#fff;white-space:nowrap;">FloorPerim</div>
<div style="left:1311px;width:80px;text-align:right;top:829.5px;height:14px;line-height:14px;font-size:10.8px;font-weight:normal;color:#000;white-space:nowrap;text-decoration:underline;text-underline-offset:1px">0,00</div>
<div style="left:1397px;top:829.5px;height:14px;line-height:14px;font-size:10.8px;font-weight:normal;color:#000;white-space:nowrap;text-decoration:underline;text-underline-offset:1px">ft</div>
<div style="left:2251.5px;width:60px;text-align:right;top:830.0px;height:13px;line-height:13px;font-size:10.2px;font-weight:normal;color:#fff;white-space:nowrap;">1,00</div>
<div style="left:268px;top:848.5px;height:16px;line-height:16px;font-size:12px;font-weight:bold;color:#fff;white-space:nowrap;">06 Woodworking</div>
<svg style="position:absolute;left:943px;top:849px;" width="14" height="15" viewBox="0 0 14 15"><path d="M3.5 0 H10.5 V7.5 H14 L7 15 L0 7.5 H3.5 Z" fill="#0f202c"/><path d="M6.3 1.2 H7.7 V3.3 H9.8 V4.7 H7.7 V6.8 H6.3 V4.7 H4.2 V3.3 H6.3 Z" fill="#fff"/></svg>
<div style="left:2251.5px;width:60px;text-align:right;top:850.0px;height:13px;line-height:13px;font-size:10.2px;font-weight:normal;color:#fff;white-space:nowrap;">1,00</div>
<div style="left:32px;top:479px;width:2416px;height:2px;background:#000"></div>
<div style="left:32px;top:496px;width:2416px;height:2px;background:#000"></div>
<div style="left:51px;top:339px;width:1px;height:521px;background:#000"></div>
<div style="left:64px;top:457px;width:1px;height:324px;background:#000"></div>
<div style="left:77px;top:492px;width:1px;height:197px;background:#000"></div>
<div style="left:90px;top:528px;width:1px;height:69px;background:#000"></div>
<div style="left:51px;top:340px;width:9px;height:1px;background:#000"></div>
<svg style="position:absolute;left:60px;top:335.5px;" width="9" height="9" viewBox="0 0 9 9"><defs><linearGradient id="eb" x1="0" y1="0" x2="0" y2="1"><stop offset="0" stop-color="#fafafa"/><stop offset="1" stop-color="#d6d6d6"/></linearGradient></defs><rect x="0.5" y="0.5" width="8" height="8" rx="1" fill="url(#eb)" stroke="#8d8d8d" stroke-width="1"/><rect x="2" y="4" width="5" height="1.3" fill="#3350a8"/><rect x="3.85" y="2" width="1.3" height="5.3" fill="#3350a8"/></svg>
<div style="left:51px;top:360px;width:9px;height:1px;background:#000"></div>
<svg style="position:absolute;left:60px;top:355.5px;" width="9" height="9" viewBox="0 0 9 9"><defs><linearGradient id="eb" x1="0" y1="0" x2="0" y2="1"><stop offset="0" stop-color="#fafafa"/><stop offset="1" stop-color="#d6d6d6"/></linearGradient></defs><rect x="0.5" y="0.5" width="8" height="8" rx="1" fill="url(#eb)" stroke="#8d8d8d" stroke-width="1"/><rect x="2" y="4" width="5" height="1.3" fill="#3350a8"/><rect x="3.85" y="2" width="1.3" height="5.3" fill="#3350a8"/></svg>
<div style="left:51px;top:380px;width:9px;height:1px;background:#000"></div>
<svg style="position:absolute;left:60px;top:375.5px;" width="9" height="9" viewBox="0 0 9 9"><defs><linearGradient id="eb" x1="0" y1="0" x2="0" y2="1"><stop offset="0" stop-color="#fafafa"/><stop offset="1" stop-color="#d6d6d6"/></linearGradient></defs><rect x="0.5" y="0.5" width="8" height="8" rx="1" fill="url(#eb)" stroke="#8d8d8d" stroke-width="1"/><rect x="2" y="4" width="5" height="1.3" fill="#3350a8"/><rect x="3.85" y="2" width="1.3" height="5.3" fill="#3350a8"/></svg>
<div style="left:51px;top:398px;width:13px;height:1px;background:#000"></div>
<div style="left:51px;top:416px;width:9px;height:1px;background:#000"></div>
<svg style="position:absolute;left:60px;top:411.5px;" width="9" height="9" viewBox="0 0 9 9"><defs><linearGradient id="eb" x1="0" y1="0" x2="0" y2="1"><stop offset="0" stop-color="#fafafa"/><stop offset="1" stop-color="#d6d6d6"/></linearGradient></defs><rect x="0.5" y="0.5" width="8" height="8" rx="1" fill="url(#eb)" stroke="#8d8d8d" stroke-width="1"/><rect x="2" y="4" width="5" height="1.3" fill="#3350a8"/><rect x="3.85" y="2" width="1.3" height="5.3" fill="#3350a8"/></svg>
<div style="left:51px;top:434px;width:13px;height:1px;background:#000"></div>
<div style="left:51px;top:452px;width:9px;height:1px;background:#000"></div>
<svg style="position:absolute;left:60px;top:447.5px;" width="9" height="9" viewBox="0 0 9 9"><defs><linearGradient id="eb" x1="0" y1="0" x2="0" y2="1"><stop offset="0" stop-color="#fafafa"/><stop offset="1" stop-color="#d6d6d6"/></linearGradient></defs><rect x="0.5" y="0.5" width="8" height="8" rx="1" fill="url(#eb)" stroke="#8d8d8d" stroke-width="1"/><rect x="2" y="4" width="5" height="1.3" fill="#3350a8"/></svg>
<div style="left:64px;top:470px;width:13px;height:1px;background:#000"></div>
<div style="left:64px;top:488px;width:9px;height:1px;background:#000"></div>
<svg style="position:absolute;left:73px;top:483.5px;" width="9" height="9" viewBox="0 0 9 9"><defs><linearGradient id="eb" x1="0" y1="0" x2="0" y2="1"><stop offset="0" stop-color="#fafafa"/><stop offset="1" stop-color="#d6d6d6"/></linearGradient></defs><rect x="0.5" y="0.5" width="8" height="8" rx="1" fill="url(#eb)" stroke="#8d8d8d" stroke-width="1"/><rect x="2" y="4" width="5" height="1.3" fill="#3350a8"/></svg>
<div style="left:77px;top:506px;width:13px;height:1px;background:#000"></div>
<div style="left:77px;top:524px;width:9px;height:1px;background:#000"></div>
<svg style="position:absolute;left:86px;top:519.5px;" width="9" height="9" viewBox="0 0 9 9"><defs><linearGradient id="eb" x1="0" y1="0" x2="0" y2="1"><stop offset="0" stop-color="#fafafa"/><stop offset="1" stop-color="#d6d6d6"/></linearGradient></defs><rect x="0.5" y="0.5" width="8" height="8" rx="1" fill="url(#eb)" stroke="#8d8d8d" stroke-width="1"/><rect x="2" y="4" width="5" height="1.3" fill="#3350a8"/></svg>
<div style="left:90px;top:542px;width:13px;height:1px;background:#000"></div>
<div style="left:90px;top:560px;width:13px;height:1px;background:#000"></div>
<div style="left:90px;top:578px;width:13px;height:1px;background:#000"></div>
<div style="left:90px;top:596px;width:13px;height:1px;background:#000"></div>
<div style="left:77px;top:614px;width:13px;height:1px;background:#000"></div>
<div style="left:77px;top:632px;width:9px;height:1px;background:#000"></div>
<svg style="position:absolute;left:86px;top:627.5px;" width="9" height="9" viewBox="0 0 9 9"><defs><linearGradient id="eb" x1="0" y1="0" x2="0" y2="1"><stop offset="0" stop-color="#fafafa"/><stop offset="1" stop-color="#d6d6d6"/></linearGradient></defs><rect x="0.5" y="0.5" width="8" height="8" rx="1" fill="url(#eb)" stroke="#8d8d8d" stroke-width="1"/><rect x="2" y="4" width="5" height="1.3" fill="#3350a8"/><rect x="3.85" y="2" width="1.3" height="5.3" fill="#3350a8"/></svg>
<div style="left:77px;top:652px;width:9px;height:1px;background:#000"></div>
<svg style="position:absolute;left:86px;top:647.5px;" width="9" height="9" viewBox="0 0 9 9"><defs><linearGradient id="eb" x1="0" y1="0" x2="0" y2="1"><stop offset="0" stop-color="#fafafa"/><stop offset="1" stop-color="#d6d6d6"/></linearGradient></defs><rect x="0.5" y="0.5" width="8" height="8" rx="1" fill="url(#eb)" stroke="#8d8d8d" stroke-width="1"/><rect x="2" y="4" width="5" height="1.3" fill="#3350a8"/><rect x="3.85" y="2" width="1.3" height="5.3" fill="#3350a8"/></svg>
<div style="left:77px;top:670px;width:13px;height:1px;background:#000"></div>
<div style="left:77px;top:688px;width:9px;height:1px;background:#000"></div>
<svg style="position:absolute;left:86px;top:683.5px;" width="9" height="9" viewBox="0 0 9 9"><defs><linearGradient id="eb" x1="0" y1="0" x2="0" y2="1"><stop offset="0" stop-color="#fafafa"/><stop offset="1" stop-color="#d6d6d6"/></linearGradient></defs><rect x="0.5" y="0.5" width="8" height="8" rx="1" fill="url(#eb)" stroke="#8d8d8d" stroke-width="1"/><rect x="2" y="4" width="5" height="1.3" fill="#3350a8"/><rect x="3.85" y="2" width="1.3" height="5.3" fill="#3350a8"/></svg>
<div style="left:64px;top:708px;width:9px;height:1px;background:#000"></div>
<svg style="position:absolute;left:73px;top:703.5px;" width="9" height="9" viewBox="0 0 9 9"><defs><linearGradient id="eb" x1="0" y1="0" x2="0" y2="1"><stop offset="0" stop-color="#fafafa"/><stop offset="1" stop-color="#d6d6d6"/></linearGradient></defs><rect x="0.5" y="0.5" width="8" height="8" rx="1" fill="url(#eb)" stroke="#8d8d8d" stroke-width="1"/><rect x="2" y="4" width="5" height="1.3" fill="#3350a8"/><rect x="3.85" y="2" width="1.3" height="5.3" fill="#3350a8"/></svg>
<div style="left:64px;top:726px;width:13px;height:1px;background:#000"></div>
<div style="left:64px;top:744px;width:9px;height:1px;background:#000"></div>
<svg style="position:absolute;left:73px;top:739.5px;" width="9" height="9" viewBox="0 0 9 9"><defs><linearGradient id="eb" x1="0" y1="0" x2="0" y2="1"><stop offset="0" stop-color="#fafafa"/><stop offset="1" stop-color="#d6d6d6"/></linearGradient></defs><rect x="0.5" y="0.5" width="8" height="8" rx="1" fill="url(#eb)" stroke="#8d8d8d" stroke-width="1"/><rect x="2" y="4" width="5" height="1.3" fill="#3350a8"/><rect x="3.85" y="2" width="1.3" height="5.3" fill="#3350a8"/></svg>
<div style="left:64px;top:762px;width:13px;height:1px;background:#000"></div>
<div style="left:64px;top:780px;width:9px;height:1px;background:#000"></div>
<svg style="position:absolute;left:73px;top:775.5px;" width="9" height="9" viewBox="0 0 9 9"><defs><linearGradient id="eb" x1="0" y1="0" x2="0" y2="1"><stop offset="0" stop-color="#fafafa"/><stop offset="1" stop-color="#d6d6d6"/></linearGradient></defs><rect x="0.5" y="0.5" width="8" height="8" rx="1" fill="url(#eb)" stroke="#8d8d8d" stroke-width="1"/><rect x="2" y="4" width="5" height="1.3" fill="#3350a8"/><rect x="3.85" y="2" width="1.3" height="5.3" fill="#3350a8"/></svg>
<div style="left:51px;top:800px;width:9px;height:1px;background:#000"></div>
<svg style="position:absolute;left:60px;top:795.5px;" width="9" height="9" viewBox="0 0 9 9"><defs><linearGradient id="eb" x1="0" y1="0" x2="0" y2="1"><stop offset="0" stop-color="#fafafa"/><stop offset="1" stop-color="#d6d6d6"/></linearGradient></defs><rect x="0.5" y="0.5" width="8" height="8" rx="1" fill="url(#eb)" stroke="#8d8d8d" stroke-width="1"/><rect x="2" y="4" width="5" height="1.3" fill="#3350a8"/><rect x="3.85" y="2" width="1.3" height="5.3" fill="#3350a8"/></svg>
<div style="left:51px;top:818px;width:13px;height:1px;background:#000"></div>
<div style="left:51px;top:836px;width:9px;height:1px;background:#000"></div>
<svg style="position:absolute;left:60px;top:831.5px;" width="9" height="9" viewBox="0 0 9 9"><defs><linearGradient id="eb" x1="0" y1="0" x2="0" y2="1"><stop offset="0" stop-color="#fafafa"/><stop offset="1" stop-color="#d6d6d6"/></linearGradient></defs><rect x="0.5" y="0.5" width="8" height="8" rx="1" fill="url(#eb)" stroke="#8d8d8d" stroke-width="1"/><rect x="2" y="4" width="5" height="1.3" fill="#3350a8"/><rect x="3.85" y="2" width="1.3" height="5.3" fill="#3350a8"/></svg>
<div style="left:51px;top:856px;width:9px;height:1px;background:#000"></div>
<svg style="position:absolute;left:60px;top:851.5px;" width="9" height="9" viewBox="0 0 9 9"><defs><linearGradient id="eb" x1="0" y1="0" x2="0" y2="1"><stop offset="0" stop-color="#fafafa"/><stop offset="1" stop-color="#d6d6d6"/></linearGradient></defs><rect x="0.5" y="0.5" width="8" height="8" rx="1" fill="url(#eb)" stroke="#8d8d8d" stroke-width="1"/><rect x="2" y="4" width="5" height="1.3" fill="#3350a8"/><rect x="3.85" y="2" width="1.3" height="5.3" fill="#3350a8"/></svg>
<div style="left:31px;top:318px;width:2417px;height:21px;background:#212934;border-top:1px solid #555"></div>
<div style="left:44px;top:319px;width:1px;height:20px;background:#d9d9d9"></div>
<div style="left:57.5px;top:319px;width:1px;height:20px;background:#d9d9d9"></div>
<div style="left:70.5px;top:319px;width:1px;height:20px;background:#d9d9d9"></div>
<div style="left:83.5px;top:319px;width:1px;height:20px;background:#d9d9d9"></div>
<div style="left:96.5px;top:319px;width:1px;height:20px;background:#d9d9d9"></div>
<div style="left:109.5px;top:319px;width:1px;height:20px;background:#d9d9d9"></div>
<div style="left:122.5px;top:319px;width:1px;height:20px;background:#d9d9d9"></div>
<div style="left:172.5px;top:319px;width:1px;height:20px;background:#d9d9d9"></div>
<div style="left:197.5px;top:319px;width:1px;height:20px;background:#d9d9d9"></div>
<div style="left:229px;top:319px;width:1.5px;height:20px;background:#d9d9d9"></div>
<div style="left:264px;top:319px;width:1px;height:20px;background:#d9d9d9"></div>
<div style="left:567px;top:319px;width:1px;height:20px;background:#d9d9d9"></div>
<div style="left:867px;top:319px;width:1px;height:20px;background:#d9d9d9"></div>
<div style="left:919px;top:319px;width:1px;height:20px;background:#d9d9d9"></div>
<div style="left:934px;top:319px;width:1px;height:20px;background:#d9d9d9"></div>
<div style="left:964.5px;top:319px;width:1px;height:20px;background:#d9d9d9"></div>
<div style="left:2111.5px;top:319px;width:1px;height:20px;background:#d9d9d9"></div>
<div style="left:2125.5px;top:319px;width:1px;height:20px;background:#d9d9d9"></div>
<div style="left:2138.5px;top:319px;width:1px;height:20px;background:#d9d9d9"></div>
<div style="left:2151px;top:319px;width:1px;height:20px;background:#d9d9d9"></div>
<div style="left:2251px;top:319px;width:1px;height:20px;background:#d9d9d9"></div>
<div style="left:2264px;top:319px;width:1px;height:20px;background:#d9d9d9"></div>
<div style="left:2314px;top:319px;width:1px;height:20px;background:#d9d9d9"></div>
<div style="left:2327px;top:319px;width:1px;height:20px;background:#d9d9d9"></div>
<div style="left:2340px;top:319px;width:1px;height:20px;background:#d9d9d9"></div>
<div style="left:2400px;top:319px;width:1px;height:20px;background:#d9d9d9"></div>
<div style="left:23.0px;width:30px;text-align:center;top:320.5px;height:16px;line-height:16px;font-size:12.5px;font-weight:bold;color:#fff;white-space:nowrap;">1</div>
<div style="left:36.0px;width:30px;text-align:center;top:320.5px;height:16px;line-height:16px;font-size:12.5px;font-weight:bold;color:#fff;white-space:nowrap;">2</div>
<div style="left:49.0px;width:30px;text-align:center;top:320.5px;height:16px;line-height:16px;font-size:12.5px;font-weight:bold;color:#fff;white-space:nowrap;">3</div>
<div style="left:62.0px;width:30px;text-align:center;top:320.5px;height:16px;line-height:16px;font-size:12.5px;font-weight:bold;color:#fff;white-space:nowrap;">4</div>
<div style="left:75.0px;width:30px;text-align:center;top:320.5px;height:16px;line-height:16px;font-size:12.5px;font-weight:bold;color:#fff;white-space:nowrap;">5</div>
<div style="left:88.0px;width:30px;text-align:center;top:320.5px;height:16px;line-height:16px;font-size:12.5px;font-weight:bold;color:#fff;white-space:nowrap;">6</div>
<div style="left:101.0px;width:30px;text-align:center;top:320.5px;height:16px;line-height:16px;font-size:12.5px;font-weight:bold;color:#fff;white-space:nowrap;">*</div>
<div style="left:47.5px;width:200px;text-align:center;top:320.5px;height:16px;line-height:16px;font-size:12px;font-weight:bold;color:#fff;white-space:nowrap;">Edit</div>
<div style="left:170.0px;width:30px;text-align:center;top:320.5px;height:16px;line-height:16px;font-size:12.5px;font-weight:bold;color:#fff;white-space:nowrap;">O</div>
<div style="left:113.0px;width:200px;text-align:center;top:320.5px;height:16px;line-height:16px;font-size:12px;font-weight:bold;color:#fff;white-space:nowrap;">Incl.</div>
<div style="left:146.5px;width:200px;text-align:center;top:320.5px;height:16px;line-height:16px;font-size:12px;font-weight:bold;color:#fff;white-space:nowrap;">Type</div>
<div style="left:316.5px;width:200px;text-align:center;top:320.5px;height:16px;line-height:16px;font-size:12px;font-weight:bold;color:#fff;white-space:nowrap;">Name</div>
<div style="left:617.0px;width:200px;text-align:center;top:321.0px;height:15px;line-height:15px;font-size:11.3px;font-weight:bold;color:#fff;white-space:nowrap;">Identification</div>
<div style="left:793.0px;width:200px;text-align:center;top:320.5px;height:16px;line-height:16px;font-size:12px;font-weight:bold;color:#fff;white-space:nowrap;">Alt.</div>
<div style="left:911.5px;width:30px;text-align:center;top:320.5px;height:16px;line-height:16px;font-size:12.5px;font-weight:bold;color:#fff;white-space:nowrap;">+</div>
<div style="left:849.5px;width:200px;text-align:center;top:320.5px;height:16px;line-height:16px;font-size:12px;font-weight:bold;color:#fff;white-space:nowrap;">C/P</div>
<div style="left:1438.0px;width:200px;text-align:center;top:321.5px;height:14px;line-height:14px;font-size:11.1px;font-weight:bold;color:#fff;white-space:nowrap;">Optional settings</div>
<div style="left:2101.5px;width:200px;text-align:center;top:321.0px;height:15px;line-height:15px;font-size:11.8px;font-weight:bold;color:#fff;white-space:nowrap;">Supplier</div>
<div style="left:2112.5px;width:12px;text-align:center;top:320.5px;height:16px;line-height:16px;font-size:12.5px;font-weight:bold;color:#3aa6ee;white-space:nowrap;">+</div>
<div style="left:2126.0px;width:12px;text-align:center;top:320.5px;height:16px;line-height:16px;font-size:12.5px;font-weight:bold;color:#f0883a;white-space:nowrap;">+</div>
<div style="left:2138.5px;width:12px;text-align:center;top:320.5px;height:16px;line-height:16px;font-size:12.5px;font-weight:bold;color:#c9a13e;white-space:nowrap;">+</div>
<div style="left:2251.5px;width:12px;text-align:center;top:320.5px;height:16px;line-height:16px;font-size:12.5px;font-weight:bold;color:#ec4b8b;white-space:nowrap;">+</div>
<div style="left:2314.5px;width:12px;text-align:center;top:320.5px;height:16px;line-height:16px;font-size:12.5px;font-weight:bold;color:#3aa6ee;white-space:nowrap;">+</div>
<div style="left:2327.5px;width:12px;text-align:center;top:320.5px;height:16px;line-height:16px;font-size:12.5px;font-weight:bold;color:#f0883a;white-space:nowrap;">+</div>
<div style="left:2330.0px;width:80px;text-align:center;top:320.5px;height:16px;line-height:16px;font-size:12px;font-weight:bold;color:#f0883a;white-space:nowrap;">% Diff.</div>
<div style="left:2265px;top:319px;width:49px;height:20px;overflow:hidden"><div style="position:absolute;right:1px;top:0;line-height:20px;font-size:12px;font-weight:bold;color:#fff;white-space:nowrap">Fin. M Qt</div></div>
<div style="left:2401px;top:319px;width:47px;height:20px;overflow:hidden"><div style="position:absolute;left:-5px;top:0;line-height:20px;font-size:12px;font-weight:bold;color:#f0883a;white-space:nowrap">Fin. labor</div></div>
<div style="left:31px;top:318px;width:1px;height:559px;background:#6d6d6d"></div>
<div style="left:32px;top:860px;width:2416px;height:16px;background:#f0f0f0"></div>
<div style="left:49px;top:861px;width:2167px;height:14px;background:#cdcdcd"></div>
<div style="left:33.0px;width:14px;text-align:center;top:857.5px;height:21px;line-height:21px;font-size:16px;font-weight:normal;color:#555;white-space:nowrap;">&lsaquo;</div>
<div style="left:31px;top:876px;width:2417px;height:1px;background:#6d6d6d"></div>
<div style="left:34px;top:884px;width:2414px;height:17px;background:#fff;border:1.6px solid #3a3a3a;border-right:none"></div>
<div style="left:36.5px;top:885.0px;height:15px;line-height:15px;font-size:11.3px;font-weight:normal;color:#222;white-space:nowrap;">Settings</div>
<div style="left:42px;top:909px;width:2406px;height:42px;border:1px solid #a9a9a9;border-right:none"></div>
<div style="left:50px;top:903px;width:93px;height:12px;background:#fff"></div>
<div style="left:52.5px;top:902.5px;height:15px;line-height:15px;font-size:11.3px;font-weight:normal;color:#444;white-space:nowrap;">Calculation model</div>
<div style="left:51px;top:923.5px;width:348px;height:19px;background:#fff;border:1px solid #a3a3a3"></div>
<div style="left:381px;top:924.5px;width:17px;height:17px;background:#f4f4f4;border-left:1px solid #d0d0d0"></div>
<svg style="position:absolute;left:386px;top:931px;" width="7" height="4" viewBox="0 0 7 4"><path d="M0 0 H7 L3.5 4 Z" fill="#777"/></svg>
<div style="left:54px;top:925.5px;height:15px;line-height:15px;font-size:11.3px;font-weight:normal;color:#222;white-space:nowrap;">Find for model</div>
<svg style="position:absolute;left:408px;top:928px;" width="18" height="17" viewBox="0 0 18 17"><path d="M0.5 3.5 Q0.5 0.5 9 0.5 Q17.5 0.5 17.5 3.5 L11 11 V16.5 H7 V11 Z" fill="#0f202c"/><ellipse cx="9" cy="3.3" rx="6.8" ry="1.8" fill="#fff"/></svg>
<div style="left:404px;top:946px;width:25px;height:1.3px;background:#222"></div>
<div style="left:428px;top:922px;width:1.3px;height:25px;background:#222"></div>
<svg style="position:absolute;left:435px;top:925px;" width="26" height="20" viewBox="0 0 26 20"><g stroke="#0f202c" stroke-width="3" fill="none"><path d="M0 10 H22"/><path d="M14 1.5 L22.5 10 L14 18.5"/></g></svg>
<div style="left:479px;top:927.5px;height:15px;line-height:15px;font-size:11.3px;font-weight:normal;color:#333;white-space:nowrap;">Item :</div>
<div style="left:515px;top:925.5px;width:324px;height:18.5px;background:#f0f0f0;border:1px solid #c9c9c9"></div>
<div style="left:517px;top:927.0px;height:15px;line-height:15px;font-size:11.3px;font-weight:normal;color:#222;white-space:nowrap;">Int. Partitions -&nbsp; - Type?|Ht?</div>
<div style="left:847px;top:927.5px;height:15px;line-height:15px;font-size:11.3px;font-weight:normal;color:#555;white-space:nowrap;">Associated model</div>
<div style="left:935px;top:925.5px;width:303px;height:18.5px;background:#f0f0f0;border:1px solid #c9c9c9"></div>
<div style="left:1240px;top:923px;width:24px;height:22px;background:#fff;border-right:1.5px solid #333;border-bottom:1.5px solid #333"></div>
<div style="left:1242.0px;width:20px;text-align:center;top:927.0px;height:14px;line-height:14px;font-size:11px;font-weight:normal;color:#444;white-space:nowrap;">X</div>
<div style="left:627px;top:955px;width:2.5px;height:303px;background:#000"></div>
<div style="left:2030px;top:955px;width:3px;height:303px;background:#000"></div>
<div style="left:44px;top:965px;width:537px;height:300px;border:1px solid #b5b5b5;border-bottom:none"></div>
<div style="left:49px;top:958px;width:60px;height:12px;background:#fff"></div>
<div style="left:51px;top:957.5px;height:15px;line-height:15px;font-size:11.3px;font-weight:normal;color:#444;white-space:nowrap;">Settings list</div>
<div style="left:66px;top:978.5px;height:15px;line-height:15px;font-size:11.3px;font-weight:normal;color:#222;white-space:nowrap;">System</div>
<div style="left:112px;top:976px;width:40px;height:20px;background:#000"></div>
<div style="left:119px;top:978.5px;height:15px;line-height:15px;font-size:11.3px;font-weight:normal;color:#fff;white-space:nowrap;">Prive</div>
<div style="left:54px;top:996px;width:521px;height:35px;background:#fff;border-top:2px solid #777;border-left:2px solid #777;border-bottom:1px solid #e2e2e2;border-right:1px solid #e2e2e2"></div>
<svg style="position:absolute;left:63px;top:1006px;" width="17" height="17" viewBox="0 0 17 17"><path d="M6.3 0 H10.7 V6.3 H17 V10.7 H10.7 V17 H6.3 V10.7 H0 V6.3 H6.3 Z" fill="#0f202c"/></svg>
<svg style="position:absolute;left:93px;top:1003px;" width="20" height="20" viewBox="0 0 20 20"><g fill="#0f202c"><rect x="7" y="0" width="6" height="2.5" rx="1"/><rect x="0" y="2.5" width="20" height="3" rx="0.5"/><path d="M1.5 7 H18.5 V18 Q18.5 20 16.5 20 H3.5 Q1.5 20 1.5 18 Z"/></g><g fill="#fff"><rect x="4.3" y="9" width="1.5" height="9"/><rect x="7.8" y="9" width="1.5" height="9"/><rect x="11.3" y="9" width="1.5" height="9"/><rect x="14.8" y="9" width="1.5" height="9"/></g></svg>
<svg style="position:absolute;left:128.5px;top:1003.5px;" width="21" height="21" viewBox="0 0 21 21"><path d="M0.5 4 Q0.5 0.5 10.5 0.5 Q20.5 0.5 20.5 4 L13 13 V20 Q13 21 12 21 H9 Q8 21 8 20 V13 Z" fill="#0f202c"/><ellipse cx="10.5" cy="3.8" rx="8.2" ry="2.2" fill="#fff"/><path d="M8.3 6.5 L12.7 10.5 M12.7 6.5 L8.3 10.5" stroke="#fff" stroke-width="1.3"/></svg>
<svg style="position:absolute;left:160.5px;top:1010px;" width="21" height="9" viewBox="0 0 21 9"><g fill="#0f202c"><rect x="6" y="0" width="15" height="3"/><rect x="0" y="5.5" width="14.5" height="3"/></g></svg>
<svg style="position:absolute;left:194px;top:1007.5px;" width="17" height="14" viewBox="0 0 17 14"><g fill="#0f202c"><rect x="0" y="0" width="1.5" height="14"/><rect x="0" y="12.5" width="17" height="1.5"/><rect x="3.5" y="7.5" width="1.5" height="4"/><rect x="6.8" y="3.5" width="1.5" height="8"/><rect x="9.8" y="6.5" width="1.5" height="5"/><rect x="13" y="0" width="1.5" height="11.5"/></g></svg>
<svg style="position:absolute;left:224.5px;top:1005px;" width="21" height="18" viewBox="0 0 21 18"><g fill="#0f202c"><rect x="5" y="0" width="11" height="2"/><path d="M0 5 Q0 3.8 1.2 3.8 H19.8 Q21 3.8 21 5 V12.5 Q21 13 20.5 13 H16.5 V10 H4.5 V13 H0.5 Q0 13 0 12.5 Z"/><path d="M4.5 9 H16.5 V18 H4.5 Z"/></g><rect x="6" y="10.5" width="9" height="6" fill="#fff"/><circle cx="2.6" cy="6.3" r="1.1" fill="#fff"/></svg>
<svg style="position:absolute;left:258.5px;top:1005.5px;" width="17" height="17" viewBox="0 0 17 17"><g fill="none" stroke="#0f202c" stroke-width="1.6"><path d="M1.8 8 A6.8 6.8 0 0 1 14 4.2"/><path d="M15.2 9 A6.8 6.8 0 0 1 3 12.8"/></g><g fill="#0f202c"><path d="M11 4.5 L16 0.8 V6.5 Z"/><path d="M6 12.5 L1 16.2 V10.5 Z"/></g></svg>
<svg style="position:absolute;left:289px;top:1003.5px;" width="21" height="21" viewBox="0 0 21 21"><path d="M0.5 20.5 L2 14.5 L14.5 2 Q16.2 0.3 18 2 L19 3 Q20.7 4.8 19 6.5 L6.5 19 Z" fill="#0f202c"/><path d="M4 16.5 L14.5 6" stroke="#fff" stroke-width="1.1"/></svg>
<svg style="position:absolute;left:322px;top:1004px;" width="18" height="19" viewBox="0 0 18 19"><path d="M2 8 Q3 1.5 9 1.5 Q13.5 1.5 15 5" fill="none" stroke="#9a9a9a" stroke-width="1.6"/><path d="M12.5 4.5 L16.5 2 L16.5 7.5 Z" fill="#9a9a9a"/><text x="0" y="15.5" font-family="Liberation Serif" font-size="8.5" fill="#9a9a9a">a</text><text x="10" y="18.5" font-family="Liberation Serif" font-size="8.5" fill="#9a9a9a">b</text></svg>
<svg style="position:absolute;left:357px;top:1003.5px;" width="16" height="20" viewBox="0 0 16 20"><g fill="#0f202c"><path d="M3.5 0 H12.5 V9.5 H16 L8 16.5 L0 9.5 H3.5 Z"/><rect x="0.5" y="17.8" width="15" height="2"/></g><path d="M7.1 1.5 H8.9 V4 H11.3 V5.8 H8.9 V8.3 H7.1 V5.8 H4.7 V4 H7.1 Z" fill="#fff"/></svg>
<div style="left:54px;top:1032px;width:504px;height:21px;background:#212934"></div>
<div style="left:73.5px;top:1033px;width:1px;height:19px;background:#d0d0d0"></div>
<div style="left:164.5px;top:1033px;width:1px;height:19px;background:#d0d0d0"></div>
<div style="left:424.5px;top:1033px;width:1px;height:19px;background:#d0d0d0"></div>
<div style="left:474.5px;top:1033px;width:1px;height:19px;background:#d0d0d0"></div>
<div style="left:77.0px;width:80px;text-align:center;top:1035.0px;height:15px;line-height:15px;font-size:11.8px;font-weight:bold;color:#fff;white-space:nowrap;">Code</div>
<div style="left:194.0px;width:200px;text-align:center;top:1035.0px;height:15px;line-height:15px;font-size:11.8px;font-weight:bold;color:#fff;white-space:nowrap;">Default Name</div>
<div style="left:425px;top:1033px;width:49px;height:19px;overflow:hidden"><div style="position:absolute;left:-4px;top:0;line-height:19px;font-size:11.8px;font-weight:bold;color:#fff;white-space:nowrap">Default unit</div></div>
<div style="left:485.0px;width:80px;text-align:center;top:1035.0px;height:15px;line-height:15px;font-size:11.8px;font-weight:bold;color:#fff;white-space:nowrap;text-decoration:underline">Favourites</div>
<div style="left:558px;top:1032px;width:17px;height:226px;background:#f0f0f0;border-left:1px solid #e0e0e0"></div>
<svg style="position:absolute;left:562px;top:1038px;" width="9" height="6" viewBox="0 0 9 6"><path d="M0.5 5.5 L4.5 1 L8.5 5.5" stroke="#555" stroke-width="1.3" fill="none"/></svg>
<div style="left:559px;top:1052px;width:16px;height:18px;background:#cdcdcd"></div>
<div style="left:54px;top:1053px;width:20px;height:205px;background:#f0f0f0"></div>
<div style="left:74px;top:1053px;width:484px;height:20px;background:#dff3f1"></div>
<div style="left:518.5px;top:1056.5px;width:12px;height:12px;background:#fff;border:1px solid #777"></div>
<div style="left:520.5px;top:1058.5px;width:8px;height:8px;background:#1e88c8;border:1px solid #0d5a8a"></div>
<div style="left:74px;top:1073px;width:484px;height:19px;background:#0078d4"></div>
<div style="left:54px;top:1092px;width:504px;height:1px;background:#ececec"></div>
<div style="left:54px;top:1072px;width:20px;height:1px;background:#a0a0a0"></div>
<div style="left:164.5px;top:1073px;width:1px;height:19px;background:#3a8fdf"></div>
<div style="left:424.5px;top:1073px;width:1px;height:19px;background:#3a8fdf"></div>
<div style="left:474.5px;top:1073px;width:1px;height:19px;background:#3a8fdf"></div>
<div style="left:74px;top:1073px;width:90px;height:19px;overflow:hidden"><div style="position:absolute;left:0;top:0;line-height:19px;font-size:11.3px;color:#fff;white-space:nowrap">BeamLen</div></div>
<div style="left:168px;top:1075.0px;height:15px;line-height:15px;font-size:11.3px;font-weight:normal;color:#fff;white-space:nowrap;">Beam Length</div>
<div style="left:427.5px;top:1075.0px;height:15px;line-height:15px;font-size:11.3px;font-weight:normal;color:#fff;white-space:nowrap;">ft</div>
<div style="left:518px;top:1076px;width:13px;height:13px;background:linear-gradient(135deg,#dedede,#fbfbfb 70%);border:1px solid #8a8a8a"></div>
<svg style="position:absolute;left:519px;top:1077px;" width="11" height="11" viewBox="0 0 11 11"><path d="M2.5 5.5 L4.5 8.5 L8.8 1.8" stroke="#2c3e8c" stroke-width="1.4" fill="none"/></svg>
<div style="left:54px;top:1112px;width:504px;height:1px;background:#ececec"></div>
<div style="left:54px;top:1092px;width:20px;height:1px;background:#a0a0a0"></div>
<div style="left:164.5px;top:1093px;width:1px;height:19px;background:#ececec"></div>
<div style="left:424.5px;top:1093px;width:1px;height:19px;background:#ececec"></div>
<div style="left:474.5px;top:1093px;width:1px;height:19px;background:#ececec"></div>
<div style="left:74px;top:1093px;width:90px;height:19px;overflow:hidden"><div style="position:absolute;left:0;top:0;line-height:19px;font-size:11.3px;color:#111;white-space:nowrap">BeamWid</div></div>
<div style="left:168px;top:1095.0px;height:15px;line-height:15px;font-size:11.3px;font-weight:normal;color:#111;white-space:nowrap;">Beam Width</div>
<div style="left:427.5px;top:1095.0px;height:15px;line-height:15px;font-size:11.3px;font-weight:normal;color:#111;white-space:nowrap;">in</div>
<div style="left:518px;top:1096px;width:13px;height:13px;background:linear-gradient(135deg,#dedede,#fbfbfb 70%);border:1px solid #8a8a8a"></div>
<div style="left:54px;top:1132px;width:504px;height:1px;background:#ececec"></div>
<div style="left:54px;top:1112px;width:20px;height:1px;background:#a0a0a0"></div>
<div style="left:164.5px;top:1113px;width:1px;height:19px;background:#ececec"></div>
<div style="left:424.5px;top:1113px;width:1px;height:19px;background:#ececec"></div>
<div style="left:474.5px;top:1113px;width:1px;height:19px;background:#ececec"></div>
<div style="left:74px;top:1113px;width:90px;height:19px;overflow:hidden"><div style="position:absolute;left:0;top:0;line-height:19px;font-size:11.3px;color:#111;white-space:nowrap">BeamDep</div></div>
<div style="left:168px;top:1115.0px;height:15px;line-height:15px;font-size:11.3px;font-weight:normal;color:#111;white-space:nowrap;">Beam Depth</div>
<div style="left:427.5px;top:1115.0px;height:15px;line-height:15px;font-size:11.3px;font-weight:normal;color:#111;white-space:nowrap;">in</div>
<div style="left:518px;top:1116px;width:13px;height:13px;background:linear-gradient(135deg,#dedede,#fbfbfb 70%);border:1px solid #8a8a8a"></div>
<svg style="position:absolute;left:519px;top:1117px;" width="11" height="11" viewBox="0 0 11 11"><path d="M2.5 5.5 L4.5 8.5 L8.8 1.8" stroke="#2c3e8c" stroke-width="1.4" fill="none"/></svg>
<div style="left:54px;top:1152px;width:504px;height:1px;background:#ececec"></div>
<div style="left:54px;top:1132px;width:20px;height:1px;background:#a0a0a0"></div>
<div style="left:164.5px;top:1133px;width:1px;height:19px;background:#ececec"></div>
<div style="left:424.5px;top:1133px;width:1px;height:19px;background:#ececec"></div>
<div style="left:474.5px;top:1133px;width:1px;height:19px;background:#ececec"></div>
<div style="left:74px;top:1133px;width:90px;height:19px;overflow:hidden"><div style="position:absolute;left:0;top:0;line-height:19px;font-size:11.3px;color:#111;white-space:nowrap">WallExtFinHght</div></div>
<div style="left:168px;top:1135.0px;height:15px;line-height:15px;font-size:11.3px;font-weight:normal;color:#111;white-space:nowrap;">Wall Exterior Finish Height</div>
<div style="left:427.5px;top:1135.0px;height:15px;line-height:15px;font-size:11.3px;font-weight:normal;color:#111;white-space:nowrap;">ft</div>
<div style="left:518px;top:1136px;width:13px;height:13px;background:linear-gradient(135deg,#dedede,#fbfbfb 70%);border:1px solid #8a8a8a"></div>
<svg style="position:absolute;left:519px;top:1137px;" width="11" height="11" viewBox="0 0 11 11"><path d="M2.5 5.5 L4.5 8.5 L8.8 1.8" stroke="#2c3e8c" stroke-width="1.4" fill="none"/></svg>
<div style="left:54px;top:1172px;width:504px;height:1px;background:#ececec"></div>
<div style="left:54px;top:1152px;width:20px;height:1px;background:#a0a0a0"></div>
<div style="left:164.5px;top:1153px;width:1px;height:19px;background:#ececec"></div>
<div style="left:424.5px;top:1153px;width:1px;height:19px;background:#ececec"></div>
<div style="left:474.5px;top:1153px;width:1px;height:19px;background:#ececec"></div>
<div style="left:74px;top:1153px;width:90px;height:19px;overflow:hidden"><div style="position:absolute;left:0;top:0;line-height:19px;font-size:11.3px;color:#111;white-space:nowrap">WallIntFinHght</div></div>
<div style="left:168px;top:1155.0px;height:15px;line-height:15px;font-size:11.3px;font-weight:normal;color:#111;white-space:nowrap;">Wall Interior Finish Height</div>
<div style="left:427.5px;top:1155.0px;height:15px;line-height:15px;font-size:11.3px;font-weight:normal;color:#111;white-space:nowrap;">ft</div>
<div style="left:518px;top:1156px;width:13px;height:13px;background:linear-gradient(135deg,#dedede,#fbfbfb 70%);border:1px solid #8a8a8a"></div>
<svg style="position:absolute;left:519px;top:1157px;" width="11" height="11" viewBox="0 0 11 11"><path d="M2.5 5.5 L4.5 8.5 L8.8 1.8" stroke="#2c3e8c" stroke-width="1.4" fill="none"/></svg>
<div style="left:54px;top:1192px;width:504px;height:1px;background:#ececec"></div>
<div style="left:54px;top:1172px;width:20px;height:1px;background:#a0a0a0"></div>
<div style="left:164.5px;top:1173px;width:1px;height:19px;background:#ececec"></div>
<div style="left:424.5px;top:1173px;width:1px;height:19px;background:#ececec"></div>
<div style="left:474.5px;top:1173px;width:1px;height:19px;background:#ececec"></div>
<div style="left:74px;top:1173px;width:90px;height:19px;overflow:hidden"><div style="position:absolute;left:0;top:0;line-height:19px;font-size:11.3px;color:#111;white-space:nowrap">WallFrmLen</div></div>
<div style="left:168px;top:1175.0px;height:15px;line-height:15px;font-size:11.3px;font-weight:normal;color:#111;white-space:nowrap;">Wall Framing Length</div>
<div style="left:427.5px;top:1175.0px;height:15px;line-height:15px;font-size:11.3px;font-weight:normal;color:#111;white-space:nowrap;">ft</div>
<div style="left:518px;top:1176px;width:13px;height:13px;background:linear-gradient(135deg,#dedede,#fbfbfb 70%);border:1px solid #8a8a8a"></div>
<svg style="position:absolute;left:519px;top:1177px;" width="11" height="11" viewBox="0 0 11 11"><path d="M2.5 5.5 L4.5 8.5 L8.8 1.8" stroke="#2c3e8c" stroke-width="1.4" fill="none"/></svg>
<div style="left:54px;top:1212px;width:504px;height:1px;background:#ececec"></div>
<div style="left:54px;top:1192px;width:20px;height:1px;background:#a0a0a0"></div>
<div style="left:164.5px;top:1193px;width:1px;height:19px;background:#ececec"></div>
<div style="left:424.5px;top:1193px;width:1px;height:19px;background:#ececec"></div>
<div style="left:474.5px;top:1193px;width:1px;height:19px;background:#ececec"></div>
<div style="left:74px;top:1193px;width:90px;height:19px;overflow:hidden"><div style="position:absolute;left:0;top:0;line-height:19px;font-size:11.3px;color:#111;white-space:nowrap">WallExtInsNetSurf</div></div>
<div style="left:168px;top:1195.0px;height:15px;line-height:15px;font-size:11.3px;font-weight:normal;color:#111;white-space:nowrap;">Wall Exterior Insulation Net Surface</div>
<div style="left:427.5px;top:1195.0px;height:15px;line-height:15px;font-size:11.3px;font-weight:normal;color:#111;white-space:nowrap;">ft2</div>
<div style="left:518px;top:1196px;width:13px;height:13px;background:linear-gradient(135deg,#dedede,#fbfbfb 70%);border:1px solid #8a8a8a"></div>
<svg style="position:absolute;left:519px;top:1197px;" width="11" height="11" viewBox="0 0 11 11"><path d="M2.5 5.5 L4.5 8.5 L8.8 1.8" stroke="#2c3e8c" stroke-width="1.4" fill="none"/></svg>
<div style="left:54px;top:1232px;width:504px;height:1px;background:#ececec"></div>
<div style="left:54px;top:1212px;width:20px;height:1px;background:#a0a0a0"></div>
<div style="left:164.5px;top:1213px;width:1px;height:19px;background:#ececec"></div>
<div style="left:424.5px;top:1213px;width:1px;height:19px;background:#ececec"></div>
<div style="left:474.5px;top:1213px;width:1px;height:19px;background:#ececec"></div>
<div style="left:74px;top:1213px;width:90px;height:19px;overflow:hidden"><div style="position:absolute;left:0;top:0;line-height:19px;font-size:11.3px;color:#111;white-space:nowrap">WallExtFinNetSurf</div></div>
<div style="left:168px;top:1215.0px;height:15px;line-height:15px;font-size:11.3px;font-weight:normal;color:#111;white-space:nowrap;">Wall Exterior Finish Net Surface</div>
<div style="left:427.5px;top:1215.0px;height:15px;line-height:15px;font-size:11.3px;font-weight:normal;color:#111;white-space:nowrap;">ft2</div>
<div style="left:518px;top:1216px;width:13px;height:13px;background:linear-gradient(135deg,#dedede,#fbfbfb 70%);border:1px solid #8a8a8a"></div>
<svg style="position:absolute;left:519px;top:1217px;" width="11" height="11" viewBox="0 0 11 11"><path d="M2.5 5.5 L4.5 8.5 L8.8 1.8" stroke="#2c3e8c" stroke-width="1.4" fill="none"/></svg>
<div style="left:54px;top:1252px;width:504px;height:1px;background:#ececec"></div>
<div style="left:54px;top:1232px;width:20px;height:1px;background:#a0a0a0"></div>
<div style="left:164.5px;top:1233px;width:1px;height:19px;background:#ececec"></div>
<div style="left:424.5px;top:1233px;width:1px;height:19px;background:#ececec"></div>
<div style="left:474.5px;top:1233px;width:1px;height:19px;background:#ececec"></div>
<div style="left:74px;top:1233px;width:90px;height:19px;overflow:hidden"><div style="position:absolute;left:0;top:0;line-height:19px;font-size:11.3px;color:#111;white-space:nowrap">%Prop</div></div>
<div style="left:168px;top:1235.0px;height:15px;line-height:15px;font-size:11.3px;font-weight:normal;color:#111;white-space:nowrap;">Percentage of Proportions</div>
<div style="left:427.5px;top:1235.0px;height:15px;line-height:15px;font-size:11.3px;font-weight:normal;color:#111;white-space:nowrap;">ft2</div>
<div style="left:518px;top:1236px;width:13px;height:13px;background:linear-gradient(135deg,#dedede,#fbfbfb 70%);border:1px solid #8a8a8a"></div>
<svg style="position:absolute;left:519px;top:1237px;" width="11" height="11" viewBox="0 0 11 11"><path d="M2.5 5.5 L4.5 8.5 L8.8 1.8" stroke="#2c3e8c" stroke-width="1.4" fill="none"/></svg>
<div style="left:54px;top:1272px;width:504px;height:1px;background:#ececec"></div>
<div style="left:54px;top:1252px;width:20px;height:1px;background:#a0a0a0"></div>
<div style="left:164.5px;top:1253px;width:1px;height:19px;background:#ececec"></div>
<div style="left:424.5px;top:1253px;width:1px;height:19px;background:#ececec"></div>
<div style="left:474.5px;top:1253px;width:1px;height:19px;background:#ececec"></div>
<div style="left:74px;top:1253px;width:90px;height:19px;overflow:hidden"><div style="position:absolute;left:0;top:0;line-height:19px;font-size:11.3px;color:#111;white-space:nowrap">WallIntInsNetSurf</div></div>
<div style="left:168px;top:1255.0px;height:15px;line-height:15px;font-size:11.3px;font-weight:normal;color:#111;white-space:nowrap;">Wall Interior Insulation Net Surface</div>
<div style="left:427.5px;top:1255.0px;height:15px;line-height:15px;font-size:11.3px;font-weight:normal;color:#111;white-space:nowrap;">ft2</div>
<div style="left:518px;top:1256px;width:13px;height:13px;background:linear-gradient(135deg,#dedede,#fbfbfb 70%);border:1px solid #8a8a8a"></div>
<svg style="position:absolute;left:519px;top:1257px;" width="11" height="11" viewBox="0 0 11 11"><path d="M2.5 5.5 L4.5 8.5 L8.8 1.8" stroke="#2c3e8c" stroke-width="1.4" fill="none"/></svg>
<div style="left:73.5px;top:1053px;width:1px;height:205px;background:#a0a0a0"></div>
<div style="left:54px;top:1032px;width:1px;height:226px;background:#777"></div>
<svg style="position:absolute;left:592px;top:1034px;" width="27" height="21" viewBox="0 0 27 21"><g stroke="#0f202c" stroke-width="3" fill="none"><path d="M0 10.5 H24"/><path d="M15 2 L24 10.5 L15 19"/></g></svg>
<svg style="position:absolute;left:592px;top:1074px;" width="27" height="21" viewBox="0 0 27 21"><g stroke="#0f202c" stroke-width="3" fill="none"><path d="M27 10.5 H3"/><path d="M12 2 L3 10.5 L12 19"/></g></svg>
<div style="left:641px;top:964px;width:1369px;height:300px;border:1px solid #b5b5b5;border-bottom:none"></div>
<div style="left:646px;top:958px;width:68px;height:12px;background:#fff"></div>
<div style="left:648px;top:957.5px;height:15px;line-height:15px;font-size:11.3px;font-weight:normal;color:#444;white-space:nowrap;">Item settings</div>
<div style="left:650px;top:980px;width:1351px;height:34px;background:#fff;border-top:2px solid #777;border-left:2px solid #777;border-bottom:1px solid #e2e2e2;border-right:1px solid #e2e2e2"></div>
<svg style="position:absolute;left:662px;top:989px;" width="17" height="17" viewBox="0 0 17 17"><path d="M6.3 0 H10.7 V6.3 H17 V10.7 H10.7 V17 H6.3 V10.7 H0 V6.3 H6.3 Z" fill="#0f202c"/></svg>
<svg style="position:absolute;left:697.5px;top:987.5px;" width="20" height="20" viewBox="0 0 20 20"><g fill="#0f202c"><rect x="7" y="0" width="6" height="2.5" rx="1"/><rect x="0" y="2.5" width="20" height="3" rx="0.5"/><path d="M1.5 7 H18.5 V18 Q18.5 20 16.5 20 H3.5 Q1.5 20 1.5 18 Z"/></g><g fill="#fff"><rect x="4.3" y="9" width="1.5" height="9"/><rect x="7.8" y="9" width="1.5" height="9"/><rect x="11.3" y="9" width="1.5" height="9"/><rect x="14.8" y="9" width="1.5" height="9"/></g></svg>
<svg style="position:absolute;left:736.5px;top:987.5px;" width="16" height="20" viewBox="0 0 16 20"><g stroke="#0f202c" stroke-width="1.8" fill="none"><path d="M0.5 1 H15.5"/><path d="M8 19.5 V4"/><path d="M1.5 10 L8 3.5 L14.5 10"/></g></svg>
<svg style="position:absolute;left:768px;top:988px;" width="16" height="19" viewBox="0 0 16 19"><g stroke="#0f202c" stroke-width="1.8" fill="none"><path d="M8 19 V2"/><path d="M1.5 8.5 L8 2 L14.5 8.5"/></g></svg>
<svg style="position:absolute;left:801px;top:988px;" width="16" height="19" viewBox="0 0 16 19"><g stroke="#0f202c" stroke-width="1.8" fill="none"><path d="M8 0 V17"/><path d="M1.5 10.5 L8 17 L14.5 10.5"/></g></svg>
<svg style="position:absolute;left:833px;top:987.5px;" width="16" height="20" viewBox="0 0 16 20"><g stroke="#0f202c" stroke-width="1.8" fill="none"><path d="M8 0 V15.5"/><path d="M1.5 9 L8 15.5 L14.5 9"/><path d="M0.5 19 H15.5"/></g></svg>
<svg style="position:absolute;left:866px;top:987px;" width="21" height="21" viewBox="0 0 21 21"><path d="M0.5 4 Q0.5 0.5 10.5 0.5 Q20.5 0.5 20.5 4 L13 13 V20 Q13 21 12 21 H9 Q8 21 8 20 V13 Z" fill="#0f202c"/><ellipse cx="10.5" cy="3.8" rx="8.2" ry="2.2" fill="#fff"/><path d="M8.3 6.5 L12.7 10.5 M12.7 6.5 L8.3 10.5" stroke="#fff" stroke-width="1.3"/></svg>
<svg style="position:absolute;left:897px;top:993px;" width="21" height="9" viewBox="0 0 21 9"><g fill="#0f202c"><rect x="6" y="0" width="15" height="3"/><rect x="0" y="5.5" width="14.5" height="3"/></g></svg>
<svg style="position:absolute;left:932px;top:990px;" width="17" height="14" viewBox="0 0 17 14"><g fill="#0f202c"><rect x="0" y="0" width="1.5" height="14"/><rect x="0" y="12.5" width="17" height="1.5"/><rect x="3.5" y="7.5" width="1.5" height="4"/><rect x="6.8" y="3.5" width="1.5" height="8"/><rect x="9.8" y="6.5" width="1.5" height="5"/><rect x="13" y="0" width="1.5" height="11.5"/></g></svg>
<div style="left:964.5px;top:985px;width:20px;height:22px;font-family:Liberation Serif;font-style:italic;font-size:17px;line-height:22px;color:#9a9a9a">fx</div>
<svg style="position:absolute;left:994.5px;top:991px;" width="21" height="13" viewBox="0 0 21 13"><g fill="#0f202c"><rect x="0" y="0" width="21" height="4.5" rx="1"/><rect x="0" y="8.5" width="21" height="4.5" rx="1"/></g></svg>
<svg style="position:absolute;left:1026.5px;top:988px;" width="21" height="20" viewBox="0 0 21 20"><g fill="none" stroke="#0f202c" stroke-width="1.5"><path d="M1 17 V1 H12 L17 6 V17"/><path d="M12 1 V6 H17"/></g><rect x="0" y="16" width="21" height="4" fill="#0f202c"/><g fill="#fff"><rect x="3" y="16" width="0.8" height="2"/><rect x="6" y="16" width="0.8" height="2"/><rect x="9" y="16" width="0.8" height="2"/><rect x="12" y="16" width="0.8" height="2"/><rect x="15" y="16" width="0.8" height="2"/><rect x="18" y="16" width="0.8" height="2"/></g></svg>
<svg style="position:absolute;left:1060px;top:988px;" width="18" height="18" viewBox="0 0 18 18"><path d="M0 0 H14 L18 4 V18 H0 Z" fill="#0f202c"/><rect x="3" y="1.8" width="10" height="5.5" fill="#fff"/><rect x="9" y="2.6" width="2.4" height="3.8" fill="#0f202c"/><rect x="2.5" y="10.5" width="13" height="6" fill="#fff"/></svg>
<svg style="position:absolute;left:1091px;top:991px" width="20" height="12" viewBox="0 0 42.7 22.4" preserveAspectRatio="none"><g fill="#fb820c"><path fill-rule="evenodd" d="M0 11.3 L12.7 0 L25.4 11.3 L12.7 22.4 Z M8.3 11.3 L12.7 15.5 L17.1 11.3 L12.7 7.1 Z"/>
<path fill-rule="evenodd" d="M17.3 11.3 L30 0 L42.7 11.3 L30 22.4 Z M25.6 11.3 L30 15.5 L34.4 11.3 L30 7.1 Z"/>
<path d="M12.67 0 L34.25 18.6 L30 22.3 L8.6 3.6 Z"/>
<g stroke="#fff" stroke-width="1.2" fill="none"><path d="M8.2 4 L12.4 7.6"/><path d="M16.9 11.6 L21.2 15.4"/><path d="M21.8 7.2 L26.1 10.9"/></g></g></svg>
<svg style="position:absolute;left:1124.5px;top:988px;" width="18" height="20" viewBox="0 0 18 20"><g fill="none" stroke="#0f202c" stroke-width="1.5"><path d="M1 16 V2 Q1 1 2 1 H9"/><path d="M4 19 V5 Q4 4 5 4 H12 L17 9 V18 Q17 19 16 19 H5 Q4 19 4 18"/><path d="M12 4 V9 H17"/></g></svg>
<svg style="position:absolute;left:1157px;top:988px;" width="17" height="19" viewBox="0 0 17 19"><g fill="none" stroke="#9a9a9a" stroke-width="1.3"><path d="M5 2.5 H1 V15.5 H5.5"/><path d="M11 2.5 H12.5 V6"/><path d="M4 4 V1.8 H6.5 Q6.5 0.6 8 0.6 Q9.5 0.6 9.5 1.8 H12 V4 Z"/><path d="M5.5 18.3 V8 H12.5 L15.8 11.3 V18.3 Z"/></g></svg>
<svg style="position:absolute;left:1187px;top:987px;" width="20" height="20" viewBox="0 0 20 20"><path d="M1 17.5 Q2 11 8 10 L11 13 Q9.5 19 1 17.5 Z" fill="#9a9a9a"/><path d="M9.5 8.5 L17 1 Q19 0.5 19 2.5 L12 10 Z" fill="#9a9a9a"/></svg>
<svg style="position:absolute;left:1219.5px;top:987px;" width="18" height="19" viewBox="0 0 18 19"><path d="M2 8 Q3 1.5 9 1.5 Q13.5 1.5 15 5" fill="none" stroke="#0f202c" stroke-width="1.6"/><path d="M12.5 4.5 L16.5 2 L16.5 7.5 Z" fill="#0f202c"/><text x="0" y="15.5" font-family="Liberation Serif" font-size="8.5" fill="#0f202c">a</text><text x="10" y="18.5" font-family="Liberation Serif" font-size="8.5" fill="#0f202c">b</text></svg>
<div style="left:650px;top:1015px;width:1351px;height:243px;background:#ababab;border-top:1px solid #888"></div>
<div style="left:650px;top:1016px;width:707px;height:242px;background:#fff"></div>
<div style="left:650px;top:1016px;width:707px;height:20px;background:#212934"></div>
<div style="left:670px;top:1016px;width:1px;height:20px;background:#d0d0d0"></div>
<div style="left:789px;top:1016px;width:1px;height:20px;background:#d0d0d0"></div>
<div style="left:1008.5px;top:1016px;width:1px;height:20px;background:#d0d0d0"></div>
<div style="left:1058px;top:1016px;width:1px;height:20px;background:#d0d0d0"></div>
<div style="left:1146.5px;top:1016px;width:1px;height:20px;background:#d0d0d0"></div>
<div style="left:1196px;top:1016px;width:1px;height:20px;background:#d0d0d0"></div>
<div style="left:1246px;top:1016px;width:1px;height:20px;background:#d0d0d0"></div>
<div style="left:649.5px;width:160px;text-align:center;top:1018.5px;height:15px;line-height:15px;font-size:11.8px;font-weight:bold;color:#fff;white-space:nowrap;">Code</div>
<div style="left:818.5px;width:160px;text-align:center;top:1018.5px;height:15px;line-height:15px;font-size:11.8px;font-weight:bold;color:#fff;white-space:nowrap;">Param. name / Options</div>
<div style="left:953.0px;width:160px;text-align:center;top:1018.5px;height:15px;line-height:15px;font-size:11.8px;font-weight:bold;color:#fff;white-space:nowrap;">Option</div>
<div style="left:1022.5px;width:160px;text-align:center;top:1018.5px;height:15px;line-height:15px;font-size:11.8px;font-weight:bold;color:#fff;white-space:nowrap;text-decoration:underline">Value</div>
<div style="left:1091.5px;width:160px;text-align:center;top:1018.5px;height:15px;line-height:15px;font-size:11.8px;font-weight:bold;color:#fff;white-space:nowrap;">Unit</div>
<div style="left:1196px;top:1016px;width:50px;height:20px;overflow:hidden"><div style="position:absolute;left:1px;top:0;line-height:20px;font-size:11.8px;font-weight:bold;color:#fff;white-space:nowrap;text-decoration:underline">Constant</div></div>
<div style="left:1221.5px;width:160px;text-align:center;top:1018.5px;height:15px;line-height:15px;font-size:11.8px;font-weight:bold;color:#fff;white-space:nowrap;">TakeOff</div>
<div style="left:650px;top:1036px;width:20px;height:222px;background:#f0f0f0"></div>
<div style="left:670px;top:1036px;width:687px;height:20px;background:#dff3f1"></div>
<div style="left:1215.5px;top:1040.5px;width:12px;height:12px;background:#fff;border:1px solid #777"></div>
<div style="left:1217.5px;top:1042.5px;width:8px;height:8px;background:#1e88c8;border:1px solid #0d5a8a"></div>
<div style="left:650px;top:1075px;width:707px;height:1px;background:#ececec"></div>
<div style="left:650px;top:1075px;width:20px;height:1px;background:#bdbdbd"></div>
<div style="left:789px;top:1056px;width:1px;height:20px;background:#ececec"></div>
<div style="left:1008.5px;top:1056px;width:1px;height:20px;background:#ececec"></div>
<div style="left:1058px;top:1056px;width:1px;height:20px;background:#ececec"></div>
<div style="left:1146.5px;top:1056px;width:1px;height:20px;background:#ececec"></div>
<div style="left:1196px;top:1056px;width:1px;height:20px;background:#ececec"></div>
<div style="left:1246px;top:1056px;width:1px;height:20px;background:#ececec"></div>
<div style="left:674px;top:1058.5px;height:15px;line-height:15px;font-size:11.3px;font-weight:normal;color:#111;white-space:nowrap;">Q</div>
<div style="left:793px;top:1058.5px;height:15px;line-height:15px;font-size:11.3px;font-weight:normal;color:#111;white-space:nowrap;">Quantity</div>
<div style="left:1011.5px;top:1058.5px;width:46px;height:15px;overflow:hidden"><div style="position:absolute;left:0;top:0;line-height:15px;font-size:11.3px;color:#111;white-space:nowrap">Non</div></div>
<div style="left:1063px;width:80px;text-align:right;top:1058.0px;height:16px;line-height:16px;font-size:12.3px;font-weight:bold;color:#111;white-space:nowrap;">1,00</div>
<div style="left:1149.5px;top:1058.5px;height:15px;line-height:15px;font-size:11.3px;font-weight:normal;color:#111;white-space:nowrap;">unit</div>
<div style="left:1215px;top:1059.5px;width:13px;height:13px;background:linear-gradient(135deg,#dedede,#fbfbfb 70%);border:1px solid #8a8a8a"></div>
<div style="left:650px;top:1095px;width:707px;height:1px;background:#ececec"></div>
<div style="left:650px;top:1095px;width:20px;height:1px;background:#bdbdbd"></div>
<div style="left:789px;top:1076px;width:1px;height:20px;background:#ececec"></div>
<div style="left:1008.5px;top:1076px;width:1px;height:20px;background:#ececec"></div>
<div style="left:1058px;top:1076px;width:1px;height:20px;background:#ececec"></div>
<div style="left:1146.5px;top:1076px;width:1px;height:20px;background:#ececec"></div>
<div style="left:1196px;top:1076px;width:1px;height:20px;background:#ececec"></div>
<div style="left:1246px;top:1076px;width:1px;height:20px;background:#ececec"></div>
<div style="left:674px;top:1078.5px;height:15px;line-height:15px;font-size:11.3px;font-weight:normal;color:#111;white-space:nowrap;">FQ</div>
<div style="left:793px;top:1078.5px;height:15px;line-height:15px;font-size:11.3px;font-weight:normal;color:#111;white-space:nowrap;">Final Quantity</div>
<div style="left:1011.5px;top:1078.5px;width:46px;height:15px;overflow:hidden"><div style="position:absolute;left:0;top:0;line-height:15px;font-size:11.3px;color:#111;white-space:nowrap">Non</div></div>
<div style="left:1063px;width:80px;text-align:right;top:1078.5px;height:15px;line-height:15px;font-size:11.3px;font-weight:normal;color:#111;white-space:nowrap;text-decoration:underline">1,00</div>
<div style="left:1149.5px;top:1078.5px;height:15px;line-height:15px;font-size:11.3px;font-weight:normal;color:#111;white-space:nowrap;">unit</div>
<div style="left:1215px;top:1079.5px;width:13px;height:13px;background:linear-gradient(135deg,#dedede,#fbfbfb 70%);border:1px solid #8a8a8a"></div>
<div style="left:650px;top:1115px;width:707px;height:1px;background:#ececec"></div>
<div style="left:650px;top:1115px;width:20px;height:1px;background:#bdbdbd"></div>
<div style="left:789px;top:1096px;width:1px;height:20px;background:#ececec"></div>
<div style="left:1008.5px;top:1096px;width:1px;height:20px;background:#ececec"></div>
<div style="left:1058px;top:1096px;width:1px;height:20px;background:#ececec"></div>
<div style="left:1146.5px;top:1096px;width:1px;height:20px;background:#ececec"></div>
<div style="left:1196px;top:1096px;width:1px;height:20px;background:#ececec"></div>
<div style="left:1246px;top:1096px;width:1px;height:20px;background:#ececec"></div>
<div style="left:674px;top:1098.5px;height:15px;line-height:15px;font-size:11.3px;font-weight:normal;color:#111;white-space:nowrap;">FC</div>
<div style="left:793px;top:1098.5px;height:15px;line-height:15px;font-size:11.3px;font-weight:normal;color:#111;white-space:nowrap;">Final Conversion</div>
<div style="left:1011.5px;top:1098.5px;width:46px;height:15px;overflow:hidden"><div style="position:absolute;left:0;top:0;line-height:15px;font-size:11.3px;color:#111;white-space:nowrap">Non</div></div>
<div style="left:1063px;width:80px;text-align:right;top:1098.5px;height:15px;line-height:15px;font-size:11.3px;font-weight:normal;color:#111;white-space:nowrap;text-decoration:underline">1 500,00</div>
<div style="left:1149.5px;top:1098.5px;height:15px;line-height:15px;font-size:11.3px;font-weight:normal;color:#111;white-space:nowrap;">ft2</div>
<div style="left:1215px;top:1099.5px;width:13px;height:13px;background:linear-gradient(135deg,#dedede,#fbfbfb 70%);border:1px solid #8a8a8a"></div>
<svg style="position:absolute;left:1216px;top:1100.5px;" width="11" height="11" viewBox="0 0 11 11"><path d="M2.5 5.5 L4.5 8.5 L8.8 1.8" stroke="#2c3e8c" stroke-width="1.4" fill="none"/></svg>
<div style="left:1058px;top:1116px;width:88.5px;height:20px;background:#fcf7e6"></div>
<div style="left:650px;top:1135px;width:707px;height:1px;background:#ececec"></div>
<div style="left:650px;top:1135px;width:20px;height:1px;background:#bdbdbd"></div>
<div style="left:789px;top:1116px;width:1px;height:20px;background:#ececec"></div>
<div style="left:1008.5px;top:1116px;width:1px;height:20px;background:#ececec"></div>
<div style="left:1058px;top:1116px;width:1px;height:20px;background:#ececec"></div>
<div style="left:1146.5px;top:1116px;width:1px;height:20px;background:#ececec"></div>
<div style="left:1196px;top:1116px;width:1px;height:20px;background:#ececec"></div>
<div style="left:1246px;top:1116px;width:1px;height:20px;background:#ececec"></div>
<div style="left:674px;top:1118.5px;height:15px;line-height:15px;font-size:11.3px;font-weight:normal;color:#111;white-space:nowrap;">Lgth</div>
<div style="left:793px;top:1118.5px;height:15px;line-height:15px;font-size:11.3px;font-weight:normal;color:#111;white-space:nowrap;">Lenght</div>
<div style="left:1011.5px;top:1118.5px;width:46px;height:15px;overflow:hidden"><div style="position:absolute;left:0;top:0;line-height:15px;font-size:11.3px;color:#111;white-space:nowrap">Validatio</div></div>
<div style="left:1063px;width:80px;text-align:right;top:1118.5px;height:15px;line-height:15px;font-size:11.3px;font-weight:normal;color:#111;white-space:nowrap;text-decoration:underline">110,00</div>
<div style="left:1149.5px;top:1118.5px;height:15px;line-height:15px;font-size:11.3px;font-weight:normal;color:#111;white-space:nowrap;">ft</div>
<div style="left:1215px;top:1119.5px;width:13px;height:13px;background:linear-gradient(135deg,#dedede,#fbfbfb 70%);border:1px solid #8a8a8a"></div>
<svg style="position:absolute;left:1216px;top:1120.5px;" width="11" height="11" viewBox="0 0 11 11"><path d="M2.5 5.5 L4.5 8.5 L8.8 1.8" stroke="#2c3e8c" stroke-width="1.4" fill="none"/></svg>
<div style="left:1058px;top:1137px;width:88.5px;height:17px;background:#fcf7e6"></div>
<div style="left:650px;top:1153px;width:707px;height:1px;background:#ececec"></div>
<div style="left:650px;top:1153px;width:20px;height:1px;background:#bdbdbd"></div>
<div style="left:789px;top:1137px;width:1px;height:17px;background:#ececec"></div>
<div style="left:1008.5px;top:1137px;width:1px;height:17px;background:#ececec"></div>
<div style="left:1058px;top:1137px;width:1px;height:17px;background:#ececec"></div>
<div style="left:1146.5px;top:1137px;width:1px;height:17px;background:#ececec"></div>
<div style="left:1196px;top:1137px;width:1px;height:17px;background:#ececec"></div>
<div style="left:1246px;top:1137px;width:1px;height:17px;background:#ececec"></div>
<div style="left:674px;top:1138.0px;height:15px;line-height:15px;font-size:11.3px;font-weight:normal;color:#111;white-space:nowrap;">Surf</div>
<div style="left:793px;top:1138.0px;height:15px;line-height:15px;font-size:11.3px;font-weight:normal;color:#111;white-space:nowrap;">Surface For Items</div>
<div style="left:1011.5px;top:1138.0px;width:46px;height:15px;overflow:hidden"><div style="position:absolute;left:0;top:0;line-height:15px;font-size:11.3px;color:#111;white-space:nowrap">Validatio</div></div>
<div style="left:1063px;width:80px;text-align:right;top:1138.0px;height:15px;line-height:15px;font-size:11.3px;font-weight:normal;color:#111;white-space:nowrap;text-decoration:underline">1 500,00</div>
<div style="left:1149.5px;top:1138.0px;height:15px;line-height:15px;font-size:11.3px;font-weight:normal;color:#111;white-space:nowrap;">ft2</div>
<div style="left:1215px;top:1139.0px;width:13px;height:13px;background:linear-gradient(135deg,#dedede,#fbfbfb 70%);border:1px solid #8a8a8a"></div>
<svg style="position:absolute;left:1216px;top:1140.0px;" width="11" height="11" viewBox="0 0 11 11"><path d="M2.5 5.5 L4.5 8.5 L8.8 1.8" stroke="#2c3e8c" stroke-width="1.4" fill="none"/></svg>
<div style="left:1058px;top:1154px;width:88.5px;height:20px;background:#fcf7e6"></div>
<div style="left:650px;top:1173px;width:707px;height:1px;background:#ececec"></div>
<div style="left:650px;top:1173px;width:20px;height:1px;background:#bdbdbd"></div>
<div style="left:789px;top:1154px;width:1px;height:20px;background:#ececec"></div>
<div style="left:1008.5px;top:1154px;width:1px;height:20px;background:#ececec"></div>
<div style="left:1058px;top:1154px;width:1px;height:20px;background:#ececec"></div>
<div style="left:1146.5px;top:1154px;width:1px;height:20px;background:#ececec"></div>
<div style="left:1196px;top:1154px;width:1px;height:20px;background:#ececec"></div>
<div style="left:1246px;top:1154px;width:1px;height:20px;background:#ececec"></div>
<div style="left:674px;top:1156.5px;height:15px;line-height:15px;font-size:11.3px;font-weight:normal;color:#111;white-space:nowrap;">SurfJointWalls-s</div>
<div style="left:793px;top:1156.5px;height:15px;line-height:15px;font-size:11.3px;font-weight:normal;color:#111;white-space:nowrap;">Surface Joints Walls (sum)</div>
<div style="left:1011.5px;top:1156.5px;width:46px;height:15px;overflow:hidden"><div style="position:absolute;left:0;top:0;line-height:15px;font-size:11.3px;color:#111;white-space:nowrap">Validatio</div></div>
<div style="left:1063px;width:80px;text-align:right;top:1156.5px;height:15px;line-height:15px;font-size:11.3px;font-weight:normal;color:#111;white-space:nowrap;text-decoration:underline">3 000,00</div>
<div style="left:1149.5px;top:1156.5px;height:15px;line-height:15px;font-size:11.3px;font-weight:normal;color:#111;white-space:nowrap;">ft2</div>
<div style="left:1215px;top:1157.5px;width:13px;height:13px;background:linear-gradient(135deg,#dedede,#fbfbfb 70%);border:1px solid #8a8a8a"></div>
<svg style="position:absolute;left:1216px;top:1158.5px;" width="11" height="11" viewBox="0 0 11 11"><path d="M2.5 5.5 L4.5 8.5 L8.8 1.8" stroke="#2c3e8c" stroke-width="1.4" fill="none"/></svg>
<div style="left:1058px;top:1174px;width:88.5px;height:20px;background:#fcf7e6"></div>
<div style="left:650px;top:1193px;width:707px;height:1px;background:#ececec"></div>
<div style="left:650px;top:1193px;width:20px;height:1px;background:#bdbdbd"></div>
<div style="left:789px;top:1174px;width:1px;height:20px;background:#ececec"></div>
<div style="left:1008.5px;top:1174px;width:1px;height:20px;background:#ececec"></div>
<div style="left:1058px;top:1174px;width:1px;height:20px;background:#ececec"></div>
<div style="left:1146.5px;top:1174px;width:1px;height:20px;background:#ececec"></div>
<div style="left:1196px;top:1174px;width:1px;height:20px;background:#ececec"></div>
<div style="left:1246px;top:1174px;width:1px;height:20px;background:#ececec"></div>
<div style="left:674px;top:1176.5px;height:15px;line-height:15px;font-size:11.3px;font-weight:normal;color:#111;white-space:nowrap;">SurfPrim-s</div>
<div style="left:793px;top:1176.5px;height:15px;line-height:15px;font-size:11.3px;font-weight:normal;color:#111;white-space:nowrap;">Surface Primer (sum)</div>
<div style="left:1011.5px;top:1176.5px;width:46px;height:15px;overflow:hidden"><div style="position:absolute;left:0;top:0;line-height:15px;font-size:11.3px;color:#111;white-space:nowrap">Validatio</div></div>
<div style="left:1063px;width:80px;text-align:right;top:1176.5px;height:15px;line-height:15px;font-size:11.3px;font-weight:normal;color:#111;white-space:nowrap;text-decoration:underline">3 000,00</div>
<div style="left:1149.5px;top:1176.5px;height:15px;line-height:15px;font-size:11.3px;font-weight:normal;color:#111;white-space:nowrap;">ft2</div>
<div style="left:1215px;top:1177.5px;width:13px;height:13px;background:linear-gradient(135deg,#dedede,#fbfbfb 70%);border:1px solid #8a8a8a"></div>
<svg style="position:absolute;left:1216px;top:1178.5px;" width="11" height="11" viewBox="0 0 11 11"><path d="M2.5 5.5 L4.5 8.5 L8.8 1.8" stroke="#2c3e8c" stroke-width="1.4" fill="none"/></svg>
<div style="left:1058px;top:1194px;width:88.5px;height:20px;background:#fcf7e6"></div>
<div style="left:650px;top:1213px;width:707px;height:1px;background:#ececec"></div>
<div style="left:650px;top:1213px;width:20px;height:1px;background:#bdbdbd"></div>
<div style="left:789px;top:1194px;width:1px;height:20px;background:#ececec"></div>
<div style="left:1008.5px;top:1194px;width:1px;height:20px;background:#ececec"></div>
<div style="left:1058px;top:1194px;width:1px;height:20px;background:#ececec"></div>
<div style="left:1146.5px;top:1194px;width:1px;height:20px;background:#ececec"></div>
<div style="left:1196px;top:1194px;width:1px;height:20px;background:#ececec"></div>
<div style="left:1246px;top:1194px;width:1px;height:20px;background:#ececec"></div>
<div style="left:674px;top:1196.5px;height:15px;line-height:15px;font-size:11.3px;font-weight:normal;color:#111;white-space:nowrap;">SurfPaint-s</div>
<div style="left:793px;top:1196.5px;height:15px;line-height:15px;font-size:11.3px;font-weight:normal;color:#111;white-space:nowrap;">Surface Paint (sum)</div>
<div style="left:1011.5px;top:1196.5px;width:46px;height:15px;overflow:hidden"><div style="position:absolute;left:0;top:0;line-height:15px;font-size:11.3px;color:#111;white-space:nowrap">Validatio</div></div>
<div style="left:1063px;width:80px;text-align:right;top:1196.5px;height:15px;line-height:15px;font-size:11.3px;font-weight:normal;color:#111;white-space:nowrap;text-decoration:underline">3 000,00</div>
<div style="left:1149.5px;top:1196.5px;height:15px;line-height:15px;font-size:11.3px;font-weight:normal;color:#111;white-space:nowrap;">ft2</div>
<div style="left:1215px;top:1197.5px;width:13px;height:13px;background:linear-gradient(135deg,#dedede,#fbfbfb 70%);border:1px solid #8a8a8a"></div>
<svg style="position:absolute;left:1216px;top:1198.5px;" width="11" height="11" viewBox="0 0 11 11"><path d="M2.5 5.5 L4.5 8.5 L8.8 1.8" stroke="#2c3e8c" stroke-width="1.4" fill="none"/></svg>
<div style="left:650px;top:1233px;width:707px;height:1px;background:#ececec"></div>
<div style="left:650px;top:1233px;width:20px;height:1px;background:#bdbdbd"></div>
<div style="left:789px;top:1214px;width:1px;height:20px;background:#ececec"></div>
<div style="left:1008.5px;top:1214px;width:1px;height:20px;background:#ececec"></div>
<div style="left:1058px;top:1214px;width:1px;height:20px;background:#ececec"></div>
<div style="left:1146.5px;top:1214px;width:1px;height:20px;background:#ececec"></div>
<div style="left:1196px;top:1214px;width:1px;height:20px;background:#ececec"></div>
<div style="left:1246px;top:1214px;width:1px;height:20px;background:#ececec"></div>
<div style="left:674px;top:1216.5px;height:15px;line-height:15px;font-size:11.3px;font-weight:normal;color:#111;white-space:nowrap;">NbIntLint</div>
<div style="left:793px;top:1216.5px;height:15px;line-height:15px;font-size:11.3px;font-weight:normal;color:#111;white-space:nowrap;">Number of interior lintels</div>
<div style="left:1011.5px;top:1216.5px;width:46px;height:15px;overflow:hidden"><div style="position:absolute;left:0;top:0;line-height:15px;font-size:11.3px;color:#111;white-space:nowrap">Non</div></div>
<div style="left:1063px;width:80px;text-align:right;top:1216.5px;height:15px;line-height:15px;font-size:11.3px;font-weight:normal;color:#111;white-space:nowrap;text-decoration:underline">0,00</div>
<div style="left:1149.5px;top:1216.5px;height:15px;line-height:15px;font-size:11.3px;font-weight:normal;color:#111;white-space:nowrap;">unit</div>
<div style="left:1215px;top:1217.5px;width:13px;height:13px;background:linear-gradient(135deg,#dedede,#fbfbfb 70%);border:1px solid #8a8a8a"></div>
<div style="left:650px;top:1253px;width:707px;height:1px;background:#ececec"></div>
<div style="left:650px;top:1253px;width:20px;height:1px;background:#bdbdbd"></div>
<div style="left:789px;top:1234px;width:1px;height:20px;background:#ececec"></div>
<div style="left:1008.5px;top:1234px;width:1px;height:20px;background:#ececec"></div>
<div style="left:1058px;top:1234px;width:1px;height:20px;background:#ececec"></div>
<div style="left:1146.5px;top:1234px;width:1px;height:20px;background:#ececec"></div>
<div style="left:1196px;top:1234px;width:1px;height:20px;background:#ececec"></div>
<div style="left:1246px;top:1234px;width:1px;height:20px;background:#ececec"></div>
<div style="left:674px;top:1236.5px;height:15px;line-height:15px;font-size:11.3px;font-weight:normal;color:#111;white-space:nowrap;">LengthIntLint</div>
<div style="left:793px;top:1236.5px;height:15px;line-height:15px;font-size:11.3px;font-weight:normal;color:#111;white-space:nowrap;">Length of Interior Lintels</div>
<div style="left:1011.5px;top:1236.5px;width:46px;height:15px;overflow:hidden"><div style="position:absolute;left:0;top:0;line-height:15px;font-size:11.3px;color:#111;white-space:nowrap">Non</div></div>
<div style="left:1063px;width:80px;text-align:right;top:1236.5px;height:15px;line-height:15px;font-size:11.3px;font-weight:normal;color:#111;white-space:nowrap;text-decoration:underline">0,00</div>
<div style="left:1149.5px;top:1236.5px;height:15px;line-height:15px;font-size:11.3px;font-weight:normal;color:#111;white-space:nowrap;">ft</div>
<div style="left:1215px;top:1237.5px;width:13px;height:13px;background:linear-gradient(135deg,#dedede,#fbfbfb 70%);border:1px solid #8a8a8a"></div>
<div style="left:670px;top:1136px;width:687px;height:2.5px;background:#000"></div>
<div style="left:670px;top:1153px;width:687px;height:2.5px;background:#000"></div>
<div style="left:670px;top:1036px;width:1px;height:222px;background:#a0a0a0"></div>
<div style="left:650px;top:1015px;width:1px;height:243px;background:#777"></div>
<div style="left:2038.5px;top:960.5px;width:56.5px;height:22px;background:#000"></div>
<div style="left:2046px;top:964.0px;height:15px;line-height:15px;font-size:11.3px;font-weight:normal;color:#fff;white-space:nowrap;">Formula</div>
<div style="left:2103px;top:964.0px;height:15px;line-height:15px;font-size:11.3px;font-weight:normal;color:#222;white-space:nowrap;">Description</div>
<div style="left:2166.5px;top:962px;width:1px;height:19px;background:#555"></div>
<div style="left:2175px;top:964.0px;height:15px;line-height:15px;font-size:11.3px;font-weight:normal;color:#222;white-space:nowrap;">Takeoff</div>
<div style="left:2220.5px;top:962px;width:1px;height:19px;background:#555"></div>
<div style="left:2039px;top:1002px;width:420px;height:260px;border:1px solid #aaa"></div>
<div style="left:2099px;top:1021.0px;height:15px;line-height:15px;font-size:11.3px;font-weight:normal;color:#333;white-space:nowrap;">Setting :</div>
<div style="left:2169px;top:1020.5px;width:290px;height:18.5px;background:#fff;border-left:1px solid #888;border-top:1px solid #ddd"></div>
<div style="left:2172px;top:1022.5px;height:15px;line-height:15px;font-size:11.3px;font-weight:normal;color:#222;white-space:nowrap;">Surface For Items</div>
<div style="left:2099px;top:1045.0px;height:15px;line-height:15px;font-size:11.3px;font-weight:normal;color:#333;white-space:nowrap;">Of item :</div>
<div style="left:2169px;top:1044.5px;width:290px;height:18.5px;background:#fff;border-left:1px solid #888;border-top:1px solid #ddd"></div>
<div style="left:2172px;top:1046.5px;height:15px;line-height:15px;font-size:11.3px;font-weight:normal;color:#222;white-space:nowrap;">Int. Partitions</div>
<div style="left:2100.5px;top:1075.5px;width:360px;height:52px;border:1px solid #aaa"></div>
<div style="left:2108px;top:1070px;width:33px;height:12px;background:#fff"></div>
<div style="left:2110px;top:1068.5px;height:15px;line-height:15px;font-size:11.3px;font-weight:normal;color:#333;white-space:nowrap;">Value</div>
<svg style="position:absolute;left:2115px;top:1086px;" width="12" height="12" viewBox="0 0 12 12"><circle cx="6" cy="6" r="5" fill="#fff" stroke="#666" stroke-width="1"/></svg>
<svg style="position:absolute;left:2115px;top:1108px;" width="12" height="12" viewBox="0 0 12 12"><circle cx="6" cy="6" r="5" fill="#fff" stroke="#666" stroke-width="1"/><circle cx="6" cy="6" r="2.2" fill="#111"/></svg>
<div style="left:2133px;top:1084.5px;height:15px;line-height:15px;font-size:11.3px;font-weight:normal;color:#222;white-space:nowrap;">Manual</div>
<div style="left:2133px;top:1106.5px;height:15px;line-height:15px;font-size:11.3px;font-weight:normal;color:#222;white-space:nowrap;">Formula</div>
<div style="left:2195px;top:1081px;width:132px;height:18px;background:#f0f0f0;border:1px solid #bbb"></div>
<div style="left:2340px;top:1081px;width:88px;height:18px;background:#fff;border:1px solid #bbb"></div>
<div style="left:2428px;top:1081px;width:20px;height:18px;background:#f3f3f3;border:1px solid #ccc"></div>
<div style="left:2429.0px;width:18px;text-align:center;top:1084.5px;height:13px;line-height:13px;font-size:10px;font-weight:normal;color:#999;white-space:nowrap;">...</div>
<div style="left:2195px;top:1103px;width:132px;height:18.5px;background:#fff;border:1px solid #999"></div>
<div style="left:2198px;top:1104.5px;height:15px;line-height:15px;font-size:11.3px;font-weight:normal;color:#111;white-space:nowrap;">1500</div>
<div style="left:2340px;top:1103px;width:88px;height:18.5px;background:#fff;border:1px solid #999"></div>
<div style="left:2343px;top:1104.5px;height:15px;line-height:15px;font-size:11.3px;font-weight:normal;color:#111;white-space:nowrap;">ft2</div>
<div style="left:2428px;top:1103px;width:20px;height:18.5px;background:#f3f3f3;border:1px solid #aaa"></div>
<div style="left:2429.0px;width:18px;text-align:center;top:1106.0px;height:14px;line-height:14px;font-size:11px;font-weight:normal;color:#222;white-space:nowrap;">...</div>
<svg style="position:absolute;left:2057px;top:1110px;" width="17" height="13" viewBox="0 0 17 13"><g stroke="#555" stroke-width="1.5" fill="none"><path d="M0 6.5 H15"/><path d="M9.5 1 L15 6.5 L9.5 12"/></g></svg>
<div style="left:2097px;top:1133px;width:360px;height:35px;background:#fff;border-top:2px solid #777;border-left:2px solid #777"></div>
<svg style="position:absolute;left:2105px;top:1139.5px;" width="21" height="21" viewBox="0 0 21 21"><path d="M0.5 20.5 L2 14.5 L14.5 2 Q16.2 0.3 18 2 L19 3 Q20.7 4.8 19 6.5 L6.5 19 Z" fill="#0f202c"/><path d="M4 16.5 L14.5 6" stroke="#fff" stroke-width="1.1"/></svg>
<svg style="position:absolute;left:2139px;top:1141px;" width="17" height="18" viewBox="0 0 17 18"><path d="M1 1 H12.5 L16 4.5 V17 H1 Z" fill="none" stroke="#6a6a6a" stroke-width="1.8"/><rect x="4" y="1" width="8" height="5" fill="#6a6a6a"/><rect x="8.5" y="2" width="2" height="3" fill="#fff"/></svg>
<svg style="position:absolute;left:2170.5px;top:1140px;" width="18" height="20" viewBox="0 0 18 20"><g fill="none" stroke="#666" stroke-width="1.3"><path d="M1 1 H12 L17 6 V19 H1 Z"/><path d="M12 1 V6 H17"/></g><text x="3" y="17.5" font-family="Liberation Serif" font-weight="bold" font-size="15" fill="#666">x</text></svg>
<svg style="position:absolute;left:2203px;top:1140px;" width="18" height="20" viewBox="0 0 18 20"><g fill="none" stroke="#9a9a9a" stroke-width="1.5"><path d="M1 16 V2 Q1 1 2 1 H9"/><path d="M4 19 V5 Q4 4 5 4 H12 L17 9 V18 Q17 19 16 19 H5 Q4 19 4 18"/><path d="M12 4 V9 H17"/></g></svg>
<svg style="position:absolute;left:2235.5px;top:1140.5px;" width="17" height="19" viewBox="0 0 17 19"><g fill="none" stroke="#9a9a9a" stroke-width="1.3"><path d="M5 2.5 H1 V15.5 H5.5"/><path d="M11 2.5 H12.5 V6"/><path d="M4 4 V1.8 H6.5 Q6.5 0.6 8 0.6 Q9.5 0.6 9.5 1.8 H12 V4 Z"/><path d="M5.5 18.3 V8 H12.5 L15.8 11.3 V18.3 Z"/></g></svg>
<svg style="position:absolute;left:2268px;top:1142px;" width="15" height="16" viewBox="0 0 15 16"><path d="M6.5 0.5 L0 6.5 L6.5 12.5 V8.5 Q12.5 8 13.5 15.5 Q15.5 4 6.5 4 Z" fill="#555"/></svg>
<div style="left:2304px;top:1138px;width:20px;height:22px;font-family:Liberation Serif;font-style:italic;font-size:17px;line-height:22px;color:#9a9a9a">fx</div>
<div style="left:2333px;top:1138px;width:22px;height:22px;font-family:Liberation Serif;font-size:15px;line-height:22px;color:#9a9a9a">&#8220;T&#8221;</div>
<svg style="position:absolute;left:2364.5px;top:1148px;" width="21" height="6" viewBox="0 0 21 6"><rect x="0" y="1" width="21" height="4" fill="#555"/><g fill="#fff"><rect x="2.0" y="1" width="0.9" height="2"/><rect x="4.5" y="1" width="0.9" height="2"/><rect x="7.0" y="1" width="0.9" height="2"/><rect x="9.5" y="1" width="0.9" height="2"/><rect x="12.0" y="1" width="0.9" height="2"/><rect x="14.5" y="1" width="0.9" height="2"/><rect x="17.0" y="1" width="0.9" height="2"/><rect x="19.5" y="1" width="0.9" height="2"/></g></svg>
<svg style="position:absolute;left:2397px;top:1140px;" width="21" height="20" viewBox="0 0 21 20"><g fill="none" stroke="#0f202c" stroke-width="1.5"><path d="M1 17 V1 H12 L17 6 V17"/><path d="M12 1 V6 H17"/></g><rect x="0" y="16" width="21" height="4" fill="#0f202c"/><g fill="#fff"><rect x="3" y="16" width="0.8" height="2"/><rect x="6" y="16" width="0.8" height="2"/><rect x="9" y="16" width="0.8" height="2"/><rect x="12" y="16" width="0.8" height="2"/><rect x="15" y="16" width="0.8" height="2"/><rect x="18" y="16" width="0.8" height="2"/></g></svg>
<div style="left:2097px;top:1167px;width:360px;height:100px;background:#fff;border-top:2px solid #777;border-left:2px solid #777"></div>
<div style="left:2102px;top:1171px;height:14px;line-height:14px;font-family:Liberation Mono;font-size:12.5px;font-weight:bold;color:#2a2ae8;white-space:nowrap">[Surf-s]</div>
<div style="left:1092px;top:480px;width:71px;height:17px;border:1px solid #3d9be9"></div>
<svg style="position:absolute;left:0;top:0" width="2457" height="1267" viewBox="0 0 2457 1267"><defs><filter id="sh" x="-20%" y="-20%" width="140%" height="140%"><feGaussianBlur in="SourceAlpha" stdDeviation="1.6"/><feOffset dx="2.5" dy="2.5" result="b"/><feComponentTransfer><feFuncA type="linear" slope="0.45"/></feComponentTransfer><feMerge><feMergeNode/><feMergeNode in="SourceGraphic"/></feMerge></filter></defs>
<g fill="none" filter="url(#sh)">
<ellipse cx="1150.5" cy="478" rx="62.2" ry="19.8" stroke="#1a1af0" stroke-width="2.8"/>
<ellipse cx="1159.7" cy="637" rx="60.8" ry="33.6" stroke="#1a1af0" stroke-width="2.9"/>
<ellipse cx="1026" cy="679.7" rx="66.3" ry="18.3" stroke="#1a1af0" stroke-width="2.9"/>
<path d="M1093 488 L1046.5 655" stroke="#1a1af0" stroke-width="2"/>
<path d="M1109.5 494 L1113.6 606" stroke="#1a1af0" stroke-width="2"/>
<path d="M1044.6 662 L1042.8 652.5 L1050.6 654.8 Z" fill="#1a1af0"/>
<path d="M1114 614 L1109.8 603.8 L1117.4 603.8 Z" fill="#1a1af0"/>
<ellipse cx="1150.5" cy="520" rx="41.8" ry="18.9" stroke="#870f12" stroke-width="3"/>
<ellipse cx="1382.3" cy="578.4" rx="54.3" ry="37.4" stroke="#870f12" stroke-width="3" transform="rotate(-4 1382.3 578.4)"/>
<ellipse cx="2128.4" cy="1169.7" rx="77" ry="38.5" stroke="#870f12" stroke-width="3"/>
<path d="M1327 576.5 L1200 530" stroke="#870f12" stroke-width="2.2"/>
<path d="M1192 527.3 L1203.2 525.4 L1199.3 534.8 Z" fill="#870f12"/>
<path d="M2126 1130 L2116.3 477 L1222 477" stroke="#870f12" stroke-width="2.2"/>
<path d="M1212.8 477 L1224 472.5 L1224 481.5 Z" fill="#870f12"/>
</g></svg>
<div style="left:0px;top:0px;width:2457px;height:5px;background:#000"></div>
<div style="left:0px;top:0px;width:5px;height:1267px;background:#000"></div>
<div style="left:2448px;top:0px;width:9px;height:1267px;background:#000"></div>
<div style="left:0px;top:1258px;width:2457px;height:9px;background:#000"></div>
</div></body></html>
